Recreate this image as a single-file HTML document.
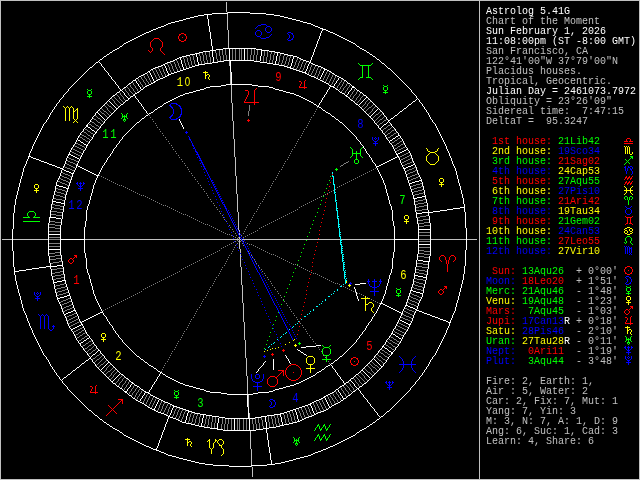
<!DOCTYPE html>
<html><head><meta charset="utf-8"><title>Astrolog 5.41G</title>
<style>
html,body{margin:0;padding:0;background:#000;width:640px;height:480px;overflow:hidden}
svg{position:absolute;left:0;top:0}
#all{position:absolute;left:0;top:0;width:640px;height:480px;will-change:transform}
.t{position:absolute;left:486px;height:10px;font:10px/10px "Liberation Mono",monospace;white-space:pre;color:#c0c0c0}
.w{color:#fff}.l{color:#c0c0c0}.r{color:#f00}.y{color:#ff0}.g{color:#0f0}.b{color:#00f}
svg text{font:13.5px "Liberation Mono",monospace;text-anchor:middle;letter-spacing:2.15px}
svg .z{font:12.5px "Liberation Sans",sans-serif}
</style></head><body>
<div id="all">
<svg width="640" height="480" viewBox="0 0 640 480" shape-rendering="crispEdges">
<path fill="#ffffff" d="M228 12h22v1h-22zM212 13h16v1h-16zM250 13h16v1h-16zM204 14h8v1h-8zM266 14h8v1h-8zM198 15h6v1h-6zM207 15h1v1h-1zM274 15h6v1h-6zM194 16h4v1h-4zM207 16h1v1h-1zM280 16h4v1h-4zM190 17h4v1h-4zM207 17h1v1h-1zM284 17h4v1h-4zM186 18h4v1h-4zM207 18h1v1h-1zM288 18h4v1h-4zM183 19h3v1h-3zM208 19h1v1h-1zM292 19h4v1h-4zM179 20h4v1h-4zM208 20h1v1h-1zM296 20h4v1h-4zM175 21h4v1h-4zM208 21h1v1h-1zM300 21h3v1h-3zM171 22h4v1h-4zM208 22h1v1h-1zM303 22h4v1h-4zM168 23h3v1h-3zM208 23h1v1h-1zM307 23h4v1h-4zM166 24h2v1h-2zM208 24h1v1h-1zM311 24h2v1h-2zM164 25h2v1h-2zM208 25h1v1h-1zM313 25h2v1h-2zM161 26h3v1h-3zM209 26h1v1h-1zM315 26h3v1h-3zM158 27h3v1h-3zM209 27h1v1h-1zM318 27h2v1h-2zM156 28h2v1h-2zM209 28h1v1h-1zM320 28h3v1h-3zM153 29h3v1h-3zM209 29h1v1h-1zM322 29h4v1h-4zM151 30h2v1h-2zM209 30h1v1h-1zM322 30h1v1h-1zM326 30h2v1h-2zM149 31h2v1h-2zM209 31h1v1h-1zM321 31h1v1h-1zM328 31h2v1h-2zM146 32h3v1h-3zM210 32h1v1h-1zM321 32h1v1h-1zM330 32h3v1h-3zM144 33h2v1h-2zM210 33h1v1h-1zM320 33h1v1h-1zM333 33h2v1h-2zM142 34h2v1h-2zM210 34h1v1h-1zM320 34h1v1h-1zM335 34h2v1h-2zM140 35h2v1h-2zM210 35h1v1h-1zM320 35h1v1h-1zM337 35h2v1h-2zM138 36h2v1h-2zM210 36h1v1h-1zM319 36h1v1h-1zM339 36h2v1h-2zM136 37h2v1h-2zM210 37h1v1h-1zM319 37h1v1h-1zM341 37h2v1h-2zM134 38h2v1h-2zM210 38h1v1h-1zM319 38h1v1h-1zM343 38h2v1h-2zM132 39h2v1h-2zM211 39h1v1h-1zM318 39h1v1h-1zM345 39h2v1h-2zM130 40h2v1h-2zM211 40h1v1h-1zM318 40h1v1h-1zM347 40h2v1h-2zM128 41h2v1h-2zM211 41h1v1h-1zM317 41h1v1h-1zM349 41h2v1h-2zM126 42h2v1h-2zM211 42h1v1h-1zM317 42h1v1h-1zM351 42h2v1h-2zM124 43h2v1h-2zM211 43h1v1h-1zM317 43h1v1h-1zM353 43h2v1h-2zM123 44h1v1h-1zM211 44h1v1h-1zM316 44h1v1h-1zM355 44h1v1h-1zM122 45h1v1h-1zM211 45h1v1h-1zM316 45h1v1h-1zM356 45h1v1h-1zM120 46h2v1h-2zM212 46h1v1h-1zM316 46h1v1h-1zM357 46h2v1h-2zM119 47h1v1h-1zM212 47h1v1h-1zM315 47h1v1h-1zM359 47h1v1h-1zM117 48h2v1h-2zM212 48h1v1h-1zM223 48h33v1h-33zM315 48h1v1h-1zM360 48h2v1h-2zM115 49h2v1h-2zM212 49h1v1h-1zM216 49h7v1h-7zM229 49h1v1h-1zM244 49h1v1h-1zM256 49h6v1h-6zM314 49h1v1h-1zM362 49h2v1h-2zM113 50h2v1h-2zM210 50h6v1h-6zM229 50h1v1h-1zM244 50h1v1h-1zM261 50h8v1h-8zM314 50h1v1h-1zM364 50h2v1h-2zM112 51h1v1h-1zM203 51h7v1h-7zM212 51h1v1h-1zM229 51h1v1h-1zM244 51h1v1h-1zM261 51h1v1h-1zM269 51h6v1h-6zM314 51h1v1h-1zM366 51h1v1h-1zM110 52h2v1h-2zM199 52h4v1h-4zM212 52h1v1h-1zM229 52h1v1h-1zM244 52h1v1h-1zM261 52h1v1h-1zM275 52h5v1h-5zM313 52h1v1h-1zM367 52h2v1h-2zM109 53h1v1h-1zM195 53h4v1h-4zM212 53h1v1h-1zM229 53h1v1h-1zM244 53h1v1h-1zM261 53h1v1h-1zM277 53h1v1h-1zM280 53h4v1h-4zM313 53h1v1h-1zM369 53h1v1h-1zM107 54h2v1h-2zM190 54h5v1h-5zM196 54h1v1h-1zM212 54h1v1h-1zM229 54h1v1h-1zM244 54h1v1h-1zM261 54h1v1h-1zM277 54h1v1h-1zM284 54h4v1h-4zM313 54h1v1h-1zM370 54h2v1h-2zM106 55h1v1h-1zM186 55h4v1h-4zM196 55h1v1h-1zM212 55h1v1h-1zM229 55h1v1h-1zM244 55h1v1h-1zM261 55h1v1h-1zM277 55h1v1h-1zM288 55h5v1h-5zM312 55h1v1h-1zM372 55h1v1h-1zM104 56h2v1h-2zM182 56h4v1h-4zM196 56h1v1h-1zM212 56h1v1h-1zM229 56h1v1h-1zM244 56h1v1h-1zM260 56h1v1h-1zM276 56h1v1h-1zM293 56h4v1h-4zM312 56h1v1h-1zM373 56h2v1h-2zM103 57h1v1h-1zM179 57h3v1h-3zM197 57h1v1h-1zM213 57h1v1h-1zM229 57h1v1h-1zM244 57h1v1h-1zM260 57h1v1h-1zM276 57h1v1h-1zM293 57h1v1h-1zM297 57h2v1h-2zM311 57h1v1h-1zM375 57h1v1h-1zM102 58h1v1h-1zM177 58h2v1h-2zM180 58h1v1h-1zM197 58h1v1h-1zM213 58h1v1h-1zM229 58h1v1h-1zM244 58h1v1h-1zM260 58h1v1h-1zM276 58h1v1h-1zM293 58h1v1h-1zM299 58h2v1h-2zM311 58h1v1h-1zM376 58h1v1h-1zM100 59h2v1h-2zM175 59h2v1h-2zM180 59h1v1h-1zM197 59h1v1h-1zM213 59h1v1h-1zM229 59h1v1h-1zM244 59h1v1h-1zM260 59h1v1h-1zM276 59h1v1h-1zM292 59h1v1h-1zM301 59h2v1h-2zM311 59h1v1h-1zM377 59h2v1h-2zM99 60h1v1h-1zM173 60h2v1h-2zM181 60h1v1h-1zM197 60h1v1h-1zM213 60h1v1h-1zM224 60h30v1h-30zM260 60h1v1h-1zM276 60h1v1h-1zM292 60h1v1h-1zM303 60h3v1h-3zM310 60h1v1h-1zM379 60h1v1h-1zM98 61h1v1h-1zM170 61h3v1h-3zM181 61h1v1h-1zM197 61h1v1h-1zM213 61h1v1h-1zM218 61h6v1h-6zM230 61h1v1h-1zM254 61h6v1h-6zM275 61h1v1h-1zM292 61h1v1h-1zM306 61h3v1h-3zM310 61h1v1h-1zM380 61h1v1h-1zM96 62h2v1h-2zM99 62h1v1h-1zM167 62h3v1h-3zM181 62h1v1h-1zM198 62h1v1h-1zM212 62h6v1h-6zM230 62h1v1h-1zM260 62h7v1h-7zM275 62h1v1h-1zM292 62h1v1h-1zM309 62h2v1h-2zM381 62h1v1h-1zM95 63h1v1h-1zM100 63h1v1h-1zM165 63h2v1h-2zM181 63h1v1h-1zM198 63h1v1h-1zM205 63h7v1h-7zM230 63h1v1h-1zM267 63h6v1h-6zM275 63h1v1h-1zM291 63h1v1h-1zM309 63h1v1h-1zM311 63h2v1h-2zM382 63h2v1h-2zM94 64h1v1h-1zM101 64h1v1h-1zM163 64h2v1h-2zM182 64h1v1h-1zM198 64h7v1h-7zM230 64h1v1h-1zM273 64h6v1h-6zM291 64h1v1h-1zM308 64h1v1h-1zM313 64h2v1h-2zM384 64h1v1h-1zM93 65h1v1h-1zM101 65h1v1h-1zM161 65h2v1h-2zM164 65h1v1h-1zM182 65h1v1h-1zM195 65h4v1h-4zM230 65h1v1h-1zM279 65h5v1h-5zM291 65h1v1h-1zM308 65h1v1h-1zM315 65h3v1h-3zM385 65h1v1h-1zM92 66h1v1h-1zM102 66h1v1h-1zM158 66h3v1h-3zM165 66h1v1h-1zM182 66h1v1h-1zM192 66h3v1h-3zM230 66h1v1h-1zM284 66h3v1h-3zM290 66h1v1h-1zM307 66h1v1h-1zM318 66h3v1h-3zM386 66h1v1h-1zM90 67h2v1h-2zM103 67h1v1h-1zM155 67h3v1h-3zM165 67h1v1h-1zM183 67h1v1h-1zM189 67h3v1h-3zM230 67h1v1h-1zM287 67h4v1h-4zM307 67h1v1h-1zM321 67h2v1h-2zM387 67h1v1h-1zM89 68h1v1h-1zM104 68h1v1h-1zM153 68h2v1h-2zM166 68h1v1h-1zM183 68h1v1h-1zM186 68h3v1h-3zM230 68h1v1h-1zM290 68h3v1h-3zM307 68h1v1h-1zM323 68h2v1h-2zM388 68h2v1h-2zM88 69h1v1h-1zM104 69h1v1h-1zM151 69h2v1h-2zM166 69h1v1h-1zM183 69h3v1h-3zM230 69h1v1h-1zM293 69h3v1h-3zM306 69h1v1h-1zM324 69h3v1h-3zM390 69h1v1h-1zM87 70h1v1h-1zM105 70h1v1h-1zM150 70h1v1h-1zM166 70h1v1h-1zM180 70h3v1h-3zM230 70h1v1h-1zM296 70h3v1h-3zM306 70h1v1h-1zM324 70h1v1h-1zM327 70h2v1h-2zM391 70h1v1h-1zM86 71h1v1h-1zM106 71h1v1h-1zM148 71h2v1h-2zM167 71h1v1h-1zM177 71h3v1h-3zM230 71h1v1h-1zM299 71h3v1h-3zM305 71h1v1h-1zM323 71h1v1h-1zM329 71h2v1h-2zM392 71h1v1h-1zM85 72h1v1h-1zM107 72h1v1h-1zM147 72h1v1h-1zM149 72h1v1h-1zM167 72h1v1h-1zM174 72h3v1h-3zM231 72h1v1h-1zM302 72h4v1h-4zM323 72h1v1h-1zM331 72h1v1h-1zM393 72h1v1h-1zM84 73h1v1h-1zM108 73h1v1h-1zM145 73h2v1h-2zM150 73h1v1h-1zM168 73h1v1h-1zM171 73h3v1h-3zM231 73h1v1h-1zM305 73h2v1h-2zM322 73h1v1h-1zM332 73h2v1h-2zM394 73h1v1h-1zM83 74h1v1h-1zM108 74h1v1h-1zM143 74h2v1h-2zM150 74h1v1h-1zM168 74h3v1h-3zM231 74h1v1h-1zM307 74h2v1h-2zM322 74h1v1h-1zM334 74h1v1h-1zM395 74h1v1h-1zM82 75h1v1h-1zM109 75h1v1h-1zM141 75h2v1h-2zM151 75h1v1h-1zM167 75h2v1h-2zM231 75h1v1h-1zM309 75h2v1h-2zM321 75h1v1h-1zM335 75h2v1h-2zM396 75h1v1h-1zM81 76h1v1h-1zM110 76h1v1h-1zM139 76h2v1h-2zM151 76h1v1h-1zM165 76h2v1h-2zM231 76h1v1h-1zM311 76h3v1h-3zM321 76h1v1h-1zM337 76h2v1h-2zM397 76h1v1h-1zM80 77h1v1h-1zM111 77h1v1h-1zM138 77h1v1h-1zM152 77h1v1h-1zM163 77h2v1h-2zM231 77h1v1h-1zM314 77h2v1h-2zM320 77h1v1h-1zM339 77h2v1h-2zM398 77h1v1h-1zM79 78h1v1h-1zM111 78h1v1h-1zM136 78h2v1h-2zM152 78h1v1h-1zM160 78h3v1h-3zM231 78h1v1h-1zM316 78h2v1h-2zM320 78h1v1h-1zM338 78h1v1h-1zM341 78h2v1h-2zM399 78h1v1h-1zM78 79h1v1h-1zM112 79h1v1h-1zM135 79h1v1h-1zM153 79h1v1h-1zM158 79h2v1h-2zM231 79h1v1h-1zM318 79h2v1h-2zM338 79h1v1h-1zM343 79h1v1h-1zM400 79h1v1h-1zM77 80h1v1h-1zM113 80h1v1h-1zM133 80h3v1h-3zM153 80h1v1h-1zM156 80h2v1h-2zM231 80h1v1h-1zM320 80h2v1h-2zM337 80h1v1h-1zM344 80h2v1h-2zM401 80h1v1h-1zM76 81h1v1h-1zM114 81h1v1h-1zM132 81h1v1h-1zM136 81h1v1h-1zM154 81h2v1h-2zM231 81h1v1h-1zM322 81h2v1h-2zM336 81h1v1h-1zM346 81h1v1h-1zM402 81h1v1h-1zM75 82h1v1h-1zM115 82h1v1h-1zM131 82h1v1h-1zM136 82h1v1h-1zM153 82h2v1h-2zM231 82h1v1h-1zM324 82h2v1h-2zM336 82h1v1h-1zM347 82h1v1h-1zM403 82h1v1h-1zM74 83h1v1h-1zM115 83h1v1h-1zM129 83h2v1h-2zM137 83h1v1h-1zM151 83h2v1h-2zM231 83h1v1h-1zM326 83h2v1h-2zM335 83h1v1h-1zM348 83h2v1h-2zM404 83h1v1h-1zM73 84h1v1h-1zM116 84h1v1h-1zM128 84h1v1h-1zM138 84h1v1h-1zM149 84h2v1h-2zM226 84h26v1h-26zM328 84h1v1h-1zM334 84h1v1h-1zM350 84h1v1h-1zM405 84h1v1h-1zM72 85h1v1h-1zM117 85h1v1h-1zM127 85h1v1h-1zM138 85h1v1h-1zM147 85h2v1h-2zM221 85h5v1h-5zM252 85h6v1h-6zM329 85h2v1h-2zM334 85h1v1h-1zM351 85h1v1h-1zM406 85h1v1h-1zM71 86h1v1h-1zM118 86h1v1h-1zM126 86h1v1h-1zM139 86h1v1h-1zM145 86h2v1h-2zM210 86h11v1h-11zM258 86h11v1h-11zM330 86h4v1h-4zM352 86h2v1h-2zM407 86h1v1h-1zM70 87h1v1h-1zM118 87h1v1h-1zM124 87h2v1h-2zM140 87h1v1h-1zM144 87h1v1h-1zM206 87h4v1h-4zM269 87h4v1h-4zM329 87h1v1h-1zM333 87h2v1h-2zM352 87h3v1h-3zM408 87h1v1h-1zM69 88h1v1h-1zM119 88h1v1h-1zM123 88h1v1h-1zM140 88h1v1h-1zM143 88h1v1h-1zM204 88h2v1h-2zM273 88h2v1h-2zM329 88h1v1h-1zM335 88h1v1h-1zM351 88h1v1h-1zM355 88h1v1h-1zM409 88h1v1h-1zM68 89h1v1h-1zM120 89h1v1h-1zM122 89h1v1h-1zM141 89h2v1h-2zM200 89h4v1h-4zM275 89h4v1h-4zM328 89h1v1h-1zM336 89h2v1h-2zM351 89h1v1h-1zM356 89h1v1h-1zM410 89h1v1h-1zM68 90h1v1h-1zM120 90h2v1h-2zM140 90h1v1h-1zM196 90h4v1h-4zM279 90h4v1h-4zM327 90h1v1h-1zM338 90h1v1h-1zM350 90h1v1h-1zM357 90h2v1h-2zM411 90h1v1h-1zM67 91h1v1h-1zM119 91h1v1h-1zM122 91h1v1h-1zM139 91h1v1h-1zM193 91h3v1h-3zM283 91h3v1h-3zM327 91h1v1h-1zM339 91h1v1h-1zM349 91h1v1h-1zM359 91h1v1h-1zM411 91h1v1h-1zM66 92h1v1h-1zM117 92h2v1h-2zM123 92h1v1h-1zM137 92h2v1h-2zM189 92h4v1h-4zM286 92h4v1h-4zM326 92h1v1h-1zM340 92h2v1h-2zM348 92h1v1h-1zM360 92h2v1h-2zM412 92h1v1h-1zM65 93h1v1h-1zM116 93h1v1h-1zM124 93h1v1h-1zM135 93h2v1h-2zM185 93h4v1h-4zM290 93h4v1h-4zM326 93h1v1h-1zM342 93h2v1h-2zM348 93h1v1h-1zM362 93h1v1h-1zM413 93h1v1h-1zM64 94h1v1h-1zM115 94h1v1h-1zM124 94h1v1h-1zM134 94h1v1h-1zM183 94h2v1h-2zM294 94h2v1h-2zM325 94h1v1h-1zM344 94h1v1h-1zM347 94h1v1h-1zM363 94h1v1h-1zM414 94h1v1h-1zM63 95h1v1h-1zM113 95h2v1h-2zM125 95h1v1h-1zM133 95h2v1h-2zM180 95h3v1h-3zM296 95h3v1h-3zM324 95h1v1h-1zM345 95h2v1h-2zM364 95h2v1h-2zM415 95h1v1h-1zM63 96h1v1h-1zM112 96h1v1h-1zM126 96h1v1h-1zM131 96h2v1h-2zM135 96h1v1h-1zM178 96h2v1h-2zM299 96h2v1h-2zM324 96h1v1h-1zM346 96h2v1h-2zM366 96h1v1h-1zM416 96h1v1h-1zM62 97h1v1h-1zM111 97h1v1h-1zM127 97h1v1h-1zM130 97h1v1h-1zM135 97h1v1h-1zM176 97h2v1h-2zM301 97h2v1h-2zM323 97h1v1h-1zM348 97h1v1h-1zM366 97h2v1h-2zM416 97h1v1h-1zM61 98h1v1h-1zM110 98h1v1h-1zM128 98h2v1h-2zM136 98h1v1h-1zM174 98h2v1h-2zM303 98h2v1h-2zM322 98h1v1h-1zM349 98h1v1h-1zM365 98h1v1h-1zM368 98h1v1h-1zM417 98h1v1h-1zM60 99h1v1h-1zM109 99h1v1h-1zM128 99h1v1h-1zM137 99h1v1h-1zM172 99h2v1h-2zM305 99h2v1h-2zM322 99h1v1h-1zM350 99h1v1h-1zM364 99h1v1h-1zM369 99h1v1h-1zM416 99h1v1h-1zM418 99h1v1h-1zM59 100h1v1h-1zM108 100h1v1h-1zM126 100h2v1h-2zM138 100h1v1h-1zM170 100h2v1h-2zM307 100h2v1h-2zM321 100h1v1h-1zM351 100h2v1h-2zM363 100h1v1h-1zM370 100h1v1h-1zM415 100h1v1h-1zM419 100h1v1h-1zM59 101h1v1h-1zM107 101h1v1h-1zM109 101h1v1h-1zM125 101h1v1h-1zM138 101h1v1h-1zM168 101h2v1h-2zM309 101h2v1h-2zM321 101h1v1h-1zM353 101h1v1h-1zM362 101h1v1h-1zM371 101h1v1h-1zM413 101h2v1h-2zM419 101h1v1h-1zM58 102h1v1h-1zM106 102h1v1h-1zM110 102h1v1h-1zM124 102h1v1h-1zM139 102h1v1h-1zM166 102h2v1h-2zM311 102h2v1h-2zM320 102h1v1h-1zM354 102h1v1h-1zM361 102h1v1h-1zM372 102h1v1h-1zM412 102h1v1h-1zM420 102h1v1h-1zM57 103h1v1h-1zM105 103h1v1h-1zM111 103h1v1h-1zM123 103h1v1h-1zM140 103h1v1h-1zM164 103h2v1h-2zM313 103h1v1h-1zM319 103h1v1h-1zM355 103h1v1h-1zM360 103h1v1h-1zM373 103h1v1h-1zM411 103h1v1h-1zM421 103h1v1h-1zM56 104h1v1h-1zM104 104h1v1h-1zM112 104h1v1h-1zM121 104h2v1h-2zM141 104h1v1h-1zM163 104h1v1h-1zM314 104h2v1h-2zM319 104h1v1h-1zM356 104h2v1h-2zM359 104h1v1h-1zM374 104h1v1h-1zM409 104h2v1h-2zM422 104h1v1h-1zM56 105h1v1h-1zM103 105h1v1h-1zM113 105h1v1h-1zM120 105h1v1h-1zM141 105h1v1h-1zM162 105h1v1h-1zM316 105h1v1h-1zM318 105h1v1h-1zM358 105h1v1h-1zM375 105h1v1h-1zM408 105h1v1h-1zM422 105h1v1h-1zM55 106h1v1h-1zM102 106h1v1h-1zM114 106h1v1h-1zM119 106h1v1h-1zM142 106h1v1h-1zM160 106h2v1h-2zM317 106h2v1h-2zM359 106h1v1h-1zM376 106h1v1h-1zM407 106h1v1h-1zM423 106h1v1h-1zM54 107h1v1h-1zM101 107h1v1h-1zM115 107h1v1h-1zM118 107h1v1h-1zM143 107h1v1h-1zM158 107h2v1h-2zM319 107h2v1h-2zM360 107h1v1h-1zM377 107h1v1h-1zM406 107h1v1h-1zM424 107h1v1h-1zM54 108h1v1h-1zM100 108h1v1h-1zM116 108h2v1h-2zM143 108h1v1h-1zM157 108h1v1h-1zM321 108h1v1h-1zM361 108h1v1h-1zM378 108h1v1h-1zM404 108h2v1h-2zM424 108h1v1h-1zM53 109h1v1h-1zM99 109h1v1h-1zM116 109h1v1h-1zM144 109h1v1h-1zM155 109h2v1h-2zM322 109h1v1h-1zM362 109h1v1h-1zM377 109h1v1h-1zM379 109h1v1h-1zM403 109h1v1h-1zM425 109h1v1h-1zM52 110h1v1h-1zM98 110h1v1h-1zM115 110h1v1h-1zM145 110h1v1h-1zM154 110h1v1h-1zM323 110h2v1h-2zM363 110h1v1h-1zM376 110h1v1h-1zM380 110h1v1h-1zM402 110h1v1h-1zM426 110h1v1h-1zM52 111h1v1h-1zM97 111h1v1h-1zM114 111h1v1h-1zM146 111h1v1h-1zM153 111h1v1h-1zM325 111h1v1h-1zM364 111h1v1h-1zM375 111h1v1h-1zM381 111h1v1h-1zM400 111h2v1h-2zM426 111h1v1h-1zM51 112h1v1h-1zM96 112h2v1h-2zM113 112h1v1h-1zM146 112h1v1h-1zM151 112h2v1h-2zM326 112h2v1h-2zM365 112h1v1h-1zM374 112h1v1h-1zM382 112h1v1h-1zM399 112h1v1h-1zM427 112h1v1h-1zM50 113h1v1h-1zM95 113h1v1h-1zM98 113h1v1h-1zM112 113h1v1h-1zM147 113h1v1h-1zM149 113h2v1h-2zM328 113h2v1h-2zM366 113h1v1h-1zM373 113h1v1h-1zM383 113h1v1h-1zM398 113h1v1h-1zM428 113h1v1h-1zM50 114h1v1h-1zM95 114h1v1h-1zM99 114h1v1h-1zM111 114h1v1h-1zM148 114h1v1h-1zM330 114h1v1h-1zM367 114h1v1h-1zM372 114h1v1h-1zM383 114h1v1h-1zM397 114h1v1h-1zM428 114h1v1h-1zM49 115h1v1h-1zM94 115h1v1h-1zM100 115h1v1h-1zM110 115h1v1h-1zM146 115h2v1h-2zM331 115h1v1h-1zM368 115h1v1h-1zM371 115h1v1h-1zM384 115h1v1h-1zM395 115h2v1h-2zM429 115h1v1h-1zM49 116h1v1h-1zM93 116h1v1h-1zM101 116h1v1h-1zM109 116h1v1h-1zM145 116h1v1h-1zM332 116h2v1h-2zM369 116h2v1h-2zM385 116h1v1h-1zM394 116h1v1h-1zM429 116h1v1h-1zM48 117h1v1h-1zM92 117h1v1h-1zM102 117h1v1h-1zM108 117h1v1h-1zM144 117h1v1h-1zM334 117h1v1h-1zM370 117h1v1h-1zM386 117h1v1h-1zM393 117h1v1h-1zM430 117h1v1h-1zM48 118h1v1h-1zM92 118h1v1h-1zM103 118h1v1h-1zM107 118h1v1h-1zM142 118h2v1h-2zM335 118h1v1h-1zM371 118h1v1h-1zM386 118h1v1h-1zM391 118h2v1h-2zM430 118h1v1h-1zM47 119h1v1h-1zM91 119h1v1h-1zM104 119h1v1h-1zM106 119h1v1h-1zM141 119h1v1h-1zM179 119h1v1h-1zM336 119h2v1h-2zM372 119h1v1h-1zM387 119h1v1h-1zM390 119h1v1h-1zM431 119h1v1h-1zM46 120h1v1h-1zM90 120h1v1h-1zM105 120h1v1h-1zM140 120h1v1h-1zM179 120h1v1h-1zM338 120h1v1h-1zM373 120h1v1h-1zM388 120h2v1h-2zM432 120h1v1h-1zM46 121h1v1h-1zM90 121h1v1h-1zM104 121h1v1h-1zM139 121h1v1h-1zM180 121h1v1h-1zM339 121h1v1h-1zM374 121h1v1h-1zM388 121h1v1h-1zM432 121h1v1h-1zM45 122h1v1h-1zM89 122h1v1h-1zM104 122h1v1h-1zM137 122h2v1h-2zM180 122h1v1h-1zM340 122h2v1h-2zM374 122h1v1h-1zM387 122h1v1h-1zM389 122h1v1h-1zM433 122h1v1h-1zM44 123h1v1h-1zM88 123h1v1h-1zM103 123h1v1h-1zM136 123h1v1h-1zM181 123h1v1h-1zM342 123h1v1h-1zM375 123h1v1h-1zM386 123h1v1h-1zM390 123h1v1h-1zM434 123h1v1h-1zM43 124h1v1h-1zM87 124h1v1h-1zM102 124h1v1h-1zM135 124h1v1h-1zM181 124h1v1h-1zM343 124h1v1h-1zM376 124h1v1h-1zM384 124h2v1h-2zM391 124h1v1h-1zM435 124h1v1h-1zM43 125h1v1h-1zM86 125h2v1h-2zM101 125h1v1h-1zM134 125h1v1h-1zM182 125h1v1h-1zM344 125h1v1h-1zM377 125h1v1h-1zM383 125h1v1h-1zM391 125h1v1h-1zM435 125h1v1h-1zM42 126h1v1h-1zM86 126h2v1h-2zM100 126h1v1h-1zM133 126h1v1h-1zM182 126h1v1h-1zM345 126h1v1h-1zM378 126h1v1h-1zM382 126h1v1h-1zM392 126h1v1h-1zM436 126h1v1h-1zM42 127h1v1h-1zM85 127h1v1h-1zM88 127h2v1h-2zM100 127h1v1h-1zM132 127h1v1h-1zM183 127h1v1h-1zM346 127h1v1h-1zM378 127h1v1h-1zM381 127h1v1h-1zM393 127h1v1h-1zM436 127h1v1h-1zM41 128h1v1h-1zM84 128h1v1h-1zM90 128h1v1h-1zM99 128h1v1h-1zM131 128h1v1h-1zM183 128h1v1h-1zM347 128h1v1h-1zM379 128h2v1h-2zM394 128h1v1h-1zM437 128h1v1h-1zM41 129h1v1h-1zM83 129h1v1h-1zM91 129h1v1h-1zM98 129h1v1h-1zM130 129h1v1h-1zM348 129h1v1h-1zM380 129h1v1h-1zM395 129h1v1h-1zM437 129h1v1h-1zM40 130h1v1h-1zM83 130h1v1h-1zM92 130h2v1h-2zM97 130h1v1h-1zM129 130h1v1h-1zM349 130h1v1h-1zM381 130h1v1h-1zM395 130h1v1h-1zM438 130h1v1h-1zM40 131h1v1h-1zM82 131h1v1h-1zM94 131h1v1h-1zM96 131h1v1h-1zM128 131h1v1h-1zM350 131h1v1h-1zM382 131h1v1h-1zM396 131h1v1h-1zM438 131h1v1h-1zM39 132h1v1h-1zM81 132h1v1h-1zM95 132h2v1h-2zM127 132h1v1h-1zM351 132h1v1h-1zM382 132h1v1h-1zM397 132h1v1h-1zM439 132h1v1h-1zM39 133h1v1h-1zM80 133h1v1h-1zM95 133h1v1h-1zM126 133h1v1h-1zM352 133h1v1h-1zM383 133h1v1h-1zM398 133h1v1h-1zM439 133h1v1h-1zM38 134h1v1h-1zM80 134h1v1h-1zM94 134h1v1h-1zM125 134h1v1h-1zM353 134h1v1h-1zM384 134h1v1h-1zM398 134h1v1h-1zM440 134h1v1h-1zM38 135h1v1h-1zM79 135h1v1h-1zM93 135h1v1h-1zM124 135h1v1h-1zM354 135h1v1h-1zM385 135h1v1h-1zM398 135h2v1h-2zM440 135h1v1h-1zM37 136h1v1h-1zM78 136h1v1h-1zM93 136h1v1h-1zM123 136h1v1h-1zM355 136h1v1h-1zM385 136h1v1h-1zM396 136h2v1h-2zM400 136h1v1h-1zM441 136h1v1h-1zM37 137h1v1h-1zM78 137h1v1h-1zM92 137h1v1h-1zM122 137h1v1h-1zM356 137h1v1h-1zM386 137h1v1h-1zM395 137h1v1h-1zM400 137h1v1h-1zM441 137h1v1h-1zM36 138h1v1h-1zM77 138h1v1h-1zM92 138h1v1h-1zM122 138h1v1h-1zM356 138h1v1h-1zM386 138h1v1h-1zM393 138h2v1h-2zM401 138h1v1h-1zM442 138h1v1h-1zM36 139h1v1h-1zM77 139h1v1h-1zM91 139h1v1h-1zM121 139h1v1h-1zM357 139h1v1h-1zM387 139h1v1h-1zM392 139h1v1h-1zM402 139h1v1h-1zM442 139h1v1h-1zM35 140h1v1h-1zM76 140h1v1h-1zM78 140h2v1h-2zM90 140h1v1h-1zM120 140h1v1h-1zM358 140h1v1h-1zM388 140h1v1h-1zM390 140h2v1h-2zM402 140h1v1h-1zM443 140h1v1h-1zM35 141h1v1h-1zM76 141h1v1h-1zM80 141h1v1h-1zM89 141h1v1h-1zM119 141h1v1h-1zM359 141h1v1h-1zM389 141h1v1h-1zM403 141h1v1h-1zM443 141h1v1h-1zM34 142h1v1h-1zM75 142h1v1h-1zM81 142h2v1h-2zM89 142h1v1h-1zM119 142h1v1h-1zM360 142h1v1h-1zM389 142h1v1h-1zM403 142h1v1h-1zM444 142h1v1h-1zM34 143h1v1h-1zM75 143h1v1h-1zM83 143h1v1h-1zM88 143h1v1h-1zM118 143h1v1h-1zM360 143h1v1h-1zM390 143h1v1h-1zM404 143h1v1h-1zM444 143h1v1h-1zM33 144h1v1h-1zM74 144h1v1h-1zM84 144h2v1h-2zM87 144h1v1h-1zM117 144h1v1h-1zM361 144h1v1h-1zM391 144h1v1h-1zM404 144h1v1h-1zM445 144h1v1h-1zM33 145h1v1h-1zM73 145h1v1h-1zM86 145h2v1h-2zM116 145h1v1h-1zM362 145h1v1h-1zM392 145h1v1h-1zM405 145h1v1h-1zM445 145h1v1h-1zM32 146h1v1h-1zM73 146h1v1h-1zM86 146h1v1h-1zM116 146h1v1h-1zM363 146h1v1h-1zM392 146h1v1h-1zM405 146h1v1h-1zM446 146h1v1h-1zM32 147h1v1h-1zM72 147h1v1h-1zM86 147h1v1h-1zM115 147h1v1h-1zM363 147h1v1h-1zM393 147h1v1h-1zM406 147h1v1h-1zM446 147h1v1h-1zM32 148h1v1h-1zM71 148h1v1h-1zM85 148h1v1h-1zM114 148h1v1h-1zM364 148h1v1h-1zM393 148h1v1h-1zM407 148h1v1h-1zM446 148h1v1h-1zM31 149h1v1h-1zM71 149h1v1h-1zM85 149h1v1h-1zM113 149h1v1h-1zM365 149h1v1h-1zM394 149h1v1h-1zM406 149h2v1h-2zM447 149h1v1h-1zM31 150h1v1h-1zM70 150h1v1h-1zM84 150h1v1h-1zM113 150h1v1h-1zM365 150h1v1h-1zM394 150h1v1h-1zM404 150h2v1h-2zM408 150h1v1h-1zM447 150h1v1h-1zM30 151h1v1h-1zM70 151h1v1h-1zM83 151h1v1h-1zM112 151h1v1h-1zM366 151h1v1h-1zM395 151h1v1h-1zM402 151h2v1h-2zM409 151h1v1h-1zM448 151h1v1h-1zM30 152h1v1h-1zM69 152h1v1h-1zM83 152h1v1h-1zM112 152h1v1h-1zM366 152h1v1h-1zM395 152h1v1h-1zM400 152h2v1h-2zM409 152h1v1h-1zM448 152h1v1h-1zM29 153h1v1h-1zM69 153h1v1h-1zM82 153h1v1h-1zM111 153h1v1h-1zM367 153h1v1h-1zM396 153h1v1h-1zM398 153h2v1h-2zM410 153h1v1h-1zM449 153h1v1h-1zM29 154h1v1h-1zM68 154h3v1h-3zM82 154h1v1h-1zM110 154h1v1h-1zM368 154h1v1h-1zM396 154h2v1h-2zM410 154h1v1h-1zM449 154h1v1h-1zM29 155h1v1h-1zM68 155h1v1h-1zM71 155h2v1h-2zM81 155h1v1h-1zM110 155h1v1h-1zM369 155h1v1h-1zM397 155h1v1h-1zM411 155h1v1h-1zM449 155h1v1h-1zM28 156h3v1h-3zM67 156h1v1h-1zM73 156h2v1h-2zM81 156h1v1h-1zM109 156h1v1h-1zM369 156h1v1h-1zM397 156h2v1h-2zM411 156h1v1h-1zM450 156h1v1h-1zM28 157h1v1h-1zM31 157h2v1h-2zM67 157h1v1h-1zM75 157h2v1h-2zM80 157h1v1h-1zM108 157h1v1h-1zM370 157h1v1h-1zM395 157h2v1h-2zM398 157h1v1h-1zM411 157h1v1h-1zM450 157h1v1h-1zM28 158h1v1h-1zM33 158h3v1h-3zM66 158h1v1h-1zM77 158h2v1h-2zM80 158h1v1h-1zM107 158h1v1h-1zM371 158h1v1h-1zM393 158h2v1h-2zM399 158h1v1h-1zM412 158h1v1h-1zM451 158h1v1h-1zM27 159h1v1h-1zM36 159h3v1h-3zM66 159h1v1h-1zM79 159h1v1h-1zM107 159h1v1h-1zM371 159h1v1h-1zM391 159h2v1h-2zM399 159h1v1h-1zM412 159h1v1h-1zM451 159h1v1h-1zM27 160h1v1h-1zM39 160h2v1h-2zM66 160h1v1h-1zM79 160h1v1h-1zM106 160h1v1h-1zM372 160h1v1h-1zM389 160h2v1h-2zM400 160h1v1h-1zM412 160h1v1h-1zM451 160h1v1h-1zM26 161h1v1h-1zM41 161h3v1h-3zM65 161h1v1h-1zM78 161h1v1h-1zM106 161h1v1h-1zM372 161h1v1h-1zM387 161h2v1h-2zM400 161h1v1h-1zM413 161h1v1h-1zM452 161h1v1h-1zM26 162h1v1h-1zM44 162h3v1h-3zM65 162h1v1h-1zM78 162h1v1h-1zM105 162h1v1h-1zM373 162h1v1h-1zM385 162h2v1h-2zM400 162h1v1h-1zM413 162h1v1h-1zM452 162h1v1h-1zM26 163h1v1h-1zM47 163h2v1h-2zM65 163h1v1h-1zM77 163h1v1h-1zM104 163h1v1h-1zM374 163h1v1h-1zM383 163h2v1h-2zM401 163h1v1h-1zM414 163h1v1h-1zM452 163h1v1h-1zM25 164h1v1h-1zM49 164h3v1h-3zM64 164h1v1h-1zM77 164h1v1h-1zM104 164h1v1h-1zM375 164h1v1h-1zM381 164h2v1h-2zM401 164h1v1h-1zM413 164h2v1h-2zM453 164h1v1h-1zM25 165h1v1h-1zM52 165h3v1h-3zM64 165h1v1h-1zM76 165h2v1h-2zM103 165h1v1h-1zM375 165h1v1h-1zM379 165h2v1h-2zM402 165h1v1h-1zM411 165h2v1h-2zM415 165h1v1h-1zM453 165h1v1h-1zM24 166h1v1h-1zM55 166h2v1h-2zM63 166h1v1h-1zM76 166h1v1h-1zM78 166h2v1h-2zM102 166h1v1h-1zM376 166h3v1h-3zM402 166h1v1h-1zM408 166h3v1h-3zM415 166h1v1h-1zM454 166h1v1h-1zM24 167h1v1h-1zM57 167h3v1h-3zM63 167h1v1h-1zM76 167h1v1h-1zM80 167h2v1h-2zM102 167h1v1h-1zM376 167h1v1h-1zM403 167h1v1h-1zM406 167h2v1h-2zM416 167h1v1h-1zM454 167h1v1h-1zM23 168h1v1h-1zM60 168h3v1h-3zM75 168h1v1h-1zM82 168h2v1h-2zM101 168h1v1h-1zM377 168h1v1h-1zM403 168h3v1h-3zM416 168h1v1h-1zM455 168h1v1h-1zM23 169h1v1h-1zM62 169h2v1h-2zM75 169h1v1h-1zM84 169h2v1h-2zM101 169h1v1h-1zM377 169h1v1h-1zM404 169h1v1h-1zM416 169h1v1h-1zM455 169h1v1h-1zM23 170h1v1h-1zM61 170h1v1h-1zM64 170h2v1h-2zM74 170h1v1h-1zM86 170h2v1h-2zM100 170h1v1h-1zM378 170h1v1h-1zM404 170h1v1h-1zM417 170h1v1h-1zM455 170h1v1h-1zM23 171h1v1h-1zM61 171h1v1h-1zM66 171h3v1h-3zM74 171h1v1h-1zM88 171h2v1h-2zM100 171h1v1h-1zM378 171h1v1h-1zM405 171h1v1h-1zM417 171h1v1h-1zM456 171h1v1h-1zM22 172h1v1h-1zM61 172h1v1h-1zM69 172h2v1h-2zM73 172h1v1h-1zM90 172h2v1h-2zM99 172h1v1h-1zM379 172h1v1h-1zM405 172h1v1h-1zM417 172h1v1h-1zM456 172h1v1h-1zM22 173h1v1h-1zM60 173h1v1h-1zM71 173h3v1h-3zM92 173h2v1h-2zM99 173h1v1h-1zM379 173h1v1h-1zM405 173h1v1h-1zM418 173h1v1h-1zM456 173h1v1h-1zM22 174h1v1h-1zM60 174h1v1h-1zM72 174h1v1h-1zM94 174h2v1h-2zM98 174h1v1h-1zM380 174h1v1h-1zM406 174h1v1h-1zM418 174h1v1h-1zM456 174h1v1h-1zM22 175h1v1h-1zM60 175h1v1h-1zM72 175h1v1h-1zM96 175h3v1h-3zM380 175h1v1h-1zM406 175h1v1h-1zM419 175h1v1h-1zM457 175h1v1h-1zM21 176h1v1h-1zM59 176h1v1h-1zM72 176h1v1h-1zM97 176h1v1h-1zM381 176h1v1h-1zM406 176h1v1h-1zM419 176h1v1h-1zM457 176h1v1h-1zM21 177h1v1h-1zM59 177h1v1h-1zM71 177h1v1h-1zM97 177h1v1h-1zM381 177h1v1h-1zM407 177h1v1h-1zM420 177h1v1h-1zM457 177h1v1h-1zM21 178h1v1h-1zM58 178h1v1h-1zM71 178h1v1h-1zM96 178h1v1h-1zM382 178h1v1h-1zM407 178h1v1h-1zM420 178h1v1h-1zM457 178h1v1h-1zM20 179h1v1h-1zM58 179h1v1h-1zM71 179h1v1h-1zM96 179h1v1h-1zM382 179h1v1h-1zM407 179h1v1h-1zM421 179h1v1h-1zM458 179h1v1h-1zM20 180h1v1h-1zM57 180h1v1h-1zM70 180h1v1h-1zM95 180h1v1h-1zM383 180h1v1h-1zM408 180h1v1h-1zM419 180h3v1h-3zM458 180h1v1h-1zM20 181h1v1h-1zM57 181h1v1h-1zM70 181h1v1h-1zM95 181h1v1h-1zM383 181h1v1h-1zM408 181h1v1h-1zM415 181h4v1h-4zM421 181h1v1h-1zM458 181h1v1h-1zM20 182h1v1h-1zM56 182h1v1h-1zM70 182h1v1h-1zM95 182h1v1h-1zM383 182h1v1h-1zM408 182h1v1h-1zM412 182h3v1h-3zM422 182h1v1h-1zM458 182h1v1h-1zM19 183h1v1h-1zM56 183h1v1h-1zM69 183h1v1h-1zM94 183h1v1h-1zM384 183h1v1h-1zM409 183h3v1h-3zM422 183h1v1h-1zM459 183h1v1h-1zM19 184h1v1h-1zM56 184h1v1h-1zM69 184h1v1h-1zM94 184h1v1h-1zM384 184h1v1h-1zM409 184h1v1h-1zM422 184h1v1h-1zM459 184h1v1h-1zM19 185h1v1h-1zM56 185h3v1h-3zM69 185h1v1h-1zM93 185h1v1h-1zM385 185h1v1h-1zM409 185h1v1h-1zM422 185h1v1h-1zM459 185h1v1h-1zM19 186h1v1h-1zM55 186h1v1h-1zM59 186h4v1h-4zM68 186h1v1h-1zM93 186h1v1h-1zM385 186h1v1h-1zM410 186h1v1h-1zM423 186h1v1h-1zM460 186h1v1h-1zM18 187h1v1h-1zM55 187h1v1h-1zM63 187h3v1h-3zM68 187h1v1h-1zM93 187h1v1h-1zM385 187h1v1h-1zM410 187h1v1h-1zM423 187h1v1h-1zM460 187h1v1h-1zM18 188h1v1h-1zM55 188h1v1h-1zM66 188h3v1h-3zM93 188h1v1h-1zM385 188h1v1h-1zM410 188h1v1h-1zM423 188h1v1h-1zM460 188h1v1h-1zM18 189h1v1h-1zM55 189h1v1h-1zM67 189h1v1h-1zM92 189h1v1h-1zM386 189h1v1h-1zM411 189h1v1h-1zM423 189h1v1h-1zM460 189h1v1h-1zM18 190h1v1h-1zM55 190h1v1h-1zM67 190h1v1h-1zM92 190h1v1h-1zM386 190h1v1h-1zM411 190h1v1h-1zM424 190h1v1h-1zM461 190h1v1h-1zM17 191h1v1h-1zM54 191h1v1h-1zM67 191h1v1h-1zM92 191h1v1h-1zM386 191h1v1h-1zM411 191h1v1h-1zM424 191h1v1h-1zM461 191h1v1h-1zM17 192h1v1h-1zM54 192h1v1h-1zM66 192h1v1h-1zM92 192h1v1h-1zM386 192h1v1h-1zM412 192h1v1h-1zM424 192h1v1h-1zM461 192h1v1h-1zM17 193h1v1h-1zM54 193h1v1h-1zM66 193h1v1h-1zM91 193h1v1h-1zM387 193h1v1h-1zM412 193h1v1h-1zM424 193h1v1h-1zM461 193h1v1h-1zM17 194h1v1h-1zM54 194h1v1h-1zM66 194h1v1h-1zM91 194h1v1h-1zM387 194h1v1h-1zM412 194h1v1h-1zM424 194h1v1h-1zM462 194h1v1h-1zM16 195h1v1h-1zM53 195h1v1h-1zM65 195h1v1h-1zM91 195h1v1h-1zM387 195h1v1h-1zM413 195h1v1h-1zM425 195h1v1h-1zM462 195h1v1h-1zM16 196h1v1h-1zM53 196h1v1h-1zM65 196h1v1h-1zM90 196h1v1h-1zM388 196h1v1h-1zM413 196h1v1h-1zM422 196h4v1h-4zM462 196h1v1h-1zM16 197h1v1h-1zM53 197h1v1h-1zM65 197h1v1h-1zM90 197h1v1h-1zM388 197h1v1h-1zM413 197h1v1h-1zM417 197h5v1h-5zM425 197h1v1h-1zM462 197h1v1h-1zM16 198h1v1h-1zM53 198h1v1h-1zM65 198h1v1h-1zM90 198h1v1h-1zM388 198h1v1h-1zM413 198h4v1h-4zM425 198h1v1h-1zM463 198h1v1h-1zM15 199h1v1h-1zM52 199h1v1h-1zM65 199h1v1h-1zM90 199h1v1h-1zM388 199h1v1h-1zM414 199h1v1h-1zM426 199h1v1h-1zM463 199h1v1h-1zM15 200h1v1h-1zM52 200h1v1h-1zM64 200h1v1h-1zM89 200h1v1h-1zM389 200h1v1h-1zM414 200h1v1h-1zM426 200h1v1h-1zM463 200h1v1h-1zM15 201h1v1h-1zM52 201h4v1h-4zM64 201h1v1h-1zM89 201h1v1h-1zM389 201h1v1h-1zM414 201h1v1h-1zM426 201h1v1h-1zM463 201h1v1h-1zM15 202h1v1h-1zM52 202h1v1h-1zM56 202h5v1h-5zM64 202h1v1h-1zM89 202h1v1h-1zM389 202h1v1h-1zM414 202h1v1h-1zM426 202h1v1h-1zM463 202h1v1h-1zM15 203h1v1h-1zM52 203h1v1h-1zM61 203h4v1h-4zM89 203h1v1h-1zM389 203h1v1h-1zM414 203h1v1h-1zM427 203h1v1h-1zM463 203h1v1h-1zM15 204h1v1h-1zM51 204h1v1h-1zM64 204h1v1h-1zM88 204h1v1h-1zM390 204h1v1h-1zM414 204h1v1h-1zM427 204h1v1h-1zM464 204h1v1h-1zM14 205h1v1h-1zM51 205h1v1h-1zM64 205h1v1h-1zM88 205h1v1h-1zM390 205h1v1h-1zM415 205h1v1h-1zM427 205h1v1h-1zM464 205h1v1h-1zM14 206h1v1h-1zM51 206h1v1h-1zM63 206h1v1h-1zM87 206h1v1h-1zM391 206h1v1h-1zM415 206h1v1h-1zM427 206h1v1h-1zM464 206h1v1h-1zM14 207h1v1h-1zM51 207h1v1h-1zM63 207h1v1h-1zM87 207h1v1h-1zM391 207h1v1h-1zM415 207h1v1h-1zM427 207h1v1h-1zM460 207h5v1h-5zM14 208h1v1h-1zM51 208h1v1h-1zM63 208h1v1h-1zM87 208h1v1h-1zM391 208h1v1h-1zM415 208h1v1h-1zM427 208h1v1h-1zM453 208h7v1h-7zM464 208h1v1h-1zM14 209h1v1h-1zM51 209h1v1h-1zM63 209h1v1h-1zM87 209h1v1h-1zM391 209h1v1h-1zM415 209h1v1h-1zM427 209h1v1h-1zM447 209h6v1h-6zM464 209h1v1h-1zM14 210h1v1h-1zM50 210h1v1h-1zM63 210h1v1h-1zM86 210h1v1h-1zM392 210h1v1h-1zM415 210h1v1h-1zM428 210h1v1h-1zM440 210h7v1h-7zM464 210h1v1h-1zM14 211h1v1h-1zM50 211h1v1h-1zM63 211h1v1h-1zM86 211h1v1h-1zM392 211h1v1h-1zM415 211h1v1h-1zM428 211h1v1h-1zM433 211h7v1h-7zM464 211h1v1h-1zM14 212h1v1h-1zM50 212h1v1h-1zM62 212h1v1h-1zM86 212h1v1h-1zM392 212h1v1h-1zM416 212h1v1h-1zM422 212h11v1h-11zM465 212h1v1h-1zM13 213h1v1h-1zM50 213h1v1h-1zM62 213h1v1h-1zM86 213h1v1h-1zM392 213h1v1h-1zM416 213h6v1h-6zM428 213h1v1h-1zM465 213h1v1h-1zM13 214h1v1h-1zM50 214h1v1h-1zM62 214h1v1h-1zM86 214h1v1h-1zM392 214h1v1h-1zM416 214h1v1h-1zM428 214h1v1h-1zM465 214h1v1h-1zM13 215h1v1h-1zM50 215h1v1h-1zM62 215h1v1h-1zM86 215h1v1h-1zM392 215h1v1h-1zM416 215h1v1h-1zM428 215h1v1h-1zM465 215h1v1h-1zM13 216h1v1h-1zM50 216h1v1h-1zM62 216h1v1h-1zM86 216h1v1h-1zM392 216h1v1h-1zM416 216h1v1h-1zM429 216h1v1h-1zM465 216h1v1h-1zM13 217h1v1h-1zM49 217h7v1h-7zM62 217h1v1h-1zM86 217h1v1h-1zM392 217h1v1h-1zM416 217h1v1h-1zM429 217h1v1h-1zM465 217h1v1h-1zM13 218h1v1h-1zM49 218h1v1h-1zM56 218h5v1h-5zM62 218h1v1h-1zM86 218h1v1h-1zM392 218h1v1h-1zM417 218h1v1h-1zM429 218h1v1h-1zM465 218h1v1h-1zM13 219h1v1h-1zM49 219h1v1h-1zM61 219h1v1h-1zM86 219h1v1h-1zM392 219h1v1h-1zM417 219h1v1h-1zM429 219h1v1h-1zM465 219h1v1h-1zM13 220h1v1h-1zM49 220h1v1h-1zM61 220h1v1h-1zM86 220h1v1h-1zM392 220h1v1h-1zM417 220h1v1h-1zM429 220h1v1h-1zM465 220h1v1h-1zM13 221h1v1h-1zM49 221h1v1h-1zM61 221h1v1h-1zM85 221h1v1h-1zM393 221h1v1h-1zM417 221h1v1h-1zM429 221h1v1h-1zM465 221h1v1h-1zM13 222h1v1h-1zM49 222h1v1h-1zM61 222h1v1h-1zM85 222h1v1h-1zM393 222h1v1h-1zM417 222h1v1h-1zM429 222h1v1h-1zM465 222h1v1h-1zM13 223h1v1h-1zM48 223h1v1h-1zM61 223h1v1h-1zM85 223h1v1h-1zM393 223h1v1h-1zM417 223h1v1h-1zM430 223h1v1h-1zM465 223h1v1h-1zM13 224h1v1h-1zM48 224h1v1h-1zM61 224h1v1h-1zM85 224h1v1h-1zM393 224h1v1h-1zM418 224h1v1h-1zM430 224h1v1h-1zM465 224h1v1h-1zM13 225h1v1h-1zM48 225h1v1h-1zM60 225h1v1h-1zM85 225h1v1h-1zM393 225h1v1h-1zM418 225h1v1h-1zM430 225h1v1h-1zM465 225h1v1h-1zM13 226h1v1h-1zM48 226h1v1h-1zM60 226h1v1h-1zM85 226h1v1h-1zM394 226h1v1h-1zM418 226h1v1h-1zM430 226h1v1h-1zM465 226h1v1h-1zM13 227h1v1h-1zM48 227h1v1h-1zM60 227h1v1h-1zM84 227h1v1h-1zM394 227h1v1h-1zM418 227h1v1h-1zM430 227h1v1h-1zM465 227h1v1h-1zM13 228h1v1h-1zM48 228h1v1h-1zM60 228h1v1h-1zM84 228h1v1h-1zM394 228h1v1h-1zM418 228h1v1h-1zM430 228h1v1h-1zM466 228h1v1h-1zM12 229h1v1h-1zM48 229h1v1h-1zM60 229h1v1h-1zM84 229h1v1h-1zM394 229h1v1h-1zM418 229h13v1h-13zM466 229h1v1h-1zM12 230h1v1h-1zM48 230h1v1h-1zM60 230h1v1h-1zM84 230h1v1h-1zM394 230h1v1h-1zM418 230h1v1h-1zM430 230h1v1h-1zM466 230h1v1h-1zM12 231h1v1h-1zM48 231h1v1h-1zM60 231h1v1h-1zM84 231h1v1h-1zM394 231h1v1h-1zM418 231h1v1h-1zM430 231h1v1h-1zM466 231h1v1h-1zM12 232h1v1h-1zM48 232h1v1h-1zM60 232h1v1h-1zM84 232h1v1h-1zM394 232h1v1h-1zM418 232h1v1h-1zM430 232h1v1h-1zM466 232h1v1h-1zM12 233h1v1h-1zM48 233h1v1h-1zM60 233h1v1h-1zM84 233h1v1h-1zM394 233h1v1h-1zM418 233h1v1h-1zM430 233h1v1h-1zM466 233h1v1h-1zM12 234h1v1h-1zM48 234h13v1h-13zM84 234h1v1h-1zM394 234h1v1h-1zM418 234h1v1h-1zM430 234h1v1h-1zM466 234h1v1h-1zM12 235h1v1h-1zM48 235h1v1h-1zM60 235h1v1h-1zM84 235h1v1h-1zM394 235h1v1h-1zM418 235h1v1h-1zM430 235h1v1h-1zM466 235h1v1h-1zM12 236h1v1h-1zM48 236h1v1h-1zM60 236h1v1h-1zM84 236h1v1h-1zM394 236h1v1h-1zM418 236h1v1h-1zM430 236h1v1h-1zM466 236h1v1h-1zM12 237h1v1h-1zM48 237h1v1h-1zM60 237h1v1h-1zM84 237h1v1h-1zM394 237h1v1h-1zM418 237h1v1h-1zM430 237h1v1h-1zM466 237h1v1h-1zM12 238h1v1h-1zM48 238h1v1h-1zM60 238h1v1h-1zM84 238h1v1h-1zM394 238h1v1h-1zM418 238h1v1h-1zM430 238h1v1h-1zM466 238h1v1h-1zM12 239h1v1h-1zM48 239h1v1h-1zM60 239h25v1h-25zM394 239h25v1h-25zM430 239h1v1h-1zM466 239h1v1h-1zM12 240h1v1h-1zM48 240h1v1h-1zM60 240h1v1h-1zM84 240h1v1h-1zM394 240h1v1h-1zM418 240h1v1h-1zM430 240h1v1h-1zM466 240h1v1h-1zM12 241h1v1h-1zM48 241h1v1h-1zM60 241h1v1h-1zM84 241h1v1h-1zM394 241h1v1h-1zM418 241h1v1h-1zM430 241h1v1h-1zM466 241h1v1h-1zM12 242h1v1h-1zM48 242h1v1h-1zM60 242h1v1h-1zM84 242h1v1h-1zM394 242h1v1h-1zM418 242h1v1h-1zM430 242h1v1h-1zM466 242h1v1h-1zM12 243h1v1h-1zM48 243h1v1h-1zM60 243h1v1h-1zM84 243h1v1h-1zM394 243h1v1h-1zM418 243h1v1h-1zM430 243h1v1h-1zM466 243h1v1h-1zM12 244h1v1h-1zM48 244h1v1h-1zM60 244h1v1h-1zM84 244h1v1h-1zM394 244h1v1h-1zM418 244h13v1h-13zM466 244h1v1h-1zM12 245h1v1h-1zM48 245h1v1h-1zM60 245h1v1h-1zM84 245h1v1h-1zM394 245h1v1h-1zM418 245h1v1h-1zM430 245h1v1h-1zM466 245h1v1h-1zM12 246h1v1h-1zM48 246h1v1h-1zM60 246h1v1h-1zM84 246h1v1h-1zM394 246h1v1h-1zM418 246h1v1h-1zM430 246h1v1h-1zM466 246h1v1h-1zM12 247h1v1h-1zM48 247h1v1h-1zM60 247h1v1h-1zM84 247h1v1h-1zM394 247h1v1h-1zM418 247h1v1h-1zM430 247h1v1h-1zM466 247h1v1h-1zM12 248h1v1h-1zM48 248h1v1h-1zM60 248h1v1h-1zM84 248h1v1h-1zM394 248h1v1h-1zM418 248h1v1h-1zM430 248h1v1h-1zM466 248h1v1h-1zM12 249h1v1h-1zM48 249h13v1h-13zM84 249h1v1h-1zM394 249h1v1h-1zM418 249h1v1h-1zM430 249h1v1h-1zM466 249h1v1h-1zM12 250h1v1h-1zM48 250h1v1h-1zM60 250h1v1h-1zM84 250h1v1h-1zM394 250h1v1h-1zM418 250h1v1h-1zM430 250h1v1h-1zM465 250h1v1h-1zM13 251h1v1h-1zM48 251h1v1h-1zM60 251h1v1h-1zM84 251h1v1h-1zM394 251h1v1h-1zM418 251h1v1h-1zM430 251h1v1h-1zM465 251h1v1h-1zM13 252h1v1h-1zM48 252h1v1h-1zM60 252h1v1h-1zM84 252h1v1h-1zM393 252h1v1h-1zM418 252h1v1h-1zM430 252h1v1h-1zM465 252h1v1h-1zM13 253h1v1h-1zM48 253h1v1h-1zM60 253h1v1h-1zM85 253h1v1h-1zM393 253h1v1h-1zM418 253h1v1h-1zM430 253h1v1h-1zM465 253h1v1h-1zM13 254h1v1h-1zM48 254h1v1h-1zM60 254h1v1h-1zM85 254h1v1h-1zM393 254h1v1h-1zM417 254h1v1h-1zM430 254h1v1h-1zM465 254h1v1h-1zM13 255h1v1h-1zM48 255h1v1h-1zM61 255h1v1h-1zM85 255h1v1h-1zM393 255h1v1h-1zM417 255h1v1h-1zM430 255h1v1h-1zM465 255h1v1h-1zM13 256h1v1h-1zM49 256h1v1h-1zM61 256h1v1h-1zM85 256h1v1h-1zM393 256h1v1h-1zM417 256h1v1h-1zM429 256h1v1h-1zM465 256h1v1h-1zM13 257h1v1h-1zM49 257h1v1h-1zM61 257h1v1h-1zM85 257h1v1h-1zM393 257h1v1h-1zM417 257h1v1h-1zM429 257h1v1h-1zM465 257h1v1h-1zM13 258h1v1h-1zM49 258h1v1h-1zM61 258h1v1h-1zM86 258h1v1h-1zM392 258h1v1h-1zM417 258h1v1h-1zM429 258h1v1h-1zM465 258h1v1h-1zM13 259h1v1h-1zM49 259h1v1h-1zM61 259h1v1h-1zM86 259h1v1h-1zM392 259h1v1h-1zM417 259h1v1h-1zM429 259h1v1h-1zM465 259h1v1h-1zM13 260h1v1h-1zM49 260h1v1h-1zM61 260h1v1h-1zM86 260h1v1h-1zM392 260h1v1h-1zM416 260h1v1h-1zM418 260h5v1h-5zM429 260h1v1h-1zM465 260h1v1h-1zM13 261h1v1h-1zM49 261h1v1h-1zM62 261h1v1h-1zM86 261h1v1h-1zM392 261h1v1h-1zM416 261h1v1h-1zM423 261h7v1h-7zM465 261h1v1h-1zM13 262h1v1h-1zM49 262h1v1h-1zM62 262h1v1h-1zM86 262h1v1h-1zM392 262h1v1h-1zM416 262h1v1h-1zM428 262h1v1h-1zM465 262h1v1h-1zM13 263h1v1h-1zM50 263h1v1h-1zM62 263h1v1h-1zM86 263h1v1h-1zM392 263h1v1h-1zM416 263h1v1h-1zM428 263h1v1h-1zM465 263h1v1h-1zM13 264h1v1h-1zM50 264h1v1h-1zM62 264h1v1h-1zM86 264h1v1h-1zM392 264h1v1h-1zM416 264h1v1h-1zM428 264h1v1h-1zM465 264h1v1h-1zM13 265h1v1h-1zM50 265h1v1h-1zM57 265h6v1h-6zM86 265h1v1h-1zM392 265h1v1h-1zM416 265h1v1h-1zM428 265h1v1h-1zM465 265h1v1h-1zM13 266h1v1h-1zM46 266h11v1h-11zM62 266h1v1h-1zM86 266h1v1h-1zM392 266h1v1h-1zM416 266h1v1h-1zM428 266h1v1h-1zM464 266h1v1h-1zM14 267h1v1h-1zM39 267h7v1h-7zM50 267h1v1h-1zM63 267h1v1h-1zM86 267h1v1h-1zM392 267h1v1h-1zM415 267h1v1h-1zM428 267h1v1h-1zM464 267h1v1h-1zM14 268h1v1h-1zM32 268h7v1h-7zM50 268h1v1h-1zM63 268h1v1h-1zM86 268h1v1h-1zM392 268h1v1h-1zM415 268h1v1h-1zM428 268h1v1h-1zM464 268h1v1h-1zM14 269h1v1h-1zM26 269h6v1h-6zM51 269h1v1h-1zM63 269h1v1h-1zM87 269h1v1h-1zM391 269h1v1h-1zM415 269h1v1h-1zM427 269h1v1h-1zM464 269h1v1h-1zM14 270h1v1h-1zM19 270h7v1h-7zM51 270h1v1h-1zM63 270h1v1h-1zM87 270h1v1h-1zM391 270h1v1h-1zM415 270h1v1h-1zM427 270h1v1h-1zM464 270h1v1h-1zM14 271h5v1h-5zM51 271h1v1h-1zM63 271h1v1h-1zM87 271h1v1h-1zM391 271h1v1h-1zM415 271h1v1h-1zM427 271h1v1h-1zM464 271h1v1h-1zM14 272h1v1h-1zM51 272h1v1h-1zM63 272h1v1h-1zM87 272h1v1h-1zM391 272h1v1h-1zM415 272h1v1h-1zM427 272h1v1h-1zM464 272h1v1h-1zM14 273h1v1h-1zM51 273h1v1h-1zM63 273h1v1h-1zM88 273h1v1h-1zM390 273h1v1h-1zM414 273h1v1h-1zM427 273h1v1h-1zM464 273h1v1h-1zM14 274h1v1h-1zM51 274h1v1h-1zM64 274h1v1h-1zM88 274h1v1h-1zM390 274h1v1h-1zM414 274h1v1h-1zM427 274h1v1h-1zM463 274h1v1h-1zM15 275h1v1h-1zM51 275h1v1h-1zM64 275h1v1h-1zM89 275h1v1h-1zM389 275h1v1h-1zM414 275h4v1h-4zM426 275h1v1h-1zM463 275h1v1h-1zM15 276h1v1h-1zM52 276h1v1h-1zM64 276h1v1h-1zM89 276h1v1h-1zM389 276h1v1h-1zM414 276h1v1h-1zM418 276h5v1h-5zM426 276h1v1h-1zM463 276h1v1h-1zM15 277h1v1h-1zM52 277h1v1h-1zM64 277h1v1h-1zM89 277h1v1h-1zM389 277h1v1h-1zM414 277h1v1h-1zM423 277h4v1h-4zM463 277h1v1h-1zM15 278h1v1h-1zM52 278h1v1h-1zM64 278h1v1h-1zM89 278h1v1h-1zM389 278h1v1h-1zM414 278h1v1h-1zM426 278h1v1h-1zM463 278h1v1h-1zM15 279h1v1h-1zM52 279h1v1h-1zM64 279h1v1h-1zM90 279h1v1h-1zM388 279h1v1h-1zM413 279h1v1h-1zM426 279h1v1h-1zM463 279h1v1h-1zM15 280h1v1h-1zM53 280h1v1h-1zM62 280h4v1h-4zM90 280h1v1h-1zM388 280h1v1h-1zM413 280h1v1h-1zM425 280h1v1h-1zM462 280h1v1h-1zM16 281h1v1h-1zM53 281h1v1h-1zM57 281h5v1h-5zM65 281h1v1h-1zM90 281h1v1h-1zM388 281h1v1h-1zM413 281h1v1h-1zM425 281h1v1h-1zM462 281h1v1h-1zM16 282h1v1h-1zM53 282h4v1h-4zM65 282h1v1h-1zM90 282h1v1h-1zM388 282h1v1h-1zM413 282h1v1h-1zM425 282h1v1h-1zM462 282h1v1h-1zM16 283h1v1h-1zM53 283h1v1h-1zM65 283h1v1h-1zM91 283h1v1h-1zM360 283h6v1h-6zM387 283h1v1h-1zM413 283h1v1h-1zM425 283h1v1h-1zM462 283h1v1h-1zM16 284h1v1h-1zM54 284h1v1h-1zM66 284h1v1h-1zM91 284h1v1h-1zM355 284h5v1h-5zM387 284h1v1h-1zM412 284h1v1h-1zM424 284h1v1h-1zM461 284h1v1h-1zM17 285h1v1h-1zM54 285h1v1h-1zM66 285h1v1h-1zM91 285h1v1h-1zM387 285h1v1h-1zM412 285h1v1h-1zM424 285h1v1h-1zM461 285h1v1h-1zM17 286h1v1h-1zM54 286h1v1h-1zM66 286h1v1h-1zM92 286h1v1h-1zM386 286h1v1h-1zM412 286h1v1h-1zM424 286h1v1h-1zM461 286h1v1h-1zM17 287h1v1h-1zM54 287h1v1h-1zM67 287h1v1h-1zM92 287h1v1h-1zM354 287h1v1h-1zM386 287h1v1h-1zM411 287h1v1h-1zM424 287h1v1h-1zM461 287h1v1h-1zM17 288h1v1h-1zM54 288h1v1h-1zM67 288h1v1h-1zM92 288h1v1h-1zM354 288h1v1h-1zM386 288h1v1h-1zM411 288h1v1h-1zM423 288h1v1h-1zM460 288h1v1h-1zM18 289h1v1h-1zM55 289h1v1h-1zM67 289h1v1h-1zM92 289h1v1h-1zM355 289h1v1h-1zM386 289h1v1h-1zM411 289h1v1h-1zM423 289h1v1h-1zM460 289h1v1h-1zM18 290h1v1h-1zM55 290h1v1h-1zM68 290h1v1h-1zM93 290h1v1h-1zM355 290h1v1h-1zM385 290h1v1h-1zM410 290h3v1h-3zM423 290h1v1h-1zM460 290h1v1h-1zM18 291h1v1h-1zM55 291h1v1h-1zM68 291h1v1h-1zM93 291h1v1h-1zM355 291h1v1h-1zM385 291h1v1h-1zM410 291h1v1h-1zM413 291h3v1h-3zM423 291h1v1h-1zM460 291h1v1h-1zM18 292h1v1h-1zM55 292h1v1h-1zM68 292h1v1h-1zM93 292h1v1h-1zM356 292h1v1h-1zM385 292h1v1h-1zM410 292h1v1h-1zM416 292h4v1h-4zM423 292h1v1h-1zM459 292h1v1h-1zM19 293h1v1h-1zM56 293h1v1h-1zM69 293h1v1h-1zM93 293h1v1h-1zM356 293h1v1h-1zM385 293h1v1h-1zM409 293h1v1h-1zM420 293h3v1h-3zM459 293h1v1h-1zM19 294h1v1h-1zM56 294h1v1h-1zM69 294h1v1h-1zM94 294h1v1h-1zM356 294h1v1h-1zM384 294h1v1h-1zM409 294h1v1h-1zM422 294h1v1h-1zM459 294h1v1h-1zM19 295h1v1h-1zM56 295h1v1h-1zM67 295h3v1h-3zM94 295h1v1h-1zM356 295h1v1h-1zM384 295h1v1h-1zM409 295h1v1h-1zM422 295h1v1h-1zM459 295h1v1h-1zM20 296h1v1h-1zM56 296h1v1h-1zM64 296h3v1h-3zM70 296h1v1h-1zM95 296h1v1h-1zM357 296h1v1h-1zM383 296h1v1h-1zM408 296h1v1h-1zM422 296h1v1h-1zM458 296h1v1h-1zM20 297h1v1h-1zM57 297h1v1h-1zM60 297h4v1h-4zM70 297h1v1h-1zM95 297h1v1h-1zM357 297h1v1h-1zM383 297h1v1h-1zM408 297h1v1h-1zM421 297h1v1h-1zM458 297h1v1h-1zM20 298h1v1h-1zM57 298h3v1h-3zM70 298h1v1h-1zM95 298h1v1h-1zM357 298h1v1h-1zM383 298h1v1h-1zM408 298h1v1h-1zM421 298h1v1h-1zM458 298h1v1h-1zM20 299h1v1h-1zM57 299h1v1h-1zM71 299h1v1h-1zM96 299h1v1h-1zM358 299h1v1h-1zM382 299h1v1h-1zM407 299h1v1h-1zM420 299h1v1h-1zM458 299h1v1h-1zM21 300h1v1h-1zM58 300h1v1h-1zM71 300h1v1h-1zM96 300h1v1h-1zM358 300h1v1h-1zM382 300h1v1h-1zM407 300h1v1h-1zM420 300h1v1h-1zM457 300h1v1h-1zM21 301h1v1h-1zM58 301h1v1h-1zM71 301h1v1h-1zM97 301h1v1h-1zM381 301h1v1h-1zM407 301h1v1h-1zM419 301h1v1h-1zM457 301h1v1h-1zM21 302h1v1h-1zM59 302h1v1h-1zM72 302h1v1h-1zM97 302h1v1h-1zM381 302h1v1h-1zM406 302h1v1h-1zM419 302h1v1h-1zM457 302h1v1h-1zM21 303h1v1h-1zM59 303h1v1h-1zM72 303h1v1h-1zM98 303h1v1h-1zM380 303h3v1h-3zM406 303h1v1h-1zM418 303h1v1h-1zM456 303h1v1h-1zM22 304h1v1h-1zM60 304h1v1h-1zM72 304h1v1h-1zM98 304h1v1h-1zM380 304h1v1h-1zM383 304h2v1h-2zM406 304h1v1h-1zM418 304h1v1h-1zM456 304h1v1h-1zM22 305h1v1h-1zM60 305h1v1h-1zM73 305h1v1h-1zM99 305h1v1h-1zM379 305h1v1h-1zM385 305h2v1h-2zM405 305h3v1h-3zM418 305h1v1h-1zM456 305h1v1h-1zM22 306h1v1h-1zM61 306h1v1h-1zM73 306h1v1h-1zM99 306h1v1h-1zM379 306h1v1h-1zM387 306h2v1h-2zM405 306h1v1h-1zM408 306h2v1h-2zM417 306h1v1h-1zM456 306h1v1h-1zM22 307h1v1h-1zM61 307h1v1h-1zM73 307h1v1h-1zM100 307h1v1h-1zM378 307h1v1h-1zM389 307h2v1h-2zM404 307h1v1h-1zM410 307h3v1h-3zM417 307h1v1h-1zM455 307h1v1h-1zM23 308h1v1h-1zM61 308h1v1h-1zM74 308h1v1h-1zM100 308h1v1h-1zM378 308h1v1h-1zM391 308h2v1h-2zM404 308h1v1h-1zM413 308h2v1h-2zM417 308h1v1h-1zM455 308h1v1h-1zM23 309h1v1h-1zM62 309h1v1h-1zM74 309h1v1h-1zM101 309h1v1h-1zM377 309h1v1h-1zM393 309h2v1h-2zM403 309h1v1h-1zM415 309h2v1h-2zM455 309h1v1h-1zM23 310h1v1h-1zM62 310h1v1h-1zM73 310h3v1h-3zM101 310h1v1h-1zM377 310h1v1h-1zM395 310h2v1h-2zM403 310h1v1h-1zM416 310h3v1h-3zM455 310h1v1h-1zM24 311h1v1h-1zM62 311h1v1h-1zM71 311h2v1h-2zM75 311h1v1h-1zM102 311h1v1h-1zM376 311h1v1h-1zM397 311h2v1h-2zM402 311h1v1h-1zM415 311h1v1h-1zM419 311h3v1h-3zM454 311h1v1h-1zM24 312h1v1h-1zM63 312h1v1h-1zM68 312h3v1h-3zM76 312h1v1h-1zM100 312h3v1h-3zM376 312h1v1h-1zM399 312h2v1h-2zM402 312h1v1h-1zM415 312h1v1h-1zM422 312h2v1h-2zM454 312h1v1h-1zM25 313h1v1h-1zM63 313h1v1h-1zM66 313h2v1h-2zM76 313h1v1h-1zM98 313h2v1h-2zM103 313h1v1h-1zM375 313h1v1h-1zM401 313h2v1h-2zM414 313h1v1h-1zM424 313h3v1h-3zM453 313h1v1h-1zM25 314h1v1h-1zM64 314h2v1h-2zM77 314h1v1h-1zM96 314h2v1h-2zM103 314h1v1h-1zM374 314h1v1h-1zM401 314h1v1h-1zM414 314h1v1h-1zM427 314h3v1h-3zM453 314h1v1h-1zM26 315h1v1h-1zM64 315h1v1h-1zM77 315h1v1h-1zM94 315h2v1h-2zM104 315h1v1h-1zM374 315h1v1h-1zM401 315h1v1h-1zM413 315h1v1h-1zM430 315h2v1h-2zM452 315h1v1h-1zM26 316h1v1h-1zM65 316h1v1h-1zM78 316h1v1h-1zM92 316h2v1h-2zM105 316h1v1h-1zM373 316h1v1h-1zM400 316h1v1h-1zM413 316h1v1h-1zM432 316h3v1h-3zM452 316h1v1h-1zM26 317h1v1h-1zM65 317h1v1h-1zM78 317h1v1h-1zM90 317h2v1h-2zM106 317h1v1h-1zM372 317h1v1h-1zM400 317h1v1h-1zM413 317h1v1h-1zM435 317h3v1h-3zM452 317h1v1h-1zM27 318h1v1h-1zM66 318h1v1h-1zM78 318h1v1h-1zM88 318h2v1h-2zM106 318h1v1h-1zM372 318h1v1h-1zM399 318h1v1h-1zM412 318h1v1h-1zM438 318h2v1h-2zM451 318h1v1h-1zM27 319h1v1h-1zM66 319h1v1h-1zM79 319h1v1h-1zM86 319h2v1h-2zM107 319h1v1h-1zM371 319h1v1h-1zM399 319h1v1h-1zM412 319h1v1h-1zM440 319h3v1h-3zM451 319h1v1h-1zM27 320h1v1h-1zM66 320h1v1h-1zM79 320h1v1h-1zM84 320h2v1h-2zM107 320h1v1h-1zM371 320h1v1h-1zM398 320h1v1h-1zM400 320h2v1h-2zM412 320h1v1h-1zM443 320h3v1h-3zM450 320h1v1h-1zM28 321h1v1h-1zM67 321h1v1h-1zM80 321h1v1h-1zM82 321h2v1h-2zM108 321h1v1h-1zM370 321h1v1h-1zM398 321h1v1h-1zM402 321h2v1h-2zM411 321h1v1h-1zM446 321h2v1h-2zM450 321h1v1h-1zM28 322h1v1h-1zM67 322h1v1h-1zM80 322h2v1h-2zM109 322h1v1h-1zM369 322h1v1h-1zM397 322h1v1h-1zM404 322h2v1h-2zM411 322h1v1h-1zM448 322h3v1h-3zM29 323h1v1h-1zM67 323h1v1h-1zM81 323h1v1h-1zM109 323h1v1h-1zM368 323h1v1h-1zM397 323h1v1h-1zM406 323h2v1h-2zM410 323h1v1h-1zM449 323h1v1h-1zM29 324h1v1h-1zM68 324h1v1h-1zM81 324h2v1h-2zM110 324h1v1h-1zM368 324h1v1h-1zM396 324h1v1h-1zM408 324h3v1h-3zM449 324h1v1h-1zM29 325h1v1h-1zM68 325h1v1h-1zM79 325h2v1h-2zM82 325h1v1h-1zM111 325h1v1h-1zM367 325h1v1h-1zM396 325h1v1h-1zM409 325h1v1h-1zM449 325h1v1h-1zM30 326h1v1h-1zM69 326h1v1h-1zM77 326h2v1h-2zM83 326h1v1h-1zM112 326h1v1h-1zM366 326h1v1h-1zM395 326h1v1h-1zM409 326h1v1h-1zM448 326h1v1h-1zM30 327h1v1h-1zM69 327h1v1h-1zM75 327h2v1h-2zM83 327h1v1h-1zM112 327h1v1h-1zM366 327h1v1h-1zM395 327h1v1h-1zM408 327h1v1h-1zM448 327h1v1h-1zM31 328h1v1h-1zM70 328h1v1h-1zM73 328h2v1h-2zM84 328h1v1h-1zM113 328h1v1h-1zM365 328h1v1h-1zM394 328h1v1h-1zM408 328h1v1h-1zM447 328h1v1h-1zM31 329h1v1h-1zM71 329h2v1h-2zM84 329h1v1h-1zM113 329h1v1h-1zM365 329h1v1h-1zM393 329h1v1h-1zM407 329h1v1h-1zM447 329h1v1h-1zM32 330h1v1h-1zM71 330h1v1h-1zM85 330h1v1h-1zM114 330h1v1h-1zM364 330h1v1h-1zM393 330h1v1h-1zM407 330h1v1h-1zM446 330h1v1h-1zM32 331h1v1h-1zM72 331h1v1h-1zM85 331h1v1h-1zM115 331h1v1h-1zM363 331h1v1h-1zM392 331h1v1h-1zM406 331h1v1h-1zM446 331h1v1h-1zM32 332h1v1h-1zM73 332h1v1h-1zM86 332h1v1h-1zM115 332h1v1h-1zM362 332h1v1h-1zM392 332h1v1h-1zM405 332h1v1h-1zM446 332h1v1h-1zM33 333h1v1h-1zM73 333h1v1h-1zM86 333h1v1h-1zM116 333h1v1h-1zM362 333h1v1h-1zM391 333h2v1h-2zM405 333h1v1h-1zM445 333h1v1h-1zM33 334h1v1h-1zM74 334h1v1h-1zM87 334h1v1h-1zM117 334h1v1h-1zM361 334h1v1h-1zM391 334h1v1h-1zM393 334h2v1h-2zM404 334h1v1h-1zM445 334h1v1h-1zM34 335h1v1h-1zM74 335h1v1h-1zM88 335h1v1h-1zM118 335h1v1h-1zM360 335h1v1h-1zM390 335h1v1h-1zM395 335h1v1h-1zM403 335h1v1h-1zM444 335h1v1h-1zM34 336h1v1h-1zM75 336h1v1h-1zM89 336h1v1h-1zM118 336h1v1h-1zM359 336h1v1h-1zM389 336h1v1h-1zM396 336h2v1h-2zM403 336h1v1h-1zM444 336h1v1h-1zM35 337h1v1h-1zM75 337h1v1h-1zM89 337h1v1h-1zM119 337h1v1h-1zM359 337h1v1h-1zM389 337h1v1h-1zM398 337h1v1h-1zM402 337h1v1h-1zM443 337h1v1h-1zM35 338h1v1h-1zM76 338h1v1h-1zM87 338h2v1h-2zM90 338h1v1h-1zM120 338h1v1h-1zM358 338h1v1h-1zM388 338h1v1h-1zM399 338h2v1h-2zM402 338h1v1h-1zM443 338h1v1h-1zM36 339h1v1h-1zM76 339h1v1h-1zM86 339h1v1h-1zM91 339h1v1h-1zM121 339h1v1h-1zM357 339h1v1h-1zM387 339h1v1h-1zM401 339h1v1h-1zM442 339h1v1h-1zM36 340h1v1h-1zM77 340h1v1h-1zM84 340h2v1h-2zM92 340h1v1h-1zM122 340h1v1h-1zM356 340h1v1h-1zM386 340h1v1h-1zM401 340h1v1h-1zM442 340h1v1h-1zM37 341h1v1h-1zM78 341h1v1h-1zM83 341h1v1h-1zM92 341h1v1h-1zM122 341h1v1h-1zM356 341h1v1h-1zM386 341h1v1h-1zM400 341h1v1h-1zM441 341h1v1h-1zM37 342h1v1h-1zM78 342h1v1h-1zM81 342h2v1h-2zM93 342h1v1h-1zM123 342h1v1h-1zM355 342h1v1h-1zM385 342h1v1h-1zM400 342h1v1h-1zM441 342h1v1h-1zM38 343h1v1h-1zM79 343h2v1h-2zM93 343h1v1h-1zM124 343h1v1h-1zM354 343h1v1h-1zM385 343h1v1h-1zM399 343h1v1h-1zM440 343h1v1h-1zM38 344h1v1h-1zM80 344h1v1h-1zM94 344h1v1h-1zM125 344h1v1h-1zM353 344h1v1h-1zM384 344h1v1h-1zM398 344h1v1h-1zM440 344h1v1h-1zM39 345h1v1h-1zM80 345h1v1h-1zM95 345h1v1h-1zM126 345h1v1h-1zM316 345h5v1h-5zM352 345h1v1h-1zM383 345h1v1h-1zM398 345h1v1h-1zM439 345h1v1h-1zM39 346h1v1h-1zM81 346h1v1h-1zM96 346h1v1h-1zM127 346h1v1h-1zM306 346h10v1h-10zM351 346h1v1h-1zM382 346h2v1h-2zM397 346h1v1h-1zM439 346h1v1h-1zM40 347h1v1h-1zM82 347h1v1h-1zM96 347h1v1h-1zM128 347h1v1h-1zM301 347h5v1h-5zM350 347h1v1h-1zM382 347h1v1h-1zM384 347h1v1h-1zM396 347h1v1h-1zM438 347h1v1h-1zM40 348h1v1h-1zM83 348h1v1h-1zM97 348h1v1h-1zM129 348h1v1h-1zM349 348h1v1h-1zM381 348h1v1h-1zM385 348h2v1h-2zM395 348h1v1h-1zM438 348h1v1h-1zM41 349h1v1h-1zM83 349h1v1h-1zM98 349h1v1h-1zM130 349h1v1h-1zM297 349h1v1h-1zM348 349h1v1h-1zM380 349h1v1h-1zM387 349h1v1h-1zM395 349h1v1h-1zM437 349h1v1h-1zM41 350h1v1h-1zM84 350h1v1h-1zM98 350h2v1h-2zM131 350h1v1h-1zM298 350h2v1h-2zM347 350h1v1h-1zM379 350h1v1h-1zM388 350h1v1h-1zM394 350h1v1h-1zM437 350h1v1h-1zM42 351h1v1h-1zM85 351h1v1h-1zM97 351h1v1h-1zM100 351h1v1h-1zM132 351h1v1h-1zM300 351h1v1h-1zM346 351h1v1h-1zM378 351h1v1h-1zM389 351h2v1h-2zM393 351h1v1h-1zM436 351h1v1h-1zM42 352h1v1h-1zM86 352h1v1h-1zM96 352h1v1h-1zM100 352h1v1h-1zM133 352h1v1h-1zM301 352h2v1h-2zM345 352h1v1h-1zM378 352h1v1h-1zM391 352h2v1h-2zM436 352h1v1h-1zM43 353h1v1h-1zM87 353h1v1h-1zM95 353h1v1h-1zM101 353h1v1h-1zM134 353h1v1h-1zM303 353h1v1h-1zM344 353h1v1h-1zM377 353h1v1h-1zM391 353h2v1h-2zM435 353h1v1h-1zM43 354h1v1h-1zM87 354h1v1h-1zM93 354h2v1h-2zM102 354h1v1h-1zM135 354h1v1h-1zM304 354h2v1h-2zM343 354h1v1h-1zM376 354h1v1h-1zM391 354h1v1h-1zM435 354h1v1h-1zM44 355h1v1h-1zM88 355h1v1h-1zM92 355h1v1h-1zM103 355h1v1h-1zM136 355h1v1h-1zM285 355h1v1h-1zM306 355h1v1h-1zM342 355h1v1h-1zM375 355h1v1h-1zM390 355h1v1h-1zM434 355h1v1h-1zM45 356h1v1h-1zM89 356h1v1h-1zM91 356h1v1h-1zM104 356h1v1h-1zM137 356h2v1h-2zM286 356h1v1h-1zM340 356h2v1h-2zM374 356h1v1h-1zM389 356h1v1h-1zM433 356h1v1h-1zM46 357h1v1h-1zM90 357h1v1h-1zM104 357h1v1h-1zM139 357h1v1h-1zM286 357h1v1h-1zM339 357h1v1h-1zM374 357h1v1h-1zM388 357h1v1h-1zM432 357h1v1h-1zM46 358h1v1h-1zM89 358h2v1h-2zM105 358h1v1h-1zM140 358h1v1h-1zM287 358h1v1h-1zM338 358h1v1h-1zM373 358h1v1h-1zM388 358h1v1h-1zM432 358h1v1h-1zM47 359h1v1h-1zM88 359h1v1h-1zM91 359h1v1h-1zM106 359h1v1h-1zM141 359h2v1h-2zM273 359h1v1h-1zM288 359h1v1h-1zM337 359h1v1h-1zM372 359h1v1h-1zM374 359h1v1h-1zM387 359h1v1h-1zM431 359h1v1h-1zM48 360h1v1h-1zM86 360h2v1h-2zM92 360h1v1h-1zM107 360h1v1h-1zM143 360h1v1h-1zM273 360h1v1h-1zM288 360h1v1h-1zM335 360h2v1h-2zM371 360h1v1h-1zM375 360h1v1h-1zM386 360h1v1h-1zM430 360h1v1h-1zM48 361h1v1h-1zM85 361h1v1h-1zM92 361h1v1h-1zM108 361h1v1h-1zM144 361h1v1h-1zM265 361h1v1h-1zM273 361h1v1h-1zM289 361h1v1h-1zM334 361h1v1h-1zM370 361h1v1h-1zM376 361h1v1h-1zM386 361h1v1h-1zM430 361h1v1h-1zM49 362h1v1h-1zM84 362h1v1h-1zM93 362h1v1h-1zM108 362h2v1h-2zM145 362h2v1h-2zM264 362h1v1h-1zM273 362h1v1h-1zM289 362h1v1h-1zM333 362h1v1h-1zM369 362h1v1h-1zM377 362h1v1h-1zM385 362h1v1h-1zM429 362h1v1h-1zM49 363h1v1h-1zM82 363h2v1h-2zM94 363h1v1h-1zM107 363h1v1h-1zM110 363h1v1h-1zM147 363h1v1h-1zM263 363h1v1h-1zM273 363h1v1h-1zM290 363h1v1h-1zM331 363h2v1h-2zM368 363h1v1h-1zM378 363h1v1h-1zM384 363h1v1h-1zM429 363h1v1h-1zM50 364h1v1h-1zM81 364h1v1h-1zM95 364h1v1h-1zM106 364h1v1h-1zM111 364h1v1h-1zM148 364h1v1h-1zM263 364h1v1h-1zM273 364h1v1h-1zM330 364h1v1h-1zM367 364h1v1h-1zM379 364h1v1h-1zM383 364h1v1h-1zM428 364h1v1h-1zM50 365h1v1h-1zM80 365h1v1h-1zM95 365h1v1h-1zM105 365h1v1h-1zM112 365h1v1h-1zM149 365h2v1h-2zM262 365h1v1h-1zM273 365h1v1h-1zM328 365h2v1h-2zM331 365h1v1h-1zM366 365h1v1h-1zM380 365h1v1h-1zM383 365h1v1h-1zM428 365h1v1h-1zM51 366h1v1h-1zM79 366h1v1h-1zM96 366h1v1h-1zM104 366h1v1h-1zM113 366h1v1h-1zM151 366h2v1h-2zM261 366h1v1h-1zM273 366h1v1h-1zM326 366h2v1h-2zM332 366h1v1h-1zM365 366h1v1h-1zM381 366h2v1h-2zM427 366h1v1h-1zM52 367h1v1h-1zM77 367h2v1h-2zM97 367h1v1h-1zM103 367h1v1h-1zM114 367h1v1h-1zM153 367h1v1h-1zM260 367h1v1h-1zM273 367h1v1h-1zM325 367h1v1h-1zM332 367h1v1h-1zM364 367h1v1h-1zM381 367h1v1h-1zM426 367h1v1h-1zM52 368h1v1h-1zM76 368h1v1h-1zM98 368h1v1h-1zM102 368h1v1h-1zM115 368h1v1h-1zM154 368h2v1h-2zM259 368h1v1h-1zM273 368h1v1h-1zM324 368h1v1h-1zM333 368h1v1h-1zM363 368h1v1h-1zM380 368h1v1h-1zM426 368h1v1h-1zM53 369h1v1h-1zM75 369h1v1h-1zM99 369h1v1h-1zM101 369h1v1h-1zM116 369h1v1h-1zM156 369h1v1h-1zM258 369h1v1h-1zM273 369h1v1h-1zM322 369h2v1h-2zM334 369h1v1h-1zM362 369h1v1h-1zM379 369h1v1h-1zM425 369h1v1h-1zM54 370h1v1h-1zM73 370h2v1h-2zM100 370h1v1h-1zM117 370h1v1h-1zM157 370h1v1h-1zM258 370h1v1h-1zM321 370h1v1h-1zM335 370h1v1h-1zM361 370h2v1h-2zM378 370h1v1h-1zM424 370h1v1h-1zM54 371h1v1h-1zM72 371h1v1h-1zM101 371h1v1h-1zM118 371h1v1h-1zM158 371h2v1h-2zM257 371h1v1h-1zM319 371h2v1h-2zM335 371h1v1h-1zM360 371h1v1h-1zM363 371h1v1h-1zM377 371h1v1h-1zM424 371h1v1h-1zM55 372h1v1h-1zM71 372h1v1h-1zM102 372h1v1h-1zM119 372h1v1h-1zM160 372h2v1h-2zM256 372h1v1h-1zM317 372h2v1h-2zM336 372h1v1h-1zM359 372h1v1h-1zM364 372h1v1h-1zM376 372h1v1h-1zM423 372h1v1h-1zM56 373h1v1h-1zM70 373h1v1h-1zM103 373h1v1h-1zM120 373h1v1h-1zM160 373h1v1h-1zM162 373h1v1h-1zM316 373h1v1h-1zM337 373h1v1h-1zM358 373h1v1h-1zM365 373h1v1h-1zM375 373h1v1h-1zM422 373h1v1h-1zM56 374h1v1h-1zM68 374h2v1h-2zM104 374h1v1h-1zM119 374h1v1h-1zM121 374h2v1h-2zM159 374h1v1h-1zM163 374h2v1h-2zM315 374h1v1h-1zM337 374h1v1h-1zM356 374h2v1h-2zM366 374h1v1h-1zM374 374h1v1h-1zM422 374h1v1h-1zM57 375h1v1h-1zM67 375h1v1h-1zM105 375h1v1h-1zM118 375h1v1h-1zM123 375h1v1h-1zM159 375h1v1h-1zM165 375h1v1h-1zM313 375h2v1h-2zM338 375h1v1h-1zM355 375h1v1h-1zM367 375h1v1h-1zM373 375h1v1h-1zM421 375h1v1h-1zM58 376h1v1h-1zM66 376h1v1h-1zM106 376h1v1h-1zM117 376h1v1h-1zM124 376h1v1h-1zM158 376h1v1h-1zM166 376h2v1h-2zM311 376h2v1h-2zM339 376h1v1h-1zM354 376h1v1h-1zM368 376h1v1h-1zM372 376h1v1h-1zM420 376h1v1h-1zM59 377h1v1h-1zM64 377h2v1h-2zM107 377h1v1h-1zM116 377h1v1h-1zM125 377h1v1h-1zM157 377h1v1h-1zM168 377h2v1h-2zM309 377h2v1h-2zM340 377h1v1h-1zM353 377h1v1h-1zM369 377h1v1h-1zM371 377h1v1h-1zM419 377h1v1h-1zM59 378h1v1h-1zM63 378h1v1h-1zM108 378h1v1h-1zM115 378h1v1h-1zM126 378h2v1h-2zM157 378h1v1h-1zM170 378h2v1h-2zM307 378h2v1h-2zM340 378h1v1h-1zM351 378h2v1h-2zM370 378h1v1h-1zM419 378h1v1h-1zM60 379h1v1h-1zM62 379h1v1h-1zM109 379h1v1h-1zM114 379h1v1h-1zM128 379h1v1h-1zM156 379h1v1h-1zM172 379h2v1h-2zM305 379h2v1h-2zM341 379h1v1h-1zM350 379h1v1h-1zM369 379h1v1h-1zM418 379h1v1h-1zM61 380h1v1h-1zM110 380h1v1h-1zM113 380h1v1h-1zM129 380h1v1h-1zM156 380h1v1h-1zM174 380h2v1h-2zM303 380h2v1h-2zM342 380h1v1h-1zM349 380h2v1h-2zM368 380h1v1h-1zM417 380h1v1h-1zM62 381h1v1h-1zM111 381h2v1h-2zM130 381h1v1h-1zM155 381h1v1h-1zM176 381h2v1h-2zM301 381h2v1h-2zM343 381h1v1h-1zM348 381h1v1h-1zM351 381h1v1h-1zM367 381h1v1h-1zM416 381h1v1h-1zM62 382h1v1h-1zM112 382h1v1h-1zM131 382h2v1h-2zM154 382h1v1h-1zM178 382h2v1h-2zM299 382h2v1h-2zM343 382h1v1h-1zM346 382h2v1h-2zM352 382h1v1h-1zM366 382h1v1h-1zM415 382h1v1h-1zM63 383h1v1h-1zM113 383h2v1h-2zM132 383h2v1h-2zM154 383h1v1h-1zM180 383h3v1h-3zM296 383h3v1h-3zM344 383h2v1h-2zM353 383h1v1h-1zM364 383h2v1h-2zM415 383h1v1h-1zM64 384h1v1h-1zM115 384h1v1h-1zM131 384h1v1h-1zM134 384h1v1h-1zM153 384h1v1h-1zM183 384h2v1h-2zM294 384h2v1h-2zM344 384h1v1h-1zM354 384h1v1h-1zM363 384h1v1h-1zM414 384h1v1h-1zM65 385h1v1h-1zM116 385h1v1h-1zM130 385h1v1h-1zM135 385h2v1h-2zM152 385h1v1h-1zM185 385h4v1h-4zM290 385h4v1h-4zM342 385h2v1h-2zM354 385h1v1h-1zM362 385h1v1h-1zM413 385h1v1h-1zM66 386h1v1h-1zM117 386h2v1h-2zM130 386h1v1h-1zM137 386h2v1h-2zM152 386h1v1h-1zM189 386h4v1h-4zM286 386h4v1h-4zM340 386h2v1h-2zM355 386h1v1h-1zM360 386h2v1h-2zM412 386h1v1h-1zM67 387h1v1h-1zM119 387h1v1h-1zM129 387h1v1h-1zM139 387h1v1h-1zM151 387h1v1h-1zM193 387h3v1h-3zM283 387h3v1h-3zM339 387h1v1h-1zM356 387h1v1h-1zM359 387h1v1h-1zM411 387h1v1h-1zM67 388h1v1h-1zM120 388h2v1h-2zM128 388h1v1h-1zM140 388h1v1h-1zM151 388h1v1h-1zM196 388h4v1h-4zM279 388h4v1h-4zM338 388h1v1h-1zM357 388h2v1h-2zM410 388h1v1h-1zM68 389h1v1h-1zM122 389h1v1h-1zM127 389h1v1h-1zM141 389h2v1h-2zM150 389h1v1h-1zM200 389h4v1h-4zM275 389h4v1h-4zM336 389h2v1h-2zM356 389h1v1h-1zM358 389h1v1h-1zM410 389h1v1h-1zM69 390h1v1h-1zM123 390h1v1h-1zM127 390h1v1h-1zM143 390h1v1h-1zM149 390h1v1h-1zM204 390h2v1h-2zM273 390h2v1h-2zM335 390h1v1h-1zM338 390h1v1h-1zM355 390h1v1h-1zM359 390h1v1h-1zM409 390h1v1h-1zM70 391h1v1h-1zM124 391h3v1h-3zM144 391h2v1h-2zM149 391h1v1h-1zM206 391h4v1h-4zM269 391h4v1h-4zM334 391h1v1h-1zM338 391h1v1h-1zM353 391h2v1h-2zM360 391h1v1h-1zM408 391h1v1h-1zM71 392h1v1h-1zM125 392h2v1h-2zM145 392h4v1h-4zM210 392h11v1h-11zM258 392h11v1h-11zM332 392h2v1h-2zM339 392h1v1h-1zM352 392h1v1h-1zM360 392h1v1h-1zM407 392h1v1h-1zM72 393h1v1h-1zM127 393h1v1h-1zM144 393h1v1h-1zM148 393h2v1h-2zM221 393h6v1h-6zM253 393h5v1h-5zM330 393h2v1h-2zM340 393h1v1h-1zM351 393h1v1h-1zM361 393h1v1h-1zM406 393h1v1h-1zM73 394h1v1h-1zM128 394h1v1h-1zM144 394h1v1h-1zM150 394h1v1h-1zM227 394h26v1h-26zM328 394h2v1h-2zM340 394h1v1h-1zM350 394h1v1h-1zM362 394h1v1h-1zM405 394h1v1h-1zM74 395h1v1h-1zM129 395h2v1h-2zM143 395h1v1h-1zM151 395h2v1h-2zM247 395h1v1h-1zM326 395h2v1h-2zM341 395h1v1h-1zM348 395h2v1h-2zM363 395h1v1h-1zM404 395h1v1h-1zM75 396h1v1h-1zM131 396h1v1h-1zM142 396h1v1h-1zM153 396h2v1h-2zM247 396h1v1h-1zM324 396h2v1h-2zM342 396h1v1h-1zM347 396h1v1h-1zM363 396h1v1h-1zM403 396h1v1h-1zM76 397h1v1h-1zM132 397h1v1h-1zM142 397h1v1h-1zM155 397h2v1h-2zM247 397h1v1h-1zM323 397h2v1h-2zM342 397h1v1h-1zM346 397h1v1h-1zM364 397h1v1h-1zM402 397h1v1h-1zM77 398h1v1h-1zM133 398h2v1h-2zM141 398h1v1h-1zM157 398h2v1h-2zM247 398h1v1h-1zM321 398h2v1h-2zM325 398h1v1h-1zM343 398h3v1h-3zM365 398h1v1h-1zM401 398h1v1h-1zM78 399h1v1h-1zM135 399h1v1h-1zM140 399h1v1h-1zM159 399h2v1h-2zM247 399h1v1h-1zM319 399h2v1h-2zM325 399h1v1h-1zM343 399h1v1h-1zM366 399h1v1h-1zM400 399h1v1h-1zM79 400h1v1h-1zM136 400h2v1h-2zM140 400h1v1h-1zM158 400h1v1h-1zM161 400h2v1h-2zM247 400h1v1h-1zM316 400h3v1h-3zM326 400h1v1h-1zM341 400h2v1h-2zM367 400h1v1h-1zM399 400h1v1h-1zM80 401h1v1h-1zM138 401h2v1h-2zM158 401h1v1h-1zM163 401h2v1h-2zM247 401h1v1h-1zM314 401h2v1h-2zM326 401h1v1h-1zM340 401h1v1h-1zM367 401h1v1h-1zM398 401h1v1h-1zM81 402h1v1h-1zM140 402h2v1h-2zM157 402h1v1h-1zM165 402h3v1h-3zM247 402h1v1h-1zM312 402h2v1h-2zM327 402h1v1h-1zM338 402h2v1h-2zM368 402h1v1h-1zM397 402h1v1h-1zM82 403h1v1h-1zM142 403h2v1h-2zM157 403h1v1h-1zM168 403h2v1h-2zM247 403h1v1h-1zM310 403h2v1h-2zM327 403h1v1h-1zM336 403h2v1h-2zM369 403h1v1h-1zM396 403h1v1h-1zM83 404h1v1h-1zM144 404h1v1h-1zM156 404h1v1h-1zM170 404h2v1h-2zM247 404h1v1h-1zM308 404h3v1h-3zM328 404h1v1h-1zM334 404h2v1h-2zM370 404h1v1h-1zM395 404h1v1h-1zM84 405h1v1h-1zM145 405h2v1h-2zM156 405h1v1h-1zM172 405h2v1h-2zM247 405h1v1h-1zM305 405h3v1h-3zM310 405h1v1h-1zM328 405h1v1h-1zM332 405h2v1h-2zM370 405h1v1h-1zM394 405h1v1h-1zM85 406h1v1h-1zM147 406h1v1h-1zM155 406h1v1h-1zM173 406h4v1h-4zM247 406h1v1h-1zM302 406h3v1h-3zM311 406h1v1h-1zM329 406h1v1h-1zM331 406h1v1h-1zM371 406h1v1h-1zM393 406h1v1h-1zM86 407h1v1h-1zM148 407h2v1h-2zM155 407h1v1h-1zM173 407h1v1h-1zM177 407h3v1h-3zM248 407h1v1h-1zM299 407h3v1h-3zM311 407h1v1h-1zM329 407h2v1h-2zM372 407h1v1h-1zM392 407h1v1h-1zM87 408h1v1h-1zM150 408h2v1h-2zM154 408h1v1h-1zM172 408h1v1h-1zM180 408h3v1h-3zM248 408h1v1h-1zM296 408h3v1h-3zM312 408h1v1h-1zM328 408h1v1h-1zM373 408h1v1h-1zM391 408h1v1h-1zM88 409h1v1h-1zM152 409h3v1h-3zM172 409h1v1h-1zM183 409h3v1h-3zM248 409h1v1h-1zM293 409h3v1h-3zM312 409h1v1h-1zM326 409h2v1h-2zM374 409h1v1h-1zM390 409h1v1h-1zM89 410h2v1h-2zM154 410h2v1h-2zM171 410h1v1h-1zM186 410h3v1h-3zM248 410h1v1h-1zM290 410h3v1h-3zM295 410h1v1h-1zM312 410h1v1h-1zM324 410h2v1h-2zM374 410h1v1h-1zM389 410h1v1h-1zM91 411h1v1h-1zM156 411h2v1h-2zM171 411h1v1h-1zM188 411h4v1h-4zM248 411h1v1h-1zM287 411h3v1h-3zM295 411h1v1h-1zM313 411h1v1h-1zM321 411h3v1h-3zM375 411h1v1h-1zM387 411h2v1h-2zM92 412h1v1h-1zM158 412h3v1h-3zM171 412h1v1h-1zM188 412h1v1h-1zM192 412h3v1h-3zM248 412h1v1h-1zM284 412h3v1h-3zM296 412h1v1h-1zM313 412h1v1h-1zM318 412h3v1h-3zM376 412h1v1h-1zM386 412h1v1h-1zM93 413h1v1h-1zM161 413h3v1h-3zM170 413h1v1h-1zM187 413h1v1h-1zM195 413h5v1h-5zM248 413h1v1h-1zM280 413h4v1h-4zM296 413h1v1h-1zM314 413h1v1h-1zM316 413h2v1h-2zM377 413h1v1h-1zM385 413h1v1h-1zM94 414h1v1h-1zM164 414h2v1h-2zM170 414h1v1h-1zM187 414h1v1h-1zM200 414h6v1h-6zM248 414h1v1h-1zM274 414h7v1h-7zM296 414h1v1h-1zM314 414h2v1h-2zM377 414h1v1h-1zM384 414h1v1h-1zM95 415h2v1h-2zM166 415h2v1h-2zM169 415h1v1h-1zM187 415h1v1h-1zM203 415h1v1h-1zM206 415h6v1h-6zM248 415h1v1h-1zM267 415h7v1h-7zM280 415h1v1h-1zM297 415h1v1h-1zM312 415h2v1h-2zM378 415h1v1h-1zM383 415h1v1h-1zM97 416h1v1h-1zM168 416h2v1h-2zM186 416h1v1h-1zM203 416h1v1h-1zM212 416h7v1h-7zM248 416h1v1h-1zM261 416h6v1h-6zM280 416h1v1h-1zM297 416h1v1h-1zM309 416h3v1h-3zM379 416h1v1h-1zM381 416h2v1h-2zM98 417h1v1h-1zM168 417h1v1h-1zM170 417h3v1h-3zM186 417h1v1h-1zM203 417h1v1h-1zM219 417h6v1h-6zM248 417h1v1h-1zM255 417h6v1h-6zM265 417h1v1h-1zM281 417h1v1h-1zM297 417h1v1h-1zM306 417h3v1h-3zM380 417h1v1h-1zM99 418h1v1h-1zM168 418h1v1h-1zM173 418h3v1h-3zM186 418h1v1h-1zM202 418h1v1h-1zM218 418h1v1h-1zM225 418h30v1h-30zM265 418h1v1h-1zM281 418h1v1h-1zM297 418h1v1h-1zM304 418h2v1h-2zM379 418h1v1h-1zM100 419h2v1h-2zM167 419h1v1h-1zM176 419h2v1h-2zM186 419h1v1h-1zM202 419h1v1h-1zM218 419h1v1h-1zM234 419h1v1h-1zM249 419h1v1h-1zM265 419h1v1h-1zM281 419h1v1h-1zM298 419h1v1h-1zM302 419h2v1h-2zM377 419h2v1h-2zM102 420h1v1h-1zM167 420h1v1h-1zM178 420h2v1h-2zM185 420h1v1h-1zM202 420h1v1h-1zM218 420h1v1h-1zM234 420h1v1h-1zM249 420h1v1h-1zM265 420h1v1h-1zM281 420h1v1h-1zM298 420h1v1h-1zM300 420h2v1h-2zM376 420h1v1h-1zM103 421h1v1h-1zM167 421h1v1h-1zM180 421h2v1h-2zM185 421h1v1h-1zM202 421h1v1h-1zM218 421h1v1h-1zM234 421h1v1h-1zM249 421h1v1h-1zM265 421h1v1h-1zM281 421h1v1h-1zM297 421h3v1h-3zM375 421h1v1h-1zM104 422h2v1h-2zM166 422h1v1h-1zM182 422h4v1h-4zM202 422h1v1h-1zM218 422h1v1h-1zM234 422h1v1h-1zM249 422h1v1h-1zM266 422h1v1h-1zM282 422h1v1h-1zM293 422h4v1h-4zM373 422h2v1h-2zM106 423h1v1h-1zM166 423h1v1h-1zM186 423h5v1h-5zM201 423h1v1h-1zM217 423h1v1h-1zM234 423h1v1h-1zM249 423h1v1h-1zM266 423h1v1h-1zM282 423h1v1h-1zM289 423h4v1h-4zM372 423h1v1h-1zM107 424h2v1h-2zM165 424h1v1h-1zM191 424h4v1h-4zM201 424h1v1h-1zM217 424h1v1h-1zM234 424h1v1h-1zM249 424h1v1h-1zM266 424h1v1h-1zM282 424h1v1h-1zM284 424h5v1h-5zM370 424h2v1h-2zM109 425h1v1h-1zM165 425h1v1h-1zM195 425h4v1h-4zM201 425h1v1h-1zM217 425h1v1h-1zM234 425h1v1h-1zM249 425h1v1h-1zM266 425h1v1h-1zM280 425h4v1h-4zM369 425h1v1h-1zM110 426h2v1h-2zM165 426h1v1h-1zM199 426h5v1h-5zM217 426h1v1h-1zM234 426h1v1h-1zM249 426h1v1h-1zM266 426h1v1h-1zM276 426h4v1h-4zM367 426h2v1h-2zM112 427h1v1h-1zM164 427h1v1h-1zM204 427h6v1h-6zM217 427h1v1h-1zM234 427h1v1h-1zM249 427h1v1h-1zM266 427h1v1h-1zM269 427h7v1h-7zM366 427h1v1h-1zM113 428h2v1h-2zM164 428h1v1h-1zM210 428h8v1h-8zM234 428h1v1h-1zM249 428h1v1h-1zM263 428h6v1h-6zM364 428h2v1h-2zM115 429h2v1h-2zM164 429h1v1h-1zM217 429h6v1h-6zM234 429h1v1h-1zM249 429h1v1h-1zM256 429h7v1h-7zM266 429h1v1h-1zM362 429h2v1h-2zM117 430h2v1h-2zM163 430h1v1h-1zM223 430h33v1h-33zM266 430h1v1h-1zM360 430h2v1h-2zM119 431h1v1h-1zM163 431h1v1h-1zM266 431h1v1h-1zM359 431h1v1h-1zM120 432h2v1h-2zM162 432h1v1h-1zM266 432h1v1h-1zM357 432h2v1h-2zM122 433h1v1h-1zM162 433h1v1h-1zM267 433h1v1h-1zM356 433h1v1h-1zM123 434h1v1h-1zM162 434h1v1h-1zM267 434h1v1h-1zM355 434h1v1h-1zM124 435h2v1h-2zM161 435h1v1h-1zM267 435h1v1h-1zM353 435h2v1h-2zM126 436h2v1h-2zM161 436h1v1h-1zM267 436h1v1h-1zM351 436h2v1h-2zM128 437h2v1h-2zM161 437h1v1h-1zM267 437h1v1h-1zM349 437h2v1h-2zM130 438h2v1h-2zM160 438h1v1h-1zM267 438h1v1h-1zM347 438h2v1h-2zM132 439h2v1h-2zM160 439h1v1h-1zM267 439h1v1h-1zM345 439h2v1h-2zM134 440h2v1h-2zM159 440h1v1h-1zM268 440h1v1h-1zM343 440h2v1h-2zM136 441h2v1h-2zM159 441h1v1h-1zM268 441h1v1h-1zM341 441h2v1h-2zM138 442h2v1h-2zM159 442h1v1h-1zM268 442h1v1h-1zM339 442h2v1h-2zM140 443h2v1h-2zM158 443h1v1h-1zM268 443h1v1h-1zM337 443h2v1h-2zM142 444h2v1h-2zM158 444h1v1h-1zM268 444h1v1h-1zM335 444h2v1h-2zM144 445h2v1h-2zM158 445h1v1h-1zM268 445h1v1h-1zM333 445h2v1h-2zM146 446h3v1h-3zM157 446h1v1h-1zM268 446h1v1h-1zM330 446h3v1h-3zM149 447h2v1h-2zM157 447h1v1h-1zM269 447h1v1h-1zM328 447h2v1h-2zM151 448h2v1h-2zM156 448h1v1h-1zM269 448h1v1h-1zM326 448h2v1h-2zM153 449h4v1h-4zM269 449h1v1h-1zM323 449h3v1h-3zM156 450h3v1h-3zM269 450h1v1h-1zM321 450h2v1h-2zM159 451h2v1h-2zM269 451h1v1h-1zM318 451h3v1h-3zM161 452h3v1h-3zM269 452h1v1h-1zM315 452h3v1h-3zM164 453h2v1h-2zM270 453h1v1h-1zM313 453h2v1h-2zM166 454h2v1h-2zM270 454h1v1h-1zM311 454h2v1h-2zM168 455h4v1h-4zM270 455h1v1h-1zM308 455h3v1h-3zM172 456h4v1h-4zM270 456h1v1h-1zM304 456h4v1h-4zM176 457h3v1h-3zM270 457h1v1h-1zM300 457h4v1h-4zM179 458h4v1h-4zM270 458h1v1h-1zM296 458h4v1h-4zM183 459h4v1h-4zM270 459h1v1h-1zM293 459h3v1h-3zM187 460h4v1h-4zM271 460h1v1h-1zM289 460h4v1h-4zM191 461h4v1h-4zM271 461h1v1h-1zM285 461h4v1h-4zM195 462h4v1h-4zM271 462h1v1h-1zM281 462h4v1h-4zM199 463h6v1h-6zM271 463h1v1h-1zM275 463h6v1h-6zM205 464h8v1h-8zM267 464h8v1h-8zM213 465h16v1h-16zM251 465h16v1h-16zM229 466h22v1h-22z"/>
<path fill="#c0c0c0" d="M0 0h640v1h-640zM0 1h1v1h-1zM479 1h1v1h-1zM639 1h1v1h-1zM0 2h1v1h-1zM226 2h1v1h-1zM479 2h1v1h-1zM639 2h1v1h-1zM0 3h1v1h-1zM226 3h1v1h-1zM479 3h1v1h-1zM639 3h1v1h-1zM0 4h1v1h-1zM226 4h1v1h-1zM479 4h1v1h-1zM639 4h1v1h-1zM0 5h1v1h-1zM226 5h1v1h-1zM479 5h1v1h-1zM639 5h1v1h-1zM0 6h1v1h-1zM226 6h1v1h-1zM479 6h1v1h-1zM639 6h1v1h-1zM0 7h1v1h-1zM226 7h1v1h-1zM479 7h1v1h-1zM639 7h1v1h-1zM0 8h1v1h-1zM226 8h1v1h-1zM479 8h1v1h-1zM639 8h1v1h-1zM0 9h1v1h-1zM226 9h1v1h-1zM479 9h1v1h-1zM639 9h1v1h-1zM0 10h1v1h-1zM226 10h1v1h-1zM479 10h1v1h-1zM639 10h1v1h-1zM0 11h1v1h-1zM226 11h1v1h-1zM479 11h1v1h-1zM639 11h1v1h-1zM0 12h1v1h-1zM227 12h1v1h-1zM479 12h1v1h-1zM639 12h1v1h-1zM0 13h1v1h-1zM479 13h1v1h-1zM639 13h1v1h-1zM0 14h1v1h-1zM227 14h1v1h-1zM479 14h1v1h-1zM639 14h1v1h-1zM0 15h1v1h-1zM227 15h1v1h-1zM479 15h1v1h-1zM639 15h1v1h-1zM0 16h1v1h-1zM227 16h1v1h-1zM479 16h1v1h-1zM639 16h1v1h-1zM0 17h1v1h-1zM227 17h1v1h-1zM479 17h1v1h-1zM639 17h1v1h-1zM0 18h1v1h-1zM227 18h1v1h-1zM479 18h1v1h-1zM639 18h1v1h-1zM0 19h1v1h-1zM227 19h1v1h-1zM479 19h1v1h-1zM639 19h1v1h-1zM0 20h1v1h-1zM227 20h1v1h-1zM479 20h1v1h-1zM639 20h1v1h-1zM0 21h1v1h-1zM227 21h1v1h-1zM479 21h1v1h-1zM639 21h1v1h-1zM0 22h1v1h-1zM227 22h1v1h-1zM479 22h1v1h-1zM639 22h1v1h-1zM0 23h1v1h-1zM227 23h1v1h-1zM479 23h1v1h-1zM639 23h1v1h-1zM0 24h1v1h-1zM227 24h1v1h-1zM479 24h1v1h-1zM639 24h1v1h-1zM0 25h1v1h-1zM227 25h1v1h-1zM479 25h1v1h-1zM639 25h1v1h-1zM0 26h1v1h-1zM227 26h1v1h-1zM479 26h1v1h-1zM639 26h1v1h-1zM0 27h1v1h-1zM227 27h1v1h-1zM479 27h1v1h-1zM639 27h1v1h-1zM0 28h1v1h-1zM227 28h1v1h-1zM479 28h1v1h-1zM639 28h1v1h-1zM0 29h1v1h-1zM227 29h1v1h-1zM479 29h1v1h-1zM639 29h1v1h-1zM0 30h1v1h-1zM228 30h1v1h-1zM479 30h1v1h-1zM639 30h1v1h-1zM0 31h1v1h-1zM228 31h1v1h-1zM479 31h1v1h-1zM639 31h1v1h-1zM0 32h1v1h-1zM228 32h1v1h-1zM479 32h1v1h-1zM639 32h1v1h-1zM0 33h1v1h-1zM228 33h1v1h-1zM479 33h1v1h-1zM639 33h1v1h-1zM0 34h1v1h-1zM228 34h1v1h-1zM479 34h1v1h-1zM639 34h1v1h-1zM0 35h1v1h-1zM228 35h1v1h-1zM479 35h1v1h-1zM639 35h1v1h-1zM0 36h1v1h-1zM228 36h1v1h-1zM479 36h1v1h-1zM639 36h1v1h-1zM0 37h1v1h-1zM228 37h1v1h-1zM479 37h1v1h-1zM639 37h1v1h-1zM0 38h1v1h-1zM228 38h1v1h-1zM479 38h1v1h-1zM639 38h1v1h-1zM0 39h1v1h-1zM228 39h1v1h-1zM479 39h1v1h-1zM639 39h1v1h-1zM0 40h1v1h-1zM228 40h1v1h-1zM479 40h1v1h-1zM639 40h1v1h-1zM0 41h1v1h-1zM228 41h1v1h-1zM479 41h1v1h-1zM639 41h1v1h-1zM0 42h1v1h-1zM228 42h1v1h-1zM479 42h1v1h-1zM639 42h1v1h-1zM0 43h1v1h-1zM228 43h1v1h-1zM479 43h1v1h-1zM639 43h1v1h-1zM0 44h1v1h-1zM228 44h1v1h-1zM479 44h1v1h-1zM639 44h1v1h-1zM0 45h1v1h-1zM228 45h1v1h-1zM479 45h1v1h-1zM639 45h1v1h-1zM0 46h1v1h-1zM228 46h1v1h-1zM479 46h1v1h-1zM639 46h1v1h-1zM0 47h1v1h-1zM228 47h1v1h-1zM479 47h1v1h-1zM639 47h1v1h-1zM0 48h1v1h-1zM479 48h1v1h-1zM639 48h1v1h-1zM0 49h1v1h-1zM479 49h1v1h-1zM639 49h1v1h-1zM0 50h1v1h-1zM479 50h1v1h-1zM639 50h1v1h-1zM0 51h1v1h-1zM479 51h1v1h-1zM639 51h1v1h-1zM0 52h1v1h-1zM479 52h1v1h-1zM639 52h1v1h-1zM0 53h1v1h-1zM479 53h1v1h-1zM639 53h1v1h-1zM0 54h1v1h-1zM479 54h1v1h-1zM639 54h1v1h-1zM0 55h1v1h-1zM479 55h1v1h-1zM639 55h1v1h-1zM0 56h1v1h-1zM479 56h1v1h-1zM639 56h1v1h-1zM0 57h1v1h-1zM479 57h1v1h-1zM639 57h1v1h-1zM0 58h1v1h-1zM479 58h1v1h-1zM639 58h1v1h-1zM0 59h1v1h-1zM479 59h1v1h-1zM639 59h1v1h-1zM0 60h1v1h-1zM479 60h1v1h-1zM639 60h1v1h-1zM0 61h1v1h-1zM229 61h1v1h-1zM479 61h1v1h-1zM639 61h1v1h-1zM0 62h1v1h-1zM229 62h1v1h-1zM479 62h1v1h-1zM639 62h1v1h-1zM0 63h1v1h-1zM229 63h1v1h-1zM479 63h1v1h-1zM639 63h1v1h-1zM0 64h1v1h-1zM229 64h1v1h-1zM479 64h1v1h-1zM639 64h1v1h-1zM0 65h1v1h-1zM229 65h1v1h-1zM479 65h1v1h-1zM639 65h1v1h-1zM0 66h1v1h-1zM479 66h1v1h-1zM639 66h1v1h-1zM0 67h1v1h-1zM479 67h1v1h-1zM639 67h1v1h-1zM0 68h1v1h-1zM479 68h1v1h-1zM639 68h1v1h-1zM0 69h1v1h-1zM479 69h1v1h-1zM639 69h1v1h-1zM0 70h1v1h-1zM479 70h1v1h-1zM639 70h1v1h-1zM0 71h1v1h-1zM479 71h1v1h-1zM639 71h1v1h-1zM0 72h1v1h-1zM230 72h1v1h-1zM479 72h1v1h-1zM639 72h1v1h-1zM0 73h1v1h-1zM230 73h1v1h-1zM479 73h1v1h-1zM639 73h1v1h-1zM0 74h1v1h-1zM230 74h1v1h-1zM479 74h1v1h-1zM639 74h1v1h-1zM0 75h1v1h-1zM230 75h1v1h-1zM479 75h1v1h-1zM639 75h1v1h-1zM0 76h1v1h-1zM230 76h1v1h-1zM479 76h1v1h-1zM639 76h1v1h-1zM0 77h1v1h-1zM230 77h1v1h-1zM479 77h1v1h-1zM639 77h1v1h-1zM0 78h1v1h-1zM230 78h1v1h-1zM479 78h1v1h-1zM639 78h1v1h-1zM0 79h1v1h-1zM230 79h1v1h-1zM479 79h1v1h-1zM639 79h1v1h-1zM0 80h1v1h-1zM230 80h1v1h-1zM479 80h1v1h-1zM639 80h1v1h-1zM0 81h1v1h-1zM230 81h1v1h-1zM479 81h1v1h-1zM639 81h1v1h-1zM0 82h1v1h-1zM230 82h1v1h-1zM479 82h1v1h-1zM639 82h1v1h-1zM0 83h1v1h-1zM230 83h1v1h-1zM479 83h1v1h-1zM639 83h1v1h-1zM0 84h1v1h-1zM479 84h1v1h-1zM639 84h1v1h-1zM0 85h1v1h-1zM231 85h1v1h-1zM479 85h1v1h-1zM639 85h1v1h-1zM0 86h1v1h-1zM231 86h1v1h-1zM479 86h1v1h-1zM639 86h1v1h-1zM0 87h1v1h-1zM231 87h1v1h-1zM479 87h1v1h-1zM639 87h1v1h-1zM0 88h1v1h-1zM231 88h1v1h-1zM479 88h1v1h-1zM639 88h1v1h-1zM0 89h1v1h-1zM231 89h1v1h-1zM479 89h1v1h-1zM639 89h1v1h-1zM0 90h1v1h-1zM231 90h1v1h-1zM479 90h1v1h-1zM639 90h1v1h-1zM0 91h1v1h-1zM231 91h1v1h-1zM479 91h1v1h-1zM639 91h1v1h-1zM0 92h1v1h-1zM231 92h1v1h-1zM479 92h1v1h-1zM639 92h1v1h-1zM0 93h1v1h-1zM231 93h1v1h-1zM479 93h1v1h-1zM639 93h1v1h-1zM0 94h1v1h-1zM231 94h1v1h-1zM479 94h1v1h-1zM639 94h1v1h-1zM0 95h1v1h-1zM231 95h1v1h-1zM479 95h1v1h-1zM639 95h1v1h-1zM0 96h1v1h-1zM231 96h1v1h-1zM479 96h1v1h-1zM639 96h1v1h-1zM0 97h1v1h-1zM231 97h1v1h-1zM479 97h1v1h-1zM639 97h1v1h-1zM0 98h1v1h-1zM231 98h1v1h-1zM479 98h1v1h-1zM639 98h1v1h-1zM0 99h1v1h-1zM231 99h1v1h-1zM479 99h1v1h-1zM639 99h1v1h-1zM0 100h1v1h-1zM231 100h1v1h-1zM479 100h1v1h-1zM639 100h1v1h-1zM0 101h1v1h-1zM231 101h1v1h-1zM479 101h1v1h-1zM639 101h1v1h-1zM0 102h1v1h-1zM231 102h1v1h-1zM479 102h1v1h-1zM639 102h1v1h-1zM0 103h1v1h-1zM232 103h1v1h-1zM479 103h1v1h-1zM639 103h1v1h-1zM0 104h1v1h-1zM232 104h1v1h-1zM479 104h1v1h-1zM639 104h1v1h-1zM0 105h1v1h-1zM232 105h1v1h-1zM479 105h1v1h-1zM639 105h1v1h-1zM0 106h1v1h-1zM232 106h1v1h-1zM479 106h1v1h-1zM639 106h1v1h-1zM0 107h1v1h-1zM232 107h1v1h-1zM479 107h1v1h-1zM639 107h1v1h-1zM0 108h1v1h-1zM232 108h1v1h-1zM479 108h1v1h-1zM639 108h1v1h-1zM0 109h1v1h-1zM232 109h1v1h-1zM479 109h1v1h-1zM639 109h1v1h-1zM0 110h1v1h-1zM232 110h1v1h-1zM479 110h1v1h-1zM639 110h1v1h-1zM0 111h1v1h-1zM232 111h1v1h-1zM479 111h1v1h-1zM639 111h1v1h-1zM0 112h1v1h-1zM232 112h1v1h-1zM479 112h1v1h-1zM639 112h1v1h-1zM0 113h1v1h-1zM232 113h1v1h-1zM479 113h1v1h-1zM639 113h1v1h-1zM0 114h1v1h-1zM232 114h1v1h-1zM479 114h1v1h-1zM639 114h1v1h-1zM0 115h1v1h-1zM232 115h1v1h-1zM479 115h1v1h-1zM639 115h1v1h-1zM0 116h1v1h-1zM232 116h1v1h-1zM479 116h1v1h-1zM639 116h1v1h-1zM0 117h1v1h-1zM232 117h1v1h-1zM479 117h1v1h-1zM639 117h1v1h-1zM0 118h1v1h-1zM232 118h1v1h-1zM479 118h1v1h-1zM639 118h1v1h-1zM0 119h1v1h-1zM232 119h1v1h-1zM479 119h1v1h-1zM639 119h1v1h-1zM0 120h1v1h-1zM232 120h1v1h-1zM479 120h1v1h-1zM639 120h1v1h-1zM0 121h1v1h-1zM233 121h1v1h-1zM479 121h1v1h-1zM639 121h1v1h-1zM0 122h1v1h-1zM233 122h1v1h-1zM479 122h1v1h-1zM639 122h1v1h-1zM0 123h1v1h-1zM233 123h1v1h-1zM479 123h1v1h-1zM639 123h1v1h-1zM0 124h1v1h-1zM233 124h1v1h-1zM479 124h1v1h-1zM639 124h1v1h-1zM0 125h1v1h-1zM233 125h1v1h-1zM479 125h1v1h-1zM639 125h1v1h-1zM0 126h1v1h-1zM233 126h1v1h-1zM479 126h1v1h-1zM639 126h1v1h-1zM0 127h1v1h-1zM233 127h1v1h-1zM479 127h1v1h-1zM639 127h1v1h-1zM0 128h1v1h-1zM233 128h1v1h-1zM479 128h1v1h-1zM639 128h1v1h-1zM0 129h1v1h-1zM233 129h1v1h-1zM479 129h1v1h-1zM639 129h1v1h-1zM0 130h1v1h-1zM233 130h1v1h-1zM479 130h1v1h-1zM639 130h1v1h-1zM0 131h1v1h-1zM233 131h1v1h-1zM479 131h1v1h-1zM639 131h1v1h-1zM0 132h1v1h-1zM233 132h1v1h-1zM479 132h1v1h-1zM639 132h1v1h-1zM0 133h1v1h-1zM233 133h1v1h-1zM479 133h1v1h-1zM639 133h1v1h-1zM0 134h1v1h-1zM233 134h1v1h-1zM479 134h1v1h-1zM639 134h1v1h-1zM0 135h1v1h-1zM233 135h1v1h-1zM479 135h1v1h-1zM639 135h1v1h-1zM0 136h1v1h-1zM233 136h1v1h-1zM479 136h1v1h-1zM639 136h1v1h-1zM0 137h1v1h-1zM233 137h1v1h-1zM479 137h1v1h-1zM639 137h1v1h-1zM0 138h1v1h-1zM233 138h1v1h-1zM479 138h1v1h-1zM639 138h1v1h-1zM0 139h1v1h-1zM234 139h1v1h-1zM479 139h1v1h-1zM639 139h1v1h-1zM0 140h1v1h-1zM234 140h1v1h-1zM479 140h1v1h-1zM639 140h1v1h-1zM0 141h1v1h-1zM234 141h1v1h-1zM479 141h1v1h-1zM639 141h1v1h-1zM0 142h1v1h-1zM234 142h1v1h-1zM479 142h1v1h-1zM639 142h1v1h-1zM0 143h1v1h-1zM234 143h1v1h-1zM479 143h1v1h-1zM639 143h1v1h-1zM0 144h1v1h-1zM234 144h1v1h-1zM479 144h1v1h-1zM639 144h1v1h-1zM0 145h1v1h-1zM234 145h1v1h-1zM479 145h1v1h-1zM639 145h1v1h-1zM0 146h1v1h-1zM234 146h1v1h-1zM479 146h1v1h-1zM639 146h1v1h-1zM0 147h1v1h-1zM234 147h1v1h-1zM479 147h1v1h-1zM639 147h1v1h-1zM0 148h1v1h-1zM234 148h1v1h-1zM479 148h1v1h-1zM639 148h1v1h-1zM0 149h1v1h-1zM234 149h1v1h-1zM479 149h1v1h-1zM639 149h1v1h-1zM0 150h1v1h-1zM234 150h1v1h-1zM479 150h1v1h-1zM639 150h1v1h-1zM0 151h1v1h-1zM234 151h1v1h-1zM479 151h1v1h-1zM639 151h1v1h-1zM0 152h1v1h-1zM234 152h1v1h-1zM479 152h1v1h-1zM639 152h1v1h-1zM0 153h1v1h-1zM234 153h1v1h-1zM479 153h1v1h-1zM639 153h1v1h-1zM0 154h1v1h-1zM234 154h1v1h-1zM479 154h1v1h-1zM639 154h1v1h-1zM0 155h1v1h-1zM234 155h1v1h-1zM479 155h1v1h-1zM639 155h1v1h-1zM0 156h1v1h-1zM234 156h1v1h-1zM479 156h1v1h-1zM639 156h1v1h-1zM0 157h1v1h-1zM235 157h1v1h-1zM479 157h1v1h-1zM639 157h1v1h-1zM0 158h1v1h-1zM235 158h1v1h-1zM479 158h1v1h-1zM639 158h1v1h-1zM0 159h1v1h-1zM235 159h1v1h-1zM479 159h1v1h-1zM639 159h1v1h-1zM0 160h1v1h-1zM235 160h1v1h-1zM479 160h1v1h-1zM639 160h1v1h-1zM0 161h1v1h-1zM235 161h1v1h-1zM479 161h1v1h-1zM639 161h1v1h-1zM0 162h1v1h-1zM235 162h1v1h-1zM479 162h1v1h-1zM639 162h1v1h-1zM0 163h1v1h-1zM235 163h1v1h-1zM479 163h1v1h-1zM639 163h1v1h-1zM0 164h1v1h-1zM235 164h1v1h-1zM479 164h1v1h-1zM639 164h1v1h-1zM0 165h1v1h-1zM235 165h1v1h-1zM479 165h1v1h-1zM639 165h1v1h-1zM0 166h1v1h-1zM235 166h1v1h-1zM479 166h1v1h-1zM639 166h1v1h-1zM0 167h1v1h-1zM235 167h1v1h-1zM479 167h1v1h-1zM639 167h1v1h-1zM0 168h1v1h-1zM235 168h1v1h-1zM479 168h1v1h-1zM639 168h1v1h-1zM0 169h1v1h-1zM235 169h1v1h-1zM479 169h1v1h-1zM639 169h1v1h-1zM0 170h1v1h-1zM235 170h1v1h-1zM479 170h1v1h-1zM639 170h1v1h-1zM0 171h1v1h-1zM235 171h1v1h-1zM479 171h1v1h-1zM639 171h1v1h-1zM0 172h1v1h-1zM235 172h1v1h-1zM479 172h1v1h-1zM639 172h1v1h-1zM0 173h1v1h-1zM235 173h1v1h-1zM479 173h1v1h-1zM639 173h1v1h-1zM0 174h1v1h-1zM235 174h1v1h-1zM479 174h1v1h-1zM639 174h1v1h-1zM0 175h1v1h-1zM235 175h1v1h-1zM479 175h1v1h-1zM639 175h1v1h-1zM0 176h1v1h-1zM236 176h1v1h-1zM479 176h1v1h-1zM639 176h1v1h-1zM0 177h1v1h-1zM236 177h1v1h-1zM479 177h1v1h-1zM639 177h1v1h-1zM0 178h1v1h-1zM236 178h1v1h-1zM479 178h1v1h-1zM639 178h1v1h-1zM0 179h1v1h-1zM236 179h1v1h-1zM479 179h1v1h-1zM639 179h1v1h-1zM0 180h1v1h-1zM236 180h1v1h-1zM479 180h1v1h-1zM639 180h1v1h-1zM0 181h1v1h-1zM236 181h1v1h-1zM479 181h1v1h-1zM639 181h1v1h-1zM0 182h1v1h-1zM236 182h1v1h-1zM479 182h1v1h-1zM639 182h1v1h-1zM0 183h1v1h-1zM236 183h1v1h-1zM479 183h1v1h-1zM639 183h1v1h-1zM0 184h1v1h-1zM236 184h1v1h-1zM479 184h1v1h-1zM639 184h1v1h-1zM0 185h1v1h-1zM236 185h1v1h-1zM479 185h1v1h-1zM639 185h1v1h-1zM0 186h1v1h-1zM236 186h1v1h-1zM479 186h1v1h-1zM639 186h1v1h-1zM0 187h1v1h-1zM236 187h1v1h-1zM479 187h1v1h-1zM639 187h1v1h-1zM0 188h1v1h-1zM236 188h1v1h-1zM479 188h1v1h-1zM639 188h1v1h-1zM0 189h1v1h-1zM236 189h1v1h-1zM479 189h1v1h-1zM639 189h1v1h-1zM0 190h1v1h-1zM236 190h1v1h-1zM479 190h1v1h-1zM639 190h1v1h-1zM0 191h1v1h-1zM236 191h1v1h-1zM479 191h1v1h-1zM639 191h1v1h-1zM0 192h1v1h-1zM236 192h1v1h-1zM479 192h1v1h-1zM639 192h1v1h-1zM0 193h1v1h-1zM236 193h1v1h-1zM479 193h1v1h-1zM639 193h1v1h-1zM0 194h1v1h-1zM237 194h1v1h-1zM479 194h1v1h-1zM639 194h1v1h-1zM0 195h1v1h-1zM237 195h1v1h-1zM479 195h1v1h-1zM639 195h1v1h-1zM0 196h1v1h-1zM237 196h1v1h-1zM479 196h1v1h-1zM639 196h1v1h-1zM0 197h1v1h-1zM237 197h1v1h-1zM479 197h1v1h-1zM639 197h1v1h-1zM0 198h1v1h-1zM237 198h1v1h-1zM479 198h1v1h-1zM639 198h1v1h-1zM0 199h1v1h-1zM237 199h1v1h-1zM479 199h1v1h-1zM639 199h1v1h-1zM0 200h1v1h-1zM237 200h1v1h-1zM479 200h1v1h-1zM639 200h1v1h-1zM0 201h1v1h-1zM237 201h1v1h-1zM479 201h1v1h-1zM639 201h1v1h-1zM0 202h1v1h-1zM237 202h1v1h-1zM479 202h1v1h-1zM639 202h1v1h-1zM0 203h1v1h-1zM237 203h1v1h-1zM479 203h1v1h-1zM639 203h1v1h-1zM0 204h1v1h-1zM237 204h1v1h-1zM479 204h1v1h-1zM639 204h1v1h-1zM0 205h1v1h-1zM237 205h1v1h-1zM479 205h1v1h-1zM639 205h1v1h-1zM0 206h1v1h-1zM237 206h1v1h-1zM479 206h1v1h-1zM639 206h1v1h-1zM0 207h1v1h-1zM237 207h1v1h-1zM479 207h1v1h-1zM639 207h1v1h-1zM0 208h1v1h-1zM237 208h1v1h-1zM479 208h1v1h-1zM639 208h1v1h-1zM0 209h1v1h-1zM237 209h1v1h-1zM479 209h1v1h-1zM639 209h1v1h-1zM0 210h1v1h-1zM237 210h1v1h-1zM479 210h1v1h-1zM639 210h1v1h-1zM0 211h1v1h-1zM237 211h1v1h-1zM479 211h1v1h-1zM639 211h1v1h-1zM0 212h1v1h-1zM238 212h1v1h-1zM479 212h1v1h-1zM639 212h1v1h-1zM0 213h1v1h-1zM238 213h1v1h-1zM479 213h1v1h-1zM639 213h1v1h-1zM0 214h1v1h-1zM238 214h1v1h-1zM479 214h1v1h-1zM639 214h1v1h-1zM0 215h1v1h-1zM238 215h1v1h-1zM479 215h1v1h-1zM639 215h1v1h-1zM0 216h1v1h-1zM238 216h1v1h-1zM479 216h1v1h-1zM639 216h1v1h-1zM0 217h1v1h-1zM238 217h1v1h-1zM479 217h1v1h-1zM639 217h1v1h-1zM0 218h1v1h-1zM238 218h1v1h-1zM479 218h1v1h-1zM639 218h1v1h-1zM0 219h1v1h-1zM238 219h1v1h-1zM479 219h1v1h-1zM639 219h1v1h-1zM0 220h1v1h-1zM238 220h1v1h-1zM479 220h1v1h-1zM639 220h1v1h-1zM0 221h1v1h-1zM238 221h1v1h-1zM479 221h1v1h-1zM639 221h1v1h-1zM0 222h1v1h-1zM238 222h1v1h-1zM479 222h1v1h-1zM639 222h1v1h-1zM0 223h1v1h-1zM238 223h1v1h-1zM479 223h1v1h-1zM639 223h1v1h-1zM0 224h1v1h-1zM238 224h1v1h-1zM479 224h1v1h-1zM639 224h1v1h-1zM0 225h1v1h-1zM238 225h1v1h-1zM479 225h1v1h-1zM639 225h1v1h-1zM0 226h1v1h-1zM238 226h1v1h-1zM479 226h1v1h-1zM639 226h1v1h-1zM0 227h1v1h-1zM238 227h1v1h-1zM479 227h1v1h-1zM639 227h1v1h-1zM0 228h1v1h-1zM238 228h1v1h-1zM479 228h1v1h-1zM639 228h1v1h-1zM0 229h1v1h-1zM238 229h1v1h-1zM479 229h1v1h-1zM639 229h1v1h-1zM0 230h1v1h-1zM239 230h1v1h-1zM479 230h1v1h-1zM639 230h1v1h-1zM0 231h1v1h-1zM239 231h1v1h-1zM479 231h1v1h-1zM639 231h1v1h-1zM0 232h1v1h-1zM479 232h1v1h-1zM639 232h1v1h-1zM0 233h1v1h-1zM239 233h1v1h-1zM479 233h1v1h-1zM639 233h1v1h-1zM0 234h1v1h-1zM239 234h1v1h-1zM479 234h1v1h-1zM639 234h1v1h-1zM0 235h1v1h-1zM479 235h1v1h-1zM639 235h1v1h-1zM0 236h1v1h-1zM479 236h1v1h-1zM639 236h1v1h-1zM0 237h1v1h-1zM239 237h1v1h-1zM479 237h1v1h-1zM639 237h1v1h-1zM0 238h1v1h-1zM239 238h1v1h-1zM479 238h1v1h-1zM639 238h1v1h-1zM0 239h1v1h-1zM2 239h10v1h-10zM13 239h35v1h-35zM85 239h154v1h-154zM240 239h1v1h-1zM242 239h98v1h-98zM341 239h53v1h-53zM431 239h35v1h-35zM467 239h10v1h-10zM479 239h1v1h-1zM639 239h1v1h-1zM0 240h1v1h-1zM239 240h1v1h-1zM479 240h1v1h-1zM639 240h1v1h-1zM0 241h1v1h-1zM239 241h1v1h-1zM479 241h1v1h-1zM639 241h1v1h-1zM0 242h1v1h-1zM239 242h1v1h-1zM479 242h1v1h-1zM639 242h1v1h-1zM0 243h1v1h-1zM239 243h1v1h-1zM479 243h1v1h-1zM639 243h1v1h-1zM0 244h1v1h-1zM239 244h1v1h-1zM479 244h1v1h-1zM639 244h1v1h-1zM0 245h1v1h-1zM239 245h1v1h-1zM479 245h1v1h-1zM639 245h1v1h-1zM0 246h1v1h-1zM239 246h1v1h-1zM479 246h1v1h-1zM639 246h1v1h-1zM0 247h1v1h-1zM239 247h1v1h-1zM479 247h1v1h-1zM639 247h1v1h-1zM0 248h1v1h-1zM239 248h1v1h-1zM479 248h1v1h-1zM639 248h1v1h-1zM0 249h1v1h-1zM240 249h1v1h-1zM479 249h1v1h-1zM639 249h1v1h-1zM0 250h1v1h-1zM240 250h1v1h-1zM479 250h1v1h-1zM639 250h1v1h-1zM0 251h1v1h-1zM240 251h1v1h-1zM479 251h1v1h-1zM639 251h1v1h-1zM0 252h1v1h-1zM240 252h1v1h-1zM479 252h1v1h-1zM639 252h1v1h-1zM0 253h1v1h-1zM479 253h1v1h-1zM639 253h1v1h-1zM0 254h1v1h-1zM240 254h1v1h-1zM479 254h1v1h-1zM639 254h1v1h-1zM0 255h1v1h-1zM240 255h1v1h-1zM479 255h1v1h-1zM639 255h1v1h-1zM0 256h1v1h-1zM240 256h1v1h-1zM479 256h1v1h-1zM639 256h1v1h-1zM0 257h1v1h-1zM240 257h1v1h-1zM479 257h1v1h-1zM639 257h1v1h-1zM0 258h1v1h-1zM240 258h1v1h-1zM479 258h1v1h-1zM639 258h1v1h-1zM0 259h1v1h-1zM240 259h1v1h-1zM479 259h1v1h-1zM639 259h1v1h-1zM0 260h1v1h-1zM240 260h1v1h-1zM479 260h1v1h-1zM639 260h1v1h-1zM0 261h1v1h-1zM240 261h1v1h-1zM479 261h1v1h-1zM639 261h1v1h-1zM0 262h1v1h-1zM240 262h1v1h-1zM479 262h1v1h-1zM639 262h1v1h-1zM0 263h1v1h-1zM240 263h1v1h-1zM479 263h1v1h-1zM639 263h1v1h-1zM0 264h1v1h-1zM240 264h1v1h-1zM479 264h1v1h-1zM639 264h1v1h-1zM0 265h1v1h-1zM240 265h1v1h-1zM479 265h1v1h-1zM639 265h1v1h-1zM0 266h1v1h-1zM240 266h1v1h-1zM479 266h1v1h-1zM639 266h1v1h-1zM0 267h1v1h-1zM241 267h1v1h-1zM479 267h1v1h-1zM639 267h1v1h-1zM0 268h1v1h-1zM241 268h1v1h-1zM479 268h1v1h-1zM639 268h1v1h-1zM0 269h1v1h-1zM241 269h1v1h-1zM479 269h1v1h-1zM639 269h1v1h-1zM0 270h1v1h-1zM241 270h1v1h-1zM479 270h1v1h-1zM639 270h1v1h-1zM0 271h1v1h-1zM241 271h1v1h-1zM479 271h1v1h-1zM639 271h1v1h-1zM0 272h1v1h-1zM241 272h1v1h-1zM479 272h1v1h-1zM639 272h1v1h-1zM0 273h1v1h-1zM241 273h1v1h-1zM479 273h1v1h-1zM639 273h1v1h-1zM0 274h1v1h-1zM241 274h1v1h-1zM479 274h1v1h-1zM639 274h1v1h-1zM0 275h1v1h-1zM241 275h1v1h-1zM479 275h1v1h-1zM639 275h1v1h-1zM0 276h1v1h-1zM241 276h1v1h-1zM479 276h1v1h-1zM639 276h1v1h-1zM0 277h1v1h-1zM241 277h1v1h-1zM479 277h1v1h-1zM639 277h1v1h-1zM0 278h1v1h-1zM241 278h1v1h-1zM479 278h1v1h-1zM639 278h1v1h-1zM0 279h1v1h-1zM241 279h1v1h-1zM479 279h1v1h-1zM639 279h1v1h-1zM0 280h1v1h-1zM241 280h1v1h-1zM479 280h1v1h-1zM639 280h1v1h-1zM0 281h1v1h-1zM241 281h1v1h-1zM479 281h1v1h-1zM639 281h1v1h-1zM0 282h1v1h-1zM241 282h1v1h-1zM479 282h1v1h-1zM639 282h1v1h-1zM0 283h1v1h-1zM241 283h1v1h-1zM479 283h1v1h-1zM639 283h1v1h-1zM0 284h1v1h-1zM241 284h1v1h-1zM479 284h1v1h-1zM639 284h1v1h-1zM0 285h1v1h-1zM242 285h1v1h-1zM479 285h1v1h-1zM639 285h1v1h-1zM0 286h1v1h-1zM242 286h1v1h-1zM479 286h1v1h-1zM639 286h1v1h-1zM0 287h1v1h-1zM242 287h1v1h-1zM479 287h1v1h-1zM639 287h1v1h-1zM0 288h1v1h-1zM242 288h1v1h-1zM479 288h1v1h-1zM639 288h1v1h-1zM0 289h1v1h-1zM242 289h1v1h-1zM479 289h1v1h-1zM639 289h1v1h-1zM0 290h1v1h-1zM242 290h1v1h-1zM479 290h1v1h-1zM639 290h1v1h-1zM0 291h1v1h-1zM242 291h1v1h-1zM479 291h1v1h-1zM639 291h1v1h-1zM0 292h1v1h-1zM242 292h1v1h-1zM479 292h1v1h-1zM639 292h1v1h-1zM0 293h1v1h-1zM242 293h1v1h-1zM479 293h1v1h-1zM639 293h1v1h-1zM0 294h1v1h-1zM242 294h1v1h-1zM479 294h1v1h-1zM639 294h1v1h-1zM0 295h1v1h-1zM242 295h1v1h-1zM479 295h1v1h-1zM639 295h1v1h-1zM0 296h1v1h-1zM242 296h1v1h-1zM479 296h1v1h-1zM639 296h1v1h-1zM0 297h1v1h-1zM242 297h1v1h-1zM479 297h1v1h-1zM639 297h1v1h-1zM0 298h1v1h-1zM242 298h1v1h-1zM479 298h1v1h-1zM639 298h1v1h-1zM0 299h1v1h-1zM242 299h1v1h-1zM479 299h1v1h-1zM639 299h1v1h-1zM0 300h1v1h-1zM242 300h1v1h-1zM479 300h1v1h-1zM639 300h1v1h-1zM0 301h1v1h-1zM242 301h1v1h-1zM479 301h1v1h-1zM639 301h1v1h-1zM0 302h1v1h-1zM242 302h1v1h-1zM479 302h1v1h-1zM639 302h1v1h-1zM0 303h1v1h-1zM243 303h1v1h-1zM479 303h1v1h-1zM639 303h1v1h-1zM0 304h1v1h-1zM243 304h1v1h-1zM479 304h1v1h-1zM639 304h1v1h-1zM0 305h1v1h-1zM243 305h1v1h-1zM479 305h1v1h-1zM639 305h1v1h-1zM0 306h1v1h-1zM243 306h1v1h-1zM479 306h1v1h-1zM639 306h1v1h-1zM0 307h1v1h-1zM243 307h1v1h-1zM479 307h1v1h-1zM639 307h1v1h-1zM0 308h1v1h-1zM243 308h1v1h-1zM479 308h1v1h-1zM639 308h1v1h-1zM0 309h1v1h-1zM243 309h1v1h-1zM479 309h1v1h-1zM639 309h1v1h-1zM0 310h1v1h-1zM243 310h1v1h-1zM479 310h1v1h-1zM639 310h1v1h-1zM0 311h1v1h-1zM243 311h1v1h-1zM479 311h1v1h-1zM639 311h1v1h-1zM0 312h1v1h-1zM243 312h1v1h-1zM479 312h1v1h-1zM639 312h1v1h-1zM0 313h1v1h-1zM243 313h1v1h-1zM479 313h1v1h-1zM639 313h1v1h-1zM0 314h1v1h-1zM243 314h1v1h-1zM479 314h1v1h-1zM639 314h1v1h-1zM0 315h1v1h-1zM243 315h1v1h-1zM479 315h1v1h-1zM639 315h1v1h-1zM0 316h1v1h-1zM243 316h1v1h-1zM479 316h1v1h-1zM639 316h1v1h-1zM0 317h1v1h-1zM243 317h1v1h-1zM479 317h1v1h-1zM639 317h1v1h-1zM0 318h1v1h-1zM243 318h1v1h-1zM479 318h1v1h-1zM639 318h1v1h-1zM0 319h1v1h-1zM243 319h1v1h-1zM479 319h1v1h-1zM639 319h1v1h-1zM0 320h1v1h-1zM243 320h1v1h-1zM479 320h1v1h-1zM639 320h1v1h-1zM0 321h1v1h-1zM243 321h1v1h-1zM479 321h1v1h-1zM639 321h1v1h-1zM0 322h1v1h-1zM244 322h1v1h-1zM479 322h1v1h-1zM639 322h1v1h-1zM0 323h1v1h-1zM244 323h1v1h-1zM479 323h1v1h-1zM639 323h1v1h-1zM0 324h1v1h-1zM244 324h1v1h-1zM479 324h1v1h-1zM639 324h1v1h-1zM0 325h1v1h-1zM244 325h1v1h-1zM479 325h1v1h-1zM639 325h1v1h-1zM0 326h1v1h-1zM244 326h1v1h-1zM479 326h1v1h-1zM639 326h1v1h-1zM0 327h1v1h-1zM244 327h1v1h-1zM479 327h1v1h-1zM639 327h1v1h-1zM0 328h1v1h-1zM244 328h1v1h-1zM479 328h1v1h-1zM639 328h1v1h-1zM0 329h1v1h-1zM244 329h1v1h-1zM479 329h1v1h-1zM639 329h1v1h-1zM0 330h1v1h-1zM244 330h1v1h-1zM479 330h1v1h-1zM639 330h1v1h-1zM0 331h1v1h-1zM244 331h1v1h-1zM479 331h1v1h-1zM639 331h1v1h-1zM0 332h1v1h-1zM244 332h1v1h-1zM479 332h1v1h-1zM639 332h1v1h-1zM0 333h1v1h-1zM244 333h1v1h-1zM479 333h1v1h-1zM639 333h1v1h-1zM0 334h1v1h-1zM244 334h1v1h-1zM479 334h1v1h-1zM639 334h1v1h-1zM0 335h1v1h-1zM244 335h1v1h-1zM479 335h1v1h-1zM639 335h1v1h-1zM0 336h1v1h-1zM244 336h1v1h-1zM479 336h1v1h-1zM639 336h1v1h-1zM0 337h1v1h-1zM244 337h1v1h-1zM479 337h1v1h-1zM639 337h1v1h-1zM0 338h1v1h-1zM244 338h1v1h-1zM479 338h1v1h-1zM639 338h1v1h-1zM0 339h1v1h-1zM244 339h1v1h-1zM479 339h1v1h-1zM639 339h1v1h-1zM0 340h1v1h-1zM245 340h1v1h-1zM479 340h1v1h-1zM639 340h1v1h-1zM0 341h1v1h-1zM245 341h1v1h-1zM479 341h1v1h-1zM639 341h1v1h-1zM0 342h1v1h-1zM245 342h1v1h-1zM479 342h1v1h-1zM639 342h1v1h-1zM0 343h1v1h-1zM245 343h1v1h-1zM479 343h1v1h-1zM639 343h1v1h-1zM0 344h1v1h-1zM245 344h1v1h-1zM479 344h1v1h-1zM639 344h1v1h-1zM0 345h1v1h-1zM245 345h1v1h-1zM479 345h1v1h-1zM639 345h1v1h-1zM0 346h1v1h-1zM245 346h1v1h-1zM479 346h1v1h-1zM639 346h1v1h-1zM0 347h1v1h-1zM245 347h1v1h-1zM479 347h1v1h-1zM639 347h1v1h-1zM0 348h1v1h-1zM245 348h1v1h-1zM479 348h1v1h-1zM639 348h1v1h-1zM0 349h1v1h-1zM245 349h1v1h-1zM479 349h1v1h-1zM639 349h1v1h-1zM0 350h1v1h-1zM245 350h1v1h-1zM479 350h1v1h-1zM639 350h1v1h-1zM0 351h1v1h-1zM245 351h1v1h-1zM479 351h1v1h-1zM639 351h1v1h-1zM0 352h1v1h-1zM245 352h1v1h-1zM479 352h1v1h-1zM639 352h1v1h-1zM0 353h1v1h-1zM245 353h1v1h-1zM479 353h1v1h-1zM639 353h1v1h-1zM0 354h1v1h-1zM245 354h1v1h-1zM479 354h1v1h-1zM639 354h1v1h-1zM0 355h1v1h-1zM245 355h1v1h-1zM479 355h1v1h-1zM639 355h1v1h-1zM0 356h1v1h-1zM245 356h1v1h-1zM479 356h1v1h-1zM639 356h1v1h-1zM0 357h1v1h-1zM245 357h1v1h-1zM479 357h1v1h-1zM639 357h1v1h-1zM0 358h1v1h-1zM246 358h1v1h-1zM479 358h1v1h-1zM639 358h1v1h-1zM0 359h1v1h-1zM246 359h1v1h-1zM479 359h1v1h-1zM639 359h1v1h-1zM0 360h1v1h-1zM246 360h1v1h-1zM479 360h1v1h-1zM639 360h1v1h-1zM0 361h1v1h-1zM246 361h1v1h-1zM479 361h1v1h-1zM639 361h1v1h-1zM0 362h1v1h-1zM246 362h1v1h-1zM479 362h1v1h-1zM639 362h1v1h-1zM0 363h1v1h-1zM246 363h1v1h-1zM479 363h1v1h-1zM639 363h1v1h-1zM0 364h1v1h-1zM246 364h1v1h-1zM479 364h1v1h-1zM639 364h1v1h-1zM0 365h1v1h-1zM246 365h1v1h-1zM479 365h1v1h-1zM639 365h1v1h-1zM0 366h1v1h-1zM246 366h1v1h-1zM479 366h1v1h-1zM639 366h1v1h-1zM0 367h1v1h-1zM246 367h1v1h-1zM479 367h1v1h-1zM639 367h1v1h-1zM0 368h1v1h-1zM246 368h1v1h-1zM479 368h1v1h-1zM639 368h1v1h-1zM0 369h1v1h-1zM246 369h1v1h-1zM479 369h1v1h-1zM639 369h1v1h-1zM0 370h1v1h-1zM246 370h1v1h-1zM479 370h1v1h-1zM639 370h1v1h-1zM0 371h1v1h-1zM246 371h1v1h-1zM479 371h1v1h-1zM639 371h1v1h-1zM0 372h1v1h-1zM246 372h1v1h-1zM479 372h1v1h-1zM639 372h1v1h-1zM0 373h1v1h-1zM246 373h1v1h-1zM479 373h1v1h-1zM639 373h1v1h-1zM0 374h1v1h-1zM246 374h1v1h-1zM479 374h1v1h-1zM639 374h1v1h-1zM0 375h1v1h-1zM246 375h1v1h-1zM479 375h1v1h-1zM639 375h1v1h-1zM0 376h1v1h-1zM247 376h1v1h-1zM479 376h1v1h-1zM639 376h1v1h-1zM0 377h1v1h-1zM247 377h1v1h-1zM479 377h1v1h-1zM639 377h1v1h-1zM0 378h1v1h-1zM247 378h1v1h-1zM479 378h1v1h-1zM639 378h1v1h-1zM0 379h1v1h-1zM247 379h1v1h-1zM479 379h1v1h-1zM639 379h1v1h-1zM0 380h1v1h-1zM247 380h1v1h-1zM479 380h1v1h-1zM639 380h1v1h-1zM0 381h1v1h-1zM247 381h1v1h-1zM479 381h1v1h-1zM639 381h1v1h-1zM0 382h1v1h-1zM247 382h1v1h-1zM479 382h1v1h-1zM639 382h1v1h-1zM0 383h1v1h-1zM247 383h1v1h-1zM479 383h1v1h-1zM639 383h1v1h-1zM0 384h1v1h-1zM247 384h1v1h-1zM479 384h1v1h-1zM639 384h1v1h-1zM0 385h1v1h-1zM247 385h1v1h-1zM479 385h1v1h-1zM639 385h1v1h-1zM0 386h1v1h-1zM247 386h1v1h-1zM479 386h1v1h-1zM639 386h1v1h-1zM0 387h1v1h-1zM247 387h1v1h-1zM479 387h1v1h-1zM639 387h1v1h-1zM0 388h1v1h-1zM247 388h1v1h-1zM479 388h1v1h-1zM639 388h1v1h-1zM0 389h1v1h-1zM247 389h1v1h-1zM479 389h1v1h-1zM639 389h1v1h-1zM0 390h1v1h-1zM247 390h1v1h-1zM479 390h1v1h-1zM639 390h1v1h-1zM0 391h1v1h-1zM247 391h1v1h-1zM479 391h1v1h-1zM639 391h1v1h-1zM0 392h1v1h-1zM247 392h1v1h-1zM479 392h1v1h-1zM639 392h1v1h-1zM0 393h1v1h-1zM247 393h1v1h-1zM479 393h1v1h-1zM639 393h1v1h-1zM0 394h1v1h-1zM479 394h1v1h-1zM639 394h1v1h-1zM0 395h1v1h-1zM248 395h1v1h-1zM479 395h1v1h-1zM639 395h1v1h-1zM0 396h1v1h-1zM248 396h1v1h-1zM479 396h1v1h-1zM639 396h1v1h-1zM0 397h1v1h-1zM248 397h1v1h-1zM479 397h1v1h-1zM639 397h1v1h-1zM0 398h1v1h-1zM248 398h1v1h-1zM479 398h1v1h-1zM639 398h1v1h-1zM0 399h1v1h-1zM248 399h1v1h-1zM479 399h1v1h-1zM639 399h1v1h-1zM0 400h1v1h-1zM248 400h1v1h-1zM479 400h1v1h-1zM639 400h1v1h-1zM0 401h1v1h-1zM248 401h1v1h-1zM479 401h1v1h-1zM639 401h1v1h-1zM0 402h1v1h-1zM248 402h1v1h-1zM479 402h1v1h-1zM639 402h1v1h-1zM0 403h1v1h-1zM248 403h1v1h-1zM479 403h1v1h-1zM639 403h1v1h-1zM0 404h1v1h-1zM248 404h1v1h-1zM479 404h1v1h-1zM639 404h1v1h-1zM0 405h1v1h-1zM248 405h1v1h-1zM479 405h1v1h-1zM639 405h1v1h-1zM0 406h1v1h-1zM248 406h1v1h-1zM479 406h1v1h-1zM639 406h1v1h-1zM0 407h1v1h-1zM479 407h1v1h-1zM639 407h1v1h-1zM0 408h1v1h-1zM479 408h1v1h-1zM639 408h1v1h-1zM0 409h1v1h-1zM479 409h1v1h-1zM639 409h1v1h-1zM0 410h1v1h-1zM479 410h1v1h-1zM639 410h1v1h-1zM0 411h1v1h-1zM479 411h1v1h-1zM639 411h1v1h-1zM0 412h1v1h-1zM479 412h1v1h-1zM639 412h1v1h-1zM0 413h1v1h-1zM249 413h1v1h-1zM479 413h1v1h-1zM639 413h1v1h-1zM0 414h1v1h-1zM249 414h1v1h-1zM479 414h1v1h-1zM639 414h1v1h-1zM0 415h1v1h-1zM249 415h1v1h-1zM479 415h1v1h-1zM639 415h1v1h-1zM0 416h1v1h-1zM249 416h1v1h-1zM479 416h1v1h-1zM639 416h1v1h-1zM0 417h1v1h-1zM249 417h1v1h-1zM479 417h1v1h-1zM639 417h1v1h-1zM0 418h1v1h-1zM479 418h1v1h-1zM639 418h1v1h-1zM0 419h1v1h-1zM479 419h1v1h-1zM639 419h1v1h-1zM0 420h1v1h-1zM479 420h1v1h-1zM639 420h1v1h-1zM0 421h1v1h-1zM479 421h1v1h-1zM639 421h1v1h-1zM0 422h1v1h-1zM479 422h1v1h-1zM639 422h1v1h-1zM0 423h1v1h-1zM479 423h1v1h-1zM639 423h1v1h-1zM0 424h1v1h-1zM479 424h1v1h-1zM639 424h1v1h-1zM0 425h1v1h-1zM479 425h1v1h-1zM639 425h1v1h-1zM0 426h1v1h-1zM479 426h1v1h-1zM639 426h1v1h-1zM0 427h1v1h-1zM479 427h1v1h-1zM639 427h1v1h-1zM0 428h1v1h-1zM479 428h1v1h-1zM639 428h1v1h-1zM0 429h1v1h-1zM479 429h1v1h-1zM639 429h1v1h-1zM0 430h1v1h-1zM479 430h1v1h-1zM639 430h1v1h-1zM0 431h1v1h-1zM250 431h1v1h-1zM479 431h1v1h-1zM639 431h1v1h-1zM0 432h1v1h-1zM250 432h1v1h-1zM479 432h1v1h-1zM639 432h1v1h-1zM0 433h1v1h-1zM250 433h1v1h-1zM479 433h1v1h-1zM639 433h1v1h-1zM0 434h1v1h-1zM250 434h1v1h-1zM479 434h1v1h-1zM639 434h1v1h-1zM0 435h1v1h-1zM250 435h1v1h-1zM479 435h1v1h-1zM639 435h1v1h-1zM0 436h1v1h-1zM250 436h1v1h-1zM479 436h1v1h-1zM639 436h1v1h-1zM0 437h1v1h-1zM250 437h1v1h-1zM479 437h1v1h-1zM639 437h1v1h-1zM0 438h1v1h-1zM250 438h1v1h-1zM479 438h1v1h-1zM639 438h1v1h-1zM0 439h1v1h-1zM250 439h1v1h-1zM479 439h1v1h-1zM639 439h1v1h-1zM0 440h1v1h-1zM250 440h1v1h-1zM479 440h1v1h-1zM639 440h1v1h-1zM0 441h1v1h-1zM250 441h1v1h-1zM479 441h1v1h-1zM639 441h1v1h-1zM0 442h1v1h-1zM250 442h1v1h-1zM479 442h1v1h-1zM639 442h1v1h-1zM0 443h1v1h-1zM250 443h1v1h-1zM479 443h1v1h-1zM639 443h1v1h-1zM0 444h1v1h-1zM250 444h1v1h-1zM479 444h1v1h-1zM639 444h1v1h-1zM0 445h1v1h-1zM250 445h1v1h-1zM479 445h1v1h-1zM639 445h1v1h-1zM0 446h1v1h-1zM250 446h1v1h-1zM479 446h1v1h-1zM639 446h1v1h-1zM0 447h1v1h-1zM250 447h1v1h-1zM479 447h1v1h-1zM639 447h1v1h-1zM0 448h1v1h-1zM250 448h1v1h-1zM479 448h1v1h-1zM639 448h1v1h-1zM0 449h1v1h-1zM251 449h1v1h-1zM479 449h1v1h-1zM639 449h1v1h-1zM0 450h1v1h-1zM251 450h1v1h-1zM479 450h1v1h-1zM639 450h1v1h-1zM0 451h1v1h-1zM251 451h1v1h-1zM479 451h1v1h-1zM639 451h1v1h-1zM0 452h1v1h-1zM251 452h1v1h-1zM479 452h1v1h-1zM639 452h1v1h-1zM0 453h1v1h-1zM251 453h1v1h-1zM479 453h1v1h-1zM639 453h1v1h-1zM0 454h1v1h-1zM251 454h1v1h-1zM479 454h1v1h-1zM639 454h1v1h-1zM0 455h1v1h-1zM251 455h1v1h-1zM479 455h1v1h-1zM639 455h1v1h-1zM0 456h1v1h-1zM251 456h1v1h-1zM479 456h1v1h-1zM639 456h1v1h-1zM0 457h1v1h-1zM251 457h1v1h-1zM479 457h1v1h-1zM639 457h1v1h-1zM0 458h1v1h-1zM251 458h1v1h-1zM479 458h1v1h-1zM639 458h1v1h-1zM0 459h1v1h-1zM251 459h1v1h-1zM479 459h1v1h-1zM639 459h1v1h-1zM0 460h1v1h-1zM251 460h1v1h-1zM479 460h1v1h-1zM639 460h1v1h-1zM0 461h1v1h-1zM251 461h1v1h-1zM479 461h1v1h-1zM639 461h1v1h-1zM0 462h1v1h-1zM251 462h1v1h-1zM479 462h1v1h-1zM639 462h1v1h-1zM0 463h1v1h-1zM251 463h1v1h-1zM479 463h1v1h-1zM639 463h1v1h-1zM0 464h1v1h-1zM251 464h1v1h-1zM479 464h1v1h-1zM639 464h1v1h-1zM0 465h1v1h-1zM479 465h1v1h-1zM639 465h1v1h-1zM0 466h1v1h-1zM251 466h1v1h-1zM479 466h1v1h-1zM639 466h1v1h-1zM0 467h1v1h-1zM252 467h1v1h-1zM479 467h1v1h-1zM639 467h1v1h-1zM0 468h1v1h-1zM252 468h1v1h-1zM479 468h1v1h-1zM639 468h1v1h-1zM0 469h1v1h-1zM252 469h1v1h-1zM479 469h1v1h-1zM639 469h1v1h-1zM0 470h1v1h-1zM252 470h1v1h-1zM479 470h1v1h-1zM639 470h1v1h-1zM0 471h1v1h-1zM252 471h1v1h-1zM479 471h1v1h-1zM639 471h1v1h-1zM0 472h1v1h-1zM252 472h1v1h-1zM479 472h1v1h-1zM639 472h1v1h-1zM0 473h1v1h-1zM252 473h1v1h-1zM479 473h1v1h-1zM639 473h1v1h-1zM0 474h1v1h-1zM252 474h1v1h-1zM479 474h1v1h-1zM639 474h1v1h-1zM0 475h1v1h-1zM252 475h1v1h-1zM479 475h1v1h-1zM639 475h1v1h-1zM0 476h1v1h-1zM252 476h1v1h-1zM479 476h1v1h-1zM639 476h1v1h-1zM0 477h1v1h-1zM479 477h1v1h-1zM639 477h1v1h-1zM0 478h1v1h-1zM479 478h1v1h-1zM639 478h1v1h-1zM0 479h640v1h-640z"/>
<path fill="#808080" d="M225 49h1v1h-1zM232 49h1v1h-1zM235 49h1v1h-1zM239 49h1v1h-1zM241 49h1v1h-1zM247 49h1v1h-1zM251 49h1v1h-1zM254 49h1v1h-1zM219 50h1v1h-1zM222 50h1v1h-1zM225 50h1v1h-1zM232 50h1v1h-1zM235 50h1v1h-1zM239 50h1v1h-1zM241 50h1v1h-1zM247 50h1v1h-1zM251 50h1v1h-1zM254 50h1v1h-1zM257 50h1v1h-1zM215 51h1v1h-1zM219 51h1v1h-1zM222 51h1v1h-1zM225 51h1v1h-1zM232 51h1v1h-1zM235 51h1v1h-1zM239 51h1v1h-1zM241 51h1v1h-1zM247 51h1v1h-1zM251 51h1v1h-1zM254 51h1v1h-1zM257 51h1v1h-1zM264 51h1v1h-1zM267 51h1v1h-1zM205 52h1v1h-1zM209 52h1v1h-1zM215 52h1v1h-1zM219 52h1v1h-1zM222 52h1v1h-1zM225 52h1v1h-1zM232 52h1v1h-1zM235 52h1v1h-1zM239 52h1v1h-1zM241 52h1v1h-1zM247 52h1v1h-1zM251 52h1v1h-1zM254 52h1v1h-1zM257 52h1v1h-1zM264 52h1v1h-1zM267 52h1v1h-1zM271 52h1v1h-1zM274 52h1v1h-1zM199 53h1v1h-1zM202 53h1v1h-1zM205 53h1v1h-1zM209 53h1v1h-1zM216 53h1v1h-1zM219 53h1v1h-1zM222 53h1v1h-1zM225 53h1v1h-1zM232 53h1v1h-1zM235 53h1v1h-1zM239 53h1v1h-1zM241 53h1v1h-1zM247 53h1v1h-1zM251 53h1v1h-1zM254 53h1v1h-1zM257 53h1v1h-1zM264 53h1v1h-1zM267 53h1v1h-1zM271 53h1v1h-1zM274 53h1v1h-1zM199 54h1v1h-1zM202 54h1v1h-1zM205 54h1v1h-1zM209 54h1v1h-1zM216 54h1v1h-1zM219 54h1v1h-1zM222 54h1v1h-1zM225 54h1v1h-1zM232 54h1v1h-1zM235 54h1v1h-1zM239 54h1v1h-1zM241 54h1v1h-1zM247 54h1v1h-1zM251 54h1v1h-1zM254 54h1v1h-1zM257 54h1v1h-1zM264 54h1v1h-1zM267 54h1v1h-1zM270 54h1v1h-1zM274 54h1v1h-1zM280 54h1v1h-1zM192 55h1v1h-1zM199 55h1v1h-1zM203 55h1v1h-1zM206 55h1v1h-1zM209 55h1v1h-1zM216 55h1v1h-1zM219 55h1v1h-1zM223 55h1v1h-1zM226 55h1v1h-1zM232 55h1v1h-1zM235 55h1v1h-1zM239 55h1v1h-1zM241 55h1v1h-1zM247 55h1v1h-1zM250 55h1v1h-1zM253 55h1v1h-1zM256 55h1v1h-1zM264 55h1v1h-1zM267 55h1v1h-1zM270 55h1v1h-1zM273 55h1v1h-1zM280 55h1v1h-1zM284 55h1v1h-1zM287 55h1v1h-1zM186 56h1v1h-1zM189 56h1v1h-1zM193 56h1v1h-1zM200 56h1v1h-1zM203 56h1v1h-1zM206 56h1v1h-1zM209 56h1v1h-1zM216 56h1v1h-1zM220 56h1v1h-1zM223 56h1v1h-1zM226 56h1v1h-1zM232 56h1v1h-1zM235 56h1v1h-1zM239 56h1v1h-1zM241 56h1v1h-1zM247 56h1v1h-1zM250 56h1v1h-1zM253 56h1v1h-1zM256 56h1v1h-1zM263 56h1v1h-1zM267 56h1v1h-1zM270 56h1v1h-1zM273 56h1v1h-1zM279 56h1v1h-1zM283 56h1v1h-1zM287 56h1v1h-1zM290 56h1v1h-1zM183 57h1v1h-1zM186 57h1v1h-1zM190 57h1v1h-1zM193 57h1v1h-1zM200 57h1v1h-1zM203 57h1v1h-1zM206 57h1v1h-1zM210 57h1v1h-1zM216 57h1v1h-1zM220 57h1v1h-1zM223 57h1v1h-1zM226 57h1v1h-1zM232 57h1v1h-1zM235 57h1v1h-1zM239 57h1v1h-1zM241 57h1v1h-1zM247 57h1v1h-1zM250 57h1v1h-1zM253 57h1v1h-1zM256 57h1v1h-1zM263 57h1v1h-1zM266 57h1v1h-1zM270 57h1v1h-1zM273 57h1v1h-1zM279 57h1v1h-1zM283 57h1v1h-1zM286 57h1v1h-1zM290 57h1v1h-1zM183 58h1v1h-1zM187 58h1v1h-1zM190 58h1v1h-1zM193 58h1v1h-1zM200 58h1v1h-1zM203 58h1v1h-1zM206 58h1v1h-1zM210 58h1v1h-1zM216 58h1v1h-1zM220 58h1v1h-1zM223 58h1v1h-1zM226 58h1v1h-1zM232 58h1v1h-1zM235 58h1v1h-1zM239 58h1v1h-1zM241 58h1v1h-1zM247 58h1v1h-1zM250 58h1v1h-1zM253 58h1v1h-1zM256 58h1v1h-1zM263 58h1v1h-1zM266 58h1v1h-1zM270 58h1v1h-1zM273 58h1v1h-1zM279 58h1v1h-1zM283 58h1v1h-1zM286 58h1v1h-1zM289 58h1v1h-1zM297 58h1v1h-1zM184 59h1v1h-1zM187 59h1v1h-1zM190 59h1v1h-1zM193 59h1v1h-1zM200 59h1v1h-1zM203 59h1v1h-1zM206 59h1v1h-1zM210 59h1v1h-1zM217 59h1v1h-1zM220 59h1v1h-1zM223 59h1v1h-1zM226 59h1v1h-1zM232 59h1v1h-1zM235 59h1v1h-1zM239 59h1v1h-1zM241 59h1v1h-1zM247 59h1v1h-1zM250 59h1v1h-1zM253 59h1v1h-1zM256 59h1v1h-1zM263 59h1v1h-1zM266 59h1v1h-1zM270 59h1v1h-1zM273 59h1v1h-1zM279 59h1v1h-1zM283 59h1v1h-1zM286 59h1v1h-1zM289 59h1v1h-1zM297 59h1v1h-1zM300 59h1v1h-1zM176 60h1v1h-1zM184 60h1v1h-1zM187 60h1v1h-1zM190 60h1v1h-1zM194 60h1v1h-1zM200 60h1v1h-1zM203 60h1v1h-1zM207 60h1v1h-1zM210 60h1v1h-1zM217 60h1v1h-1zM220 60h1v1h-1zM223 60h1v1h-1zM256 60h1v1h-1zM263 60h1v1h-1zM266 60h1v1h-1zM269 60h1v1h-1zM272 60h1v1h-1zM279 60h1v1h-1zM282 60h1v1h-1zM286 60h1v1h-1zM289 60h1v1h-1zM296 60h1v1h-1zM300 60h1v1h-1zM173 61h1v1h-1zM177 61h1v1h-1zM184 61h1v1h-1zM187 61h1v1h-1zM191 61h1v1h-1zM194 61h1v1h-1zM201 61h1v1h-1zM204 61h1v1h-1zM207 61h1v1h-1zM210 61h1v1h-1zM217 61h1v1h-1zM263 61h1v1h-1zM266 61h1v1h-1zM269 61h1v1h-1zM272 61h1v1h-1zM279 61h1v1h-1zM282 61h1v1h-1zM285 61h1v1h-1zM289 61h1v1h-1zM296 61h1v1h-1zM299 61h1v1h-1zM303 61h1v1h-1zM170 62h1v1h-1zM174 62h1v1h-1zM177 62h1v1h-1zM184 62h1v1h-1zM188 62h1v1h-1zM191 62h1v1h-1zM194 62h1v1h-1zM201 62h1v1h-1zM204 62h1v1h-1zM207 62h1v1h-1zM210 62h1v1h-1zM269 62h1v1h-1zM272 62h1v1h-1zM278 62h1v1h-1zM282 62h1v1h-1zM285 62h1v1h-1zM288 62h1v1h-1zM295 62h1v1h-1zM299 62h1v1h-1zM302 62h1v1h-1zM306 62h1v1h-1zM167 63h1v1h-1zM170 63h1v1h-1zM174 63h1v1h-1zM178 63h1v1h-1zM185 63h1v1h-1zM188 63h1v1h-1zM191 63h1v1h-1zM194 63h1v1h-1zM201 63h1v1h-1zM204 63h1v1h-1zM278 63h1v1h-1zM281 63h1v1h-1zM285 63h1v1h-1zM288 63h1v1h-1zM295 63h1v1h-1zM298 63h1v1h-1zM302 63h1v1h-1zM305 63h1v1h-1zM167 64h1v1h-1zM171 64h1v1h-1zM175 64h1v1h-1zM178 64h1v1h-1zM185 64h1v1h-1zM188 64h1v1h-1zM191 64h1v1h-1zM195 64h1v1h-1zM281 64h1v1h-1zM284 64h1v1h-1zM288 64h1v1h-1zM295 64h1v1h-1zM298 64h1v1h-1zM301 64h1v1h-1zM305 64h1v1h-1zM312 64h1v1h-1zM168 65h1v1h-1zM171 65h1v1h-1zM175 65h1v1h-1zM178 65h1v1h-1zM185 65h1v1h-1zM189 65h1v1h-1zM192 65h1v1h-1zM284 65h1v1h-1zM287 65h1v1h-1zM294 65h1v1h-1zM298 65h1v1h-1zM301 65h1v1h-1zM304 65h1v1h-1zM311 65h1v1h-1zM161 66h1v1h-1zM168 66h1v1h-1zM172 66h1v1h-1zM175 66h1v1h-1zM179 66h1v1h-1zM186 66h1v1h-1zM189 66h1v1h-1zM287 66h1v1h-1zM294 66h1v1h-1zM297 66h1v1h-1zM301 66h1v1h-1zM304 66h1v1h-1zM311 66h1v1h-1zM315 66h1v1h-1zM158 67h1v1h-1zM162 67h1v1h-1zM169 67h1v1h-1zM172 67h1v1h-1zM176 67h1v1h-1zM179 67h1v1h-1zM186 67h1v1h-1zM293 67h1v1h-1zM297 67h1v1h-1zM300 67h1v1h-1zM304 67h1v1h-1zM310 67h1v1h-1zM314 67h1v1h-1zM318 67h1v1h-1zM155 68h1v1h-1zM158 68h1v1h-1zM162 68h1v1h-1zM169 68h1v1h-1zM172 68h1v1h-1zM176 68h1v1h-1zM180 68h1v1h-1zM293 68h1v1h-1zM296 68h1v1h-1zM300 68h1v1h-1zM303 68h1v1h-1zM310 68h1v1h-1zM314 68h1v1h-1zM317 68h1v1h-1zM321 68h1v1h-1zM155 69h1v1h-1zM159 69h1v1h-1zM163 69h1v1h-1zM169 69h1v1h-1zM173 69h1v1h-1zM177 69h1v1h-1zM180 69h1v1h-1zM296 69h1v1h-1zM299 69h1v1h-1zM303 69h1v1h-1zM310 69h1v1h-1zM313 69h1v1h-1zM317 69h1v1h-1zM320 69h1v1h-1zM152 70h1v1h-1zM156 70h1v1h-1zM159 70h1v1h-1zM163 70h1v1h-1zM170 70h1v1h-1zM173 70h1v1h-1zM177 70h1v1h-1zM299 70h1v1h-1zM302 70h1v1h-1zM309 70h1v1h-1zM313 70h1v1h-1zM316 70h1v1h-1zM320 70h1v1h-1zM153 71h1v1h-1zM156 71h1v1h-1zM160 71h1v1h-1zM163 71h1v1h-1zM170 71h1v1h-1zM174 71h1v1h-1zM302 71h1v1h-1zM309 71h1v1h-1zM312 71h1v1h-1zM316 71h1v1h-1zM319 71h1v1h-1zM327 71h1v1h-1zM153 72h1v1h-1zM157 72h1v1h-1zM160 72h1v1h-1zM164 72h1v1h-1zM171 72h1v1h-1zM308 72h1v1h-1zM312 72h1v1h-1zM316 72h1v1h-1zM319 72h1v1h-1zM326 72h1v1h-1zM330 72h1v1h-1zM154 73h1v1h-1zM157 73h1v1h-1zM161 73h1v1h-1zM164 73h1v1h-1zM308 73h1v1h-1zM311 73h1v1h-1zM315 73h1v1h-1zM319 73h1v1h-1zM326 73h1v1h-1zM329 73h1v1h-1zM147 74h1v1h-1zM154 74h1v1h-1zM158 74h1v1h-1zM161 74h1v1h-1zM165 74h1v1h-1zM311 74h1v1h-1zM315 74h1v1h-1zM318 74h1v1h-1zM325 74h1v1h-1zM329 74h1v1h-1zM333 74h1v1h-1zM143 75h1v1h-1zM147 75h1v1h-1zM155 75h1v1h-1zM158 75h1v1h-1zM162 75h1v1h-1zM165 75h1v1h-1zM314 75h1v1h-1zM318 75h1v1h-1zM325 75h1v1h-1zM328 75h1v1h-1zM332 75h1v1h-1zM144 76h1v1h-1zM148 76h1v1h-1zM155 76h1v1h-1zM159 76h1v1h-1zM162 76h1v1h-1zM314 76h1v1h-1zM317 76h1v1h-1zM324 76h1v1h-1zM328 76h1v1h-1zM332 76h1v1h-1zM335 76h1v1h-1zM141 77h1v1h-1zM144 77h1v1h-1zM148 77h1v1h-1zM156 77h1v1h-1zM159 77h1v1h-1zM317 77h1v1h-1zM324 77h1v1h-1zM327 77h1v1h-1zM331 77h1v1h-1zM335 77h1v1h-1zM141 78h1v1h-1zM145 78h1v1h-1zM149 78h1v1h-1zM156 78h1v1h-1zM323 78h1v1h-1zM327 78h1v1h-1zM331 78h1v1h-1zM334 78h1v1h-1zM138 79h1v1h-1zM142 79h1v1h-1zM146 79h1v1h-1zM149 79h1v1h-1zM157 79h1v1h-1zM323 79h1v1h-1zM326 79h1v1h-1zM330 79h1v1h-1zM334 79h1v1h-1zM342 79h1v1h-1zM138 80h1v1h-1zM143 80h1v1h-1zM146 80h1v1h-1zM150 80h1v1h-1zM322 80h1v1h-1zM326 80h1v1h-1zM330 80h1v1h-1zM333 80h1v1h-1zM341 80h1v1h-1zM139 81h1v1h-1zM143 81h1v1h-1zM147 81h1v1h-1zM150 81h1v1h-1zM325 81h1v1h-1zM329 81h1v1h-1zM333 81h1v1h-1zM341 81h1v1h-1zM344 81h1v1h-1zM132 82h1v1h-1zM140 82h1v1h-1zM144 82h1v1h-1zM148 82h1v1h-1zM151 82h1v1h-1zM329 82h1v1h-1zM332 82h1v1h-1zM340 82h1v1h-1zM343 82h1v1h-1zM133 83h1v1h-1zM140 83h1v1h-1zM145 83h1v1h-1zM148 83h1v1h-1zM328 83h1v1h-1zM332 83h1v1h-1zM339 83h1v1h-1zM343 83h1v1h-1zM347 83h1v1h-1zM129 84h1v1h-1zM133 84h1v1h-1zM141 84h1v1h-1zM145 84h1v1h-1zM331 84h1v1h-1zM339 84h1v1h-1zM342 84h1v1h-1zM346 84h1v1h-1zM130 85h1v1h-1zM134 85h1v1h-1zM142 85h1v1h-1zM146 85h1v1h-1zM338 85h1v1h-1zM342 85h1v1h-1zM346 85h1v1h-1zM349 85h1v1h-1zM130 86h1v1h-1zM135 86h1v1h-1zM142 86h1v1h-1zM337 86h1v1h-1zM341 86h1v1h-1zM345 86h1v1h-1zM349 86h1v1h-1zM127 87h1v1h-1zM131 87h1v1h-1zM135 87h1v1h-1zM143 87h1v1h-1zM337 87h1v1h-1zM340 87h1v1h-1zM344 87h1v1h-1zM348 87h1v1h-1zM124 88h1v1h-1zM128 88h1v1h-1zM132 88h1v1h-1zM136 88h1v1h-1zM336 88h1v1h-1zM340 88h1v1h-1zM343 88h1v1h-1zM347 88h1v1h-1zM125 89h1v1h-1zM129 89h1v1h-1zM133 89h1v1h-1zM137 89h1v1h-1zM339 89h1v1h-1zM343 89h1v1h-1zM347 89h1v1h-1zM354 89h1v1h-1zM125 90h1v1h-1zM129 90h1v1h-1zM133 90h1v1h-1zM137 90h1v1h-1zM342 90h1v1h-1zM346 90h1v1h-1zM354 90h1v1h-1zM126 91h1v1h-1zM130 91h1v1h-1zM134 91h1v1h-1zM138 91h1v1h-1zM341 91h1v1h-1zM345 91h1v1h-1zM353 91h1v1h-1zM357 91h1v1h-1zM119 92h1v1h-1zM127 92h1v1h-1zM131 92h1v1h-1zM135 92h1v1h-1zM345 92h1v1h-1zM352 92h1v1h-1zM356 92h1v1h-1zM120 93h1v1h-1zM128 93h1v1h-1zM132 93h1v1h-1zM344 93h1v1h-1zM352 93h1v1h-1zM356 93h1v1h-1zM360 93h1v1h-1zM116 94h1v1h-1zM120 94h1v1h-1zM128 94h1v1h-1zM133 94h1v1h-1zM351 94h1v1h-1zM355 94h1v1h-1zM359 94h1v1h-1zM117 95h1v1h-1zM121 95h1v1h-1zM129 95h1v1h-1zM350 95h1v1h-1zM354 95h1v1h-1zM359 95h1v1h-1zM363 95h1v1h-1zM113 96h1v1h-1zM118 96h1v1h-1zM122 96h1v1h-1zM130 96h1v1h-1zM350 96h1v1h-1zM353 96h1v1h-1zM358 96h1v1h-1zM362 96h1v1h-1zM114 97h1v1h-1zM119 97h1v1h-1zM123 97h1v1h-1zM349 97h1v1h-1zM353 97h1v1h-1zM357 97h1v1h-1zM361 97h1v1h-1zM111 98h1v1h-1zM115 98h1v1h-1zM119 98h1v1h-1zM123 98h1v1h-1zM352 98h1v1h-1zM356 98h1v1h-1zM360 98h1v1h-1zM112 99h1v1h-1zM116 99h1v1h-1zM120 99h1v1h-1zM124 99h1v1h-1zM351 99h1v1h-1zM356 99h1v1h-1zM360 99h1v1h-1zM368 99h1v1h-1zM113 100h1v1h-1zM117 100h1v1h-1zM121 100h1v1h-1zM125 100h1v1h-1zM355 100h1v1h-1zM359 100h1v1h-1zM367 100h1v1h-1zM114 101h1v1h-1zM118 101h1v1h-1zM122 101h1v1h-1zM354 101h1v1h-1zM358 101h1v1h-1zM366 101h1v1h-1zM370 101h1v1h-1zM114 102h1v1h-1zM119 102h1v1h-1zM123 102h1v1h-1zM357 102h1v1h-1zM365 102h1v1h-1zM369 102h1v1h-1zM106 103h1v1h-1zM115 103h1v1h-1zM120 103h1v1h-1zM356 103h1v1h-1zM365 103h1v1h-1zM368 103h1v1h-1zM107 104h1v1h-1zM116 104h1v1h-1zM364 104h1v1h-1zM367 104h1v1h-1zM373 104h1v1h-1zM104 105h1v1h-1zM108 105h1v1h-1zM117 105h1v1h-1zM249 105h1v1h-1zM363 105h1v1h-1zM367 105h1v1h-1zM372 105h1v1h-1zM105 106h1v1h-1zM109 106h2v1h-2zM118 106h1v1h-1zM249 106h1v1h-1zM362 106h1v1h-1zM366 106h1v1h-1zM371 106h1v1h-1zM375 106h1v1h-1zM106 107h1v1h-1zM111 107h1v1h-1zM249 107h1v1h-1zM317 107h1v1h-1zM361 107h1v1h-1zM365 107h1v1h-1zM369 107h2v1h-2zM374 107h1v1h-1zM101 108h1v1h-1zM107 108h1v1h-1zM112 108h1v1h-1zM249 108h1v1h-1zM364 108h1v1h-1zM368 108h1v1h-1zM373 108h1v1h-1zM102 109h1v1h-1zM107 109h1v1h-1zM113 109h1v1h-1zM249 109h1v1h-1zM316 109h1v1h-1zM363 109h1v1h-1zM367 109h1v1h-1zM372 109h1v1h-1zM99 110h1v1h-1zM103 110h1v1h-1zM108 110h1v1h-1zM114 110h1v1h-1zM249 110h1v1h-1zM366 110h1v1h-1zM372 110h1v1h-1zM100 111h1v1h-1zM104 111h2v1h-2zM109 111h1v1h-1zM248 111h1v1h-1zM315 111h1v1h-1zM365 111h1v1h-1zM371 111h1v1h-1zM380 111h1v1h-1zM101 112h1v1h-1zM106 112h1v1h-1zM110 112h1v1h-1zM248 112h1v1h-1zM370 112h1v1h-1zM379 112h1v1h-1zM102 113h2v1h-2zM107 113h1v1h-1zM111 113h1v1h-1zM248 113h1v1h-1zM314 113h1v1h-1zM369 113h1v1h-1zM378 113h1v1h-1zM382 113h1v1h-1zM104 114h1v1h-1zM108 114h1v1h-1zM248 114h1v1h-1zM368 114h1v1h-1zM376 114h2v1h-2zM381 114h1v1h-1zM95 115h1v1h-1zM105 115h1v1h-1zM109 115h1v1h-1zM149 115h1v1h-1zM248 115h1v1h-1zM313 115h1v1h-1zM375 115h1v1h-1zM380 115h1v1h-1zM96 116h1v1h-1zM106 116h1v1h-1zM374 116h1v1h-1zM379 116h1v1h-1zM384 116h1v1h-1zM97 117h1v1h-1zM107 117h1v1h-1zM150 117h1v1h-1zM311 117h1v1h-1zM373 117h1v1h-1zM378 117h1v1h-1zM383 117h1v1h-1zM93 118h1v1h-1zM98 118h2v1h-2zM372 118h1v1h-1zM377 118h1v1h-1zM382 118h1v1h-1zM94 119h2v1h-2zM100 119h1v1h-1zM152 119h1v1h-1zM310 119h1v1h-1zM376 119h1v1h-1zM380 119h2v1h-2zM386 119h1v1h-1zM96 120h1v1h-1zM101 120h1v1h-1zM375 120h1v1h-1zM379 120h1v1h-1zM384 120h2v1h-2zM91 121h1v1h-1zM97 121h1v1h-1zM102 121h1v1h-1zM153 121h1v1h-1zM309 121h1v1h-1zM378 121h1v1h-1zM383 121h1v1h-1zM92 122h2v1h-2zM98 122h2v1h-2zM103 122h1v1h-1zM377 122h1v1h-1zM382 122h1v1h-1zM94 123h1v1h-1zM100 123h1v1h-1zM155 123h1v1h-1zM308 123h1v1h-1zM376 123h1v1h-1zM380 123h2v1h-2zM89 124h2v1h-2zM95 124h1v1h-1zM101 124h1v1h-1zM379 124h1v1h-1zM390 124h1v1h-1zM91 125h1v1h-1zM96 125h2v1h-2zM156 125h1v1h-1zM307 125h1v1h-1zM378 125h1v1h-1zM388 125h2v1h-2zM92 126h2v1h-2zM98 126h1v1h-1zM387 126h1v1h-1zM94 127h1v1h-1zM99 127h1v1h-1zM157 127h1v1h-1zM306 127h1v1h-1zM386 127h1v1h-1zM391 127h1v1h-1zM95 128h2v1h-2zM384 128h2v1h-2zM390 128h1v1h-1zM85 129h2v1h-2zM97 129h1v1h-1zM159 129h1v1h-1zM304 129h1v1h-1zM383 129h1v1h-1zM388 129h2v1h-2zM394 129h1v1h-1zM87 130h1v1h-1zM382 130h1v1h-1zM387 130h1v1h-1zM392 130h2v1h-2zM83 131h1v1h-1zM88 131h2v1h-2zM160 131h1v1h-1zM303 131h1v1h-1zM386 131h1v1h-1zM391 131h1v1h-1zM84 132h2v1h-2zM90 132h1v1h-1zM385 132h1v1h-1zM390 132h1v1h-1zM396 132h1v1h-1zM86 133h1v1h-1zM91 133h2v1h-2zM162 133h1v1h-1zM302 133h1v1h-1zM384 133h1v1h-1zM388 133h2v1h-2zM394 133h2v1h-2zM81 134h1v1h-1zM87 134h1v1h-1zM93 134h1v1h-1zM387 134h1v1h-1zM393 134h1v1h-1zM82 135h2v1h-2zM88 135h2v1h-2zM163 135h1v1h-1zM301 135h1v1h-1zM386 135h1v1h-1zM391 135h2v1h-2zM79 136h1v1h-1zM84 136h2v1h-2zM90 136h1v1h-1zM390 136h1v1h-1zM80 137h2v1h-2zM86 137h1v1h-1zM91 137h1v1h-1zM165 137h1v1h-1zM300 137h1v1h-1zM388 137h2v1h-2zM82 138h1v1h-1zM87 138h2v1h-2zM387 138h1v1h-1zM398 138h2v1h-2zM83 139h2v1h-2zM89 139h1v1h-1zM166 139h1v1h-1zM298 139h1v1h-1zM397 139h1v1h-1zM85 140h1v1h-1zM395 140h2v1h-2zM86 141h2v1h-2zM168 141h1v1h-1zM297 141h1v1h-1zM394 141h1v1h-1zM400 141h2v1h-2zM88 142h1v1h-1zM392 142h2v1h-2zM399 142h1v1h-1zM76 143h2v1h-2zM169 143h1v1h-1zM296 143h1v1h-1zM391 143h1v1h-1zM397 143h2v1h-2zM403 143h1v1h-1zM78 144h2v1h-2zM396 144h1v1h-1zM401 144h2v1h-2zM74 145h1v1h-1zM80 145h2v1h-2zM171 145h1v1h-1zM295 145h1v1h-1zM394 145h2v1h-2zM400 145h1v1h-1zM75 146h2v1h-2zM82 146h2v1h-2zM393 146h1v1h-1zM398 146h2v1h-2zM77 147h2v1h-2zM84 147h1v1h-1zM172 147h1v1h-1zM294 147h1v1h-1zM397 147h1v1h-1zM403 147h2v1h-2zM72 148h1v1h-1zM79 148h2v1h-2zM395 148h2v1h-2zM401 148h2v1h-2zM73 149h2v1h-2zM81 149h2v1h-2zM173 149h1v1h-1zM292 149h1v1h-1zM399 149h2v1h-2zM75 150h2v1h-2zM83 150h1v1h-1zM397 150h2v1h-2zM71 151h1v1h-1zM77 151h2v1h-2zM175 151h1v1h-1zM291 151h1v1h-1zM396 151h1v1h-1zM72 152h2v1h-2zM79 152h2v1h-2zM408 152h1v1h-1zM74 153h2v1h-2zM81 153h1v1h-1zM176 153h1v1h-1zM290 153h1v1h-1zM406 153h2v1h-2zM76 154h2v1h-2zM404 154h2v1h-2zM78 155h2v1h-2zM178 155h1v1h-1zM289 155h1v1h-1zM402 155h2v1h-2zM409 155h2v1h-2zM80 156h1v1h-1zM400 156h2v1h-2zM407 156h2v1h-2zM68 157h1v1h-1zM179 157h1v1h-1zM288 157h1v1h-1zM399 157h1v1h-1zM405 157h2v1h-2zM69 158h2v1h-2zM403 158h2v1h-2zM410 158h2v1h-2zM71 159h3v1h-3zM181 159h1v1h-1zM287 159h1v1h-1zM401 159h2v1h-2zM408 159h2v1h-2zM67 160h1v1h-1zM74 160h2v1h-2zM406 160h2v1h-2zM68 161h2v1h-2zM76 161h2v1h-2zM182 161h1v1h-1zM285 161h1v1h-1zM348 161h1v1h-1zM404 161h2v1h-2zM412 161h1v1h-1zM70 162h3v1h-3zM346 162h2v1h-2zM402 162h2v1h-2zM410 162h2v1h-2zM66 163h1v1h-1zM73 163h2v1h-2zM184 163h1v1h-1zM284 163h1v1h-1zM344 163h2v1h-2zM407 163h3v1h-3zM67 164h2v1h-2zM75 164h2v1h-2zM343 164h1v1h-1zM405 164h2v1h-2zM69 165h2v1h-2zM185 165h1v1h-1zM283 165h1v1h-1zM341 165h2v1h-2zM403 165h2v1h-2zM64 166h1v1h-1zM71 166h2v1h-2zM340 166h1v1h-1zM65 167h2v1h-2zM73 167h2v1h-2zM187 167h1v1h-1zM282 167h1v1h-1zM414 167h2v1h-2zM67 168h3v1h-3zM375 168h1v1h-1zM412 168h2v1h-2zM70 169h2v1h-2zM188 169h1v1h-1zM281 169h1v1h-1zM373 169h1v1h-1zM409 169h3v1h-3zM72 170h2v1h-2zM371 170h1v1h-1zM407 170h2v1h-2zM415 170h2v1h-2zM189 171h1v1h-1zM279 171h1v1h-1zM369 171h1v1h-1zM406 171h1v1h-1zM413 171h2v1h-2zM62 172h1v1h-1zM367 172h1v1h-1zM410 172h3v1h-3zM63 173h2v1h-2zM191 173h1v1h-1zM278 173h1v1h-1zM365 173h1v1h-1zM408 173h2v1h-2zM417 173h1v1h-1zM65 174h3v1h-3zM363 174h1v1h-1zM407 174h1v1h-1zM415 174h2v1h-2zM61 175h1v1h-1zM68 175h2v1h-2zM99 175h1v1h-1zM192 175h1v1h-1zM277 175h1v1h-1zM361 175h1v1h-1zM412 175h3v1h-3zM62 176h2v1h-2zM70 176h2v1h-2zM101 176h1v1h-1zM359 176h1v1h-1zM410 176h2v1h-2zM418 176h1v1h-1zM64 177h3v1h-3zM103 177h1v1h-1zM194 177h1v1h-1zM276 177h1v1h-1zM357 177h1v1h-1zM408 177h2v1h-2zM416 177h2v1h-2zM59 178h2v1h-2zM67 178h2v1h-2zM105 178h1v1h-1zM355 178h1v1h-1zM413 178h3v1h-3zM61 179h2v1h-2zM69 179h2v1h-2zM107 179h1v1h-1zM195 179h1v1h-1zM275 179h1v1h-1zM353 179h1v1h-1zM411 179h2v1h-2zM63 180h3v1h-3zM109 180h1v1h-1zM351 180h1v1h-1zM409 180h2v1h-2zM58 181h2v1h-2zM66 181h2v1h-2zM111 181h1v1h-1zM197 181h1v1h-1zM273 181h1v1h-1zM349 181h1v1h-1zM60 182h2v1h-2zM68 182h2v1h-2zM113 182h1v1h-1zM347 182h1v1h-1zM62 183h3v1h-3zM115 183h1v1h-1zM198 183h1v1h-1zM272 183h1v1h-1zM345 183h1v1h-1zM420 183h2v1h-2zM65 184h2v1h-2zM117 184h1v1h-1zM343 184h1v1h-1zM416 184h4v1h-4zM67 185h2v1h-2zM119 185h1v1h-1zM121 185h1v1h-1zM200 185h1v1h-1zM271 185h1v1h-1zM341 185h1v1h-1zM413 185h3v1h-3zM123 186h1v1h-1zM339 186h1v1h-1zM411 186h2v1h-2zM421 186h2v1h-2zM125 187h1v1h-1zM201 187h1v1h-1zM270 187h1v1h-1zM337 187h1v1h-1zM417 187h4v1h-4zM56 188h2v1h-2zM127 188h1v1h-1zM414 188h3v1h-3zM58 189h4v1h-4zM129 189h1v1h-1zM203 189h1v1h-1zM269 189h1v1h-1zM335 189h1v1h-1zM412 189h2v1h-2zM422 189h1v1h-1zM62 190h3v1h-3zM131 190h1v1h-1zM333 190h1v1h-1zM418 190h4v1h-4zM55 191h2v1h-2zM65 191h2v1h-2zM133 191h1v1h-1zM204 191h1v1h-1zM268 191h1v1h-1zM331 191h1v1h-1zM414 191h4v1h-4zM57 192h4v1h-4zM135 192h1v1h-1zM329 192h1v1h-1zM413 192h1v1h-1zM423 192h1v1h-1zM61 193h3v1h-3zM137 193h1v1h-1zM206 193h1v1h-1zM266 193h1v1h-1zM327 193h1v1h-1zM419 193h4v1h-4zM55 194h1v1h-1zM64 194h2v1h-2zM139 194h1v1h-1zM325 194h1v1h-1zM415 194h4v1h-4zM56 195h4v1h-4zM141 195h1v1h-1zM143 195h1v1h-1zM207 195h1v1h-1zM265 195h1v1h-1zM323 195h1v1h-1zM414 195h1v1h-1zM60 196h3v1h-3zM145 196h1v1h-1zM321 196h1v1h-1zM63 197h2v1h-2zM147 197h1v1h-1zM208 197h1v1h-1zM264 197h1v1h-1zM319 197h1v1h-1zM54 198h2v1h-2zM149 198h1v1h-1zM317 198h1v1h-1zM56 199h6v1h-6zM151 199h1v1h-1zM210 199h1v1h-1zM263 199h1v1h-1zM315 199h1v1h-1zM423 199h3v1h-3zM62 200h2v1h-2zM153 200h1v1h-1zM313 200h1v1h-1zM418 200h5v1h-5zM155 201h1v1h-1zM211 201h1v1h-1zM262 201h1v1h-1zM311 201h1v1h-1zM415 201h3v1h-3zM157 202h1v1h-1zM309 202h1v1h-1zM424 202h2v1h-2zM159 203h1v1h-1zM213 203h1v1h-1zM260 203h1v1h-1zM307 203h1v1h-1zM418 203h6v1h-6zM52 204h3v1h-3zM161 204h1v1h-1zM305 204h1v1h-1zM415 204h3v1h-3zM55 205h5v1h-5zM163 205h1v1h-1zM165 205h1v1h-1zM214 205h1v1h-1zM259 205h1v1h-1zM303 205h1v1h-1zM424 205h3v1h-3zM60 206h3v1h-3zM167 206h1v1h-1zM301 206h1v1h-1zM419 206h5v1h-5zM52 207h2v1h-2zM169 207h1v1h-1zM216 207h1v1h-1zM258 207h1v1h-1zM299 207h1v1h-1zM416 207h3v1h-3zM54 208h6v1h-6zM171 208h1v1h-1zM60 209h3v1h-3zM173 209h1v1h-1zM217 209h1v1h-1zM257 209h1v1h-1zM297 209h1v1h-1zM422 209h5v1h-5zM175 210h1v1h-1zM295 210h1v1h-1zM416 210h6v1h-6zM51 211h6v1h-6zM177 211h1v1h-1zM219 211h1v1h-1zM256 211h1v1h-1zM293 211h1v1h-1zM57 212h5v1h-5zM179 212h1v1h-1zM291 212h1v1h-1zM181 213h1v1h-1zM220 213h1v1h-1zM254 213h1v1h-1zM289 213h1v1h-1zM51 214h5v1h-5zM183 214h1v1h-1zM185 214h1v1h-1zM287 214h1v1h-1zM56 215h6v1h-6zM187 215h1v1h-1zM222 215h1v1h-1zM253 215h1v1h-1zM285 215h1v1h-1zM426 215h2v1h-2zM189 216h1v1h-1zM283 216h1v1h-1zM420 216h6v1h-6zM191 217h1v1h-1zM223 217h1v1h-1zM252 217h1v1h-1zM281 217h1v1h-1zM417 217h3v1h-3zM193 218h1v1h-1zM279 218h1v1h-1zM195 219h1v1h-1zM224 219h1v1h-1zM251 219h1v1h-1zM277 219h1v1h-1zM423 219h6v1h-6zM197 220h1v1h-1zM275 220h1v1h-1zM418 220h5v1h-5zM50 221h5v1h-5zM199 221h1v1h-1zM226 221h1v1h-1zM250 221h1v1h-1zM273 221h1v1h-1zM55 222h6v1h-6zM201 222h1v1h-1zM271 222h1v1h-1zM424 222h5v1h-5zM203 223h1v1h-1zM249 223h1v1h-1zM269 223h1v1h-1zM418 223h6v1h-6zM49 224h6v1h-6zM205 224h1v1h-1zM207 224h1v1h-1zM267 224h1v1h-1zM55 225h5v1h-5zM209 225h1v1h-1zM229 225h1v1h-1zM247 225h1v1h-1zM265 225h1v1h-1zM424 225h6v1h-6zM211 226h1v1h-1zM263 226h1v1h-1zM419 226h5v1h-5zM49 227h6v1h-6zM213 227h1v1h-1zM230 227h1v1h-1zM246 227h1v1h-1zM261 227h1v1h-1zM55 228h5v1h-5zM215 228h1v1h-1zM259 228h1v1h-1zM217 229h1v1h-1zM232 229h1v1h-1zM245 229h1v1h-1zM219 230h1v1h-1zM257 230h1v1h-1zM49 231h11v1h-11zM221 231h1v1h-1zM233 231h1v1h-1zM244 231h1v1h-1zM255 231h1v1h-1zM223 232h1v1h-1zM253 232h1v1h-1zM419 232h11v1h-11zM225 233h1v1h-1zM235 233h1v1h-1zM243 233h1v1h-1zM251 233h1v1h-1zM227 234h1v1h-1zM229 234h1v1h-1zM249 234h1v1h-1zM231 235h1v1h-1zM236 235h1v1h-1zM241 235h1v1h-1zM247 235h1v1h-1zM419 235h11v1h-11zM233 236h1v1h-1zM245 236h1v1h-1zM49 237h11v1h-11zM235 237h1v1h-1zM238 237h1v1h-1zM243 237h1v1h-1zM237 238h1v1h-1zM49 239h11v1h-11zM239 239h1v1h-1zM419 239h11v1h-11zM237 240h1v1h-1zM241 240h1v1h-1zM235 241h1v1h-1zM238 241h1v1h-1zM240 241h1v1h-1zM243 241h1v1h-1zM419 241h11v1h-11zM233 242h1v1h-1zM49 243h11v1h-11zM231 243h1v1h-1zM237 243h1v1h-1zM242 243h1v1h-1zM247 243h1v1h-1zM229 244h1v1h-1zM249 244h1v1h-1zM251 244h1v1h-1zM227 245h1v1h-1zM235 245h1v1h-1zM243 245h1v1h-1zM253 245h1v1h-1zM49 246h11v1h-11zM225 246h1v1h-1zM255 246h1v1h-1zM223 247h1v1h-1zM234 247h1v1h-1zM257 247h1v1h-1zM419 247h11v1h-11zM221 248h1v1h-1zM259 248h1v1h-1zM233 249h1v1h-1zM261 249h1v1h-1zM219 250h1v1h-1zM263 250h1v1h-1zM419 250h5v1h-5zM217 251h1v1h-1zM232 251h1v1h-1zM248 251h1v1h-1zM265 251h1v1h-1zM424 251h6v1h-6zM55 252h5v1h-5zM215 252h1v1h-1zM267 252h1v1h-1zM49 253h6v1h-6zM213 253h1v1h-1zM231 253h1v1h-1zM249 253h1v1h-1zM269 253h1v1h-1zM419 253h5v1h-5zM211 254h1v1h-1zM271 254h1v1h-1zM273 254h1v1h-1zM424 254h6v1h-6zM55 255h6v1h-6zM209 255h1v1h-1zM229 255h1v1h-1zM251 255h1v1h-1zM275 255h1v1h-1zM50 256h5v1h-5zM207 256h1v1h-1zM277 256h1v1h-1zM418 256h6v1h-6zM205 257h1v1h-1zM228 257h1v1h-1zM252 257h1v1h-1zM279 257h1v1h-1zM424 257h5v1h-5zM56 258h5v1h-5zM203 258h1v1h-1zM281 258h1v1h-1zM50 259h6v1h-6zM201 259h1v1h-1zM227 259h1v1h-1zM254 259h1v1h-1zM283 259h1v1h-1zM199 260h1v1h-1zM285 260h1v1h-1zM59 261h3v1h-3zM197 261h1v1h-1zM226 261h1v1h-1zM255 261h1v1h-1zM287 261h1v1h-1zM53 262h6v1h-6zM195 262h1v1h-1zM289 262h1v1h-1zM51 263h2v1h-2zM193 263h1v1h-1zM225 263h1v1h-1zM256 263h1v1h-1zM291 263h1v1h-1zM417 263h6v1h-6zM191 264h1v1h-1zM293 264h1v1h-1zM295 264h1v1h-1zM423 264h5v1h-5zM189 265h1v1h-1zM224 265h1v1h-1zM258 265h1v1h-1zM297 265h1v1h-1zM187 266h1v1h-1zM299 266h1v1h-1zM417 266h5v1h-5zM185 267h1v1h-1zM222 267h1v1h-1zM259 267h1v1h-1zM301 267h1v1h-1zM422 267h6v1h-6zM57 268h6v1h-6zM183 268h1v1h-1zM303 268h1v1h-1zM52 269h5v1h-5zM181 269h1v1h-1zM221 269h1v1h-1zM261 269h1v1h-1zM305 269h1v1h-1zM416 269h3v1h-3zM307 270h1v1h-1zM419 270h6v1h-6zM60 271h3v1h-3zM179 271h1v1h-1zM220 271h1v1h-1zM262 271h1v1h-1zM309 271h1v1h-1zM425 271h2v1h-2zM55 272h5v1h-5zM177 272h1v1h-1zM311 272h1v1h-1zM416 272h3v1h-3zM52 273h3v1h-3zM175 273h1v1h-1zM219 273h1v1h-1zM264 273h1v1h-1zM313 273h1v1h-1zM315 273h1v1h-1zM419 273h5v1h-5zM61 274h3v1h-3zM173 274h1v1h-1zM317 274h1v1h-1zM424 274h3v1h-3zM55 275h6v1h-6zM171 275h1v1h-1zM218 275h1v1h-1zM265 275h1v1h-1zM319 275h1v1h-1zM53 276h2v1h-2zM169 276h1v1h-1zM321 276h1v1h-1zM61 277h3v1h-3zM167 277h1v1h-1zM216 277h1v1h-1zM267 277h1v1h-1zM323 277h1v1h-1zM56 278h5v1h-5zM165 278h1v1h-1zM325 278h1v1h-1zM415 278h2v1h-2zM53 279h3v1h-3zM163 279h1v1h-1zM215 279h1v1h-1zM268 279h1v1h-1zM327 279h1v1h-1zM417 279h6v1h-6zM161 280h1v1h-1zM329 280h1v1h-1zM423 280h2v1h-2zM159 281h1v1h-1zM214 281h1v1h-1zM270 281h1v1h-1zM331 281h1v1h-1zM414 281h2v1h-2zM157 282h1v1h-1zM333 282h1v1h-1zM416 282h3v1h-3zM64 283h1v1h-1zM155 283h1v1h-1zM213 283h1v1h-1zM271 283h1v1h-1zM335 283h1v1h-1zM337 283h1v1h-1zM419 283h4v1h-4zM60 284h4v1h-4zM153 284h1v1h-1zM339 284h1v1h-1zM413 284h2v1h-2zM423 284h1v1h-1zM56 285h4v1h-4zM151 285h1v1h-1zM212 285h1v1h-1zM272 285h1v1h-1zM341 285h1v1h-1zM415 285h3v1h-3zM55 286h1v1h-1zM65 286h1v1h-1zM149 286h1v1h-1zM343 286h1v1h-1zM418 286h4v1h-4zM61 287h4v1h-4zM147 287h1v1h-1zM210 287h1v1h-1zM274 287h1v1h-1zM345 287h1v1h-1zM412 287h2v1h-2zM422 287h2v1h-2zM57 288h4v1h-4zM145 288h1v1h-1zM347 288h1v1h-1zM414 288h3v1h-3zM56 289h1v1h-1zM65 289h2v1h-2zM143 289h1v1h-1zM209 289h1v1h-1zM275 289h1v1h-1zM349 289h1v1h-1zM417 289h4v1h-4zM62 290h3v1h-3zM351 290h1v1h-1zM421 290h2v1h-2zM58 291h4v1h-4zM141 291h1v1h-1zM208 291h1v1h-1zM277 291h1v1h-1zM353 291h1v1h-1zM56 292h2v1h-2zM66 292h2v1h-2zM139 292h1v1h-1zM355 292h1v1h-1zM63 293h3v1h-3zM137 293h1v1h-1zM207 293h1v1h-1zM278 293h1v1h-1zM357 293h1v1h-1zM359 293h1v1h-1zM410 293h2v1h-2zM59 294h4v1h-4zM135 294h1v1h-1zM361 294h1v1h-1zM412 294h2v1h-2zM57 295h2v1h-2zM133 295h1v1h-1zM206 295h1v1h-1zM280 295h1v1h-1zM363 295h1v1h-1zM414 295h3v1h-3zM131 296h1v1h-1zM409 296h2v1h-2zM417 296h2v1h-2zM129 297h1v1h-1zM205 297h1v1h-1zM281 297h1v1h-1zM367 297h1v1h-1zM411 297h2v1h-2zM419 297h2v1h-2zM68 298h2v1h-2zM127 298h1v1h-1zM413 298h3v1h-3zM66 299h2v1h-2zM125 299h1v1h-1zM203 299h1v1h-1zM283 299h1v1h-1zM371 299h1v1h-1zM408 299h2v1h-2zM416 299h2v1h-2zM63 300h3v1h-3zM123 300h1v1h-1zM373 300h1v1h-1zM410 300h2v1h-2zM418 300h2v1h-2zM61 301h2v1h-2zM69 301h2v1h-2zM121 301h1v1h-1zM202 301h1v1h-1zM284 301h1v1h-1zM375 301h1v1h-1zM412 301h3v1h-3zM60 302h1v1h-1zM67 302h2v1h-2zM119 302h1v1h-1zM377 302h1v1h-1zM407 302h2v1h-2zM415 302h2v1h-2zM64 303h3v1h-3zM117 303h1v1h-1zM201 303h1v1h-1zM286 303h1v1h-1zM379 303h1v1h-1zM409 303h2v1h-2zM417 303h1v1h-1zM62 304h2v1h-2zM71 304h1v1h-1zM115 304h1v1h-1zM411 304h3v1h-3zM61 305h1v1h-1zM69 305h2v1h-2zM113 305h1v1h-1zM200 305h1v1h-1zM287 305h1v1h-1zM414 305h2v1h-2zM66 306h3v1h-3zM111 306h1v1h-1zM416 306h1v1h-1zM64 307h2v1h-2zM72 307h1v1h-1zM109 307h1v1h-1zM199 307h1v1h-1zM289 307h1v1h-1zM62 308h2v1h-2zM70 308h2v1h-2zM107 308h1v1h-1zM405 308h2v1h-2zM67 309h3v1h-3zM105 309h1v1h-1zM197 309h1v1h-1zM290 309h1v1h-1zM407 309h2v1h-2zM65 310h2v1h-2zM103 310h1v1h-1zM409 310h3v1h-3zM63 311h2v1h-2zM196 311h1v1h-1zM291 311h1v1h-1zM404 311h2v1h-2zM412 311h2v1h-2zM406 312h2v1h-2zM414 312h1v1h-1zM74 313h2v1h-2zM195 313h1v1h-1zM293 313h1v1h-1zM408 313h2v1h-2zM72 314h2v1h-2zM402 314h2v1h-2zM410 314h2v1h-2zM69 315h3v1h-3zM194 315h1v1h-1zM294 315h1v1h-1zM404 315h2v1h-2zM412 315h1v1h-1zM67 316h2v1h-2zM75 316h2v1h-2zM406 316h3v1h-3zM66 317h1v1h-1zM73 317h2v1h-2zM193 317h1v1h-1zM296 317h1v1h-1zM401 317h2v1h-2zM409 317h2v1h-2zM71 318h2v1h-2zM403 318h2v1h-2zM411 318h1v1h-1zM69 319h2v1h-2zM76 319h2v1h-2zM191 319h1v1h-1zM297 319h1v1h-1zM405 319h3v1h-3zM67 320h2v1h-2zM74 320h2v1h-2zM408 320h2v1h-2zM72 321h2v1h-2zM79 321h1v1h-1zM190 321h1v1h-1zM299 321h1v1h-1zM410 321h1v1h-1zM70 322h2v1h-2zM77 322h2v1h-2zM398 322h1v1h-1zM68 323h2v1h-2zM75 323h2v1h-2zM189 323h1v1h-1zM300 323h1v1h-1zM399 323h2v1h-2zM73 324h2v1h-2zM401 324h2v1h-2zM71 325h2v1h-2zM188 325h1v1h-1zM302 325h1v1h-1zM397 325h1v1h-1zM403 325h2v1h-2zM70 326h1v1h-1zM398 326h2v1h-2zM405 326h2v1h-2zM82 327h1v1h-1zM187 327h1v1h-1zM303 327h1v1h-1zM400 327h2v1h-2zM407 327h1v1h-1zM80 328h2v1h-2zM395 328h1v1h-1zM402 328h2v1h-2zM78 329h2v1h-2zM186 329h1v1h-1zM305 329h1v1h-1zM396 329h2v1h-2zM404 329h2v1h-2zM76 330h2v1h-2zM82 330h2v1h-2zM398 330h2v1h-2zM406 330h1v1h-1zM74 331h2v1h-2zM81 331h1v1h-1zM184 331h1v1h-1zM306 331h1v1h-1zM394 331h1v1h-1zM400 331h2v1h-2zM79 332h2v1h-2zM85 332h1v1h-1zM395 332h2v1h-2zM402 332h2v1h-2zM78 333h1v1h-1zM83 333h2v1h-2zM183 333h1v1h-1zM307 333h1v1h-1zM397 333h2v1h-2zM404 333h1v1h-1zM76 334h2v1h-2zM82 334h1v1h-1zM399 334h2v1h-2zM75 335h1v1h-1zM80 335h2v1h-2zM87 335h1v1h-1zM182 335h1v1h-1zM309 335h1v1h-1zM401 335h2v1h-2zM79 336h1v1h-1zM85 336h2v1h-2zM390 336h1v1h-1zM77 337h2v1h-2zM84 337h1v1h-1zM181 337h1v1h-1zM310 337h1v1h-1zM391 337h2v1h-2zM82 338h2v1h-2zM393 338h1v1h-1zM81 339h1v1h-1zM180 339h1v1h-1zM312 339h1v1h-1zM389 339h1v1h-1zM394 339h2v1h-2zM79 340h2v1h-2zM91 340h1v1h-1zM390 340h2v1h-2zM396 340h1v1h-1zM89 341h2v1h-2zM178 341h1v1h-1zM313 341h1v1h-1zM387 341h1v1h-1zM392 341h1v1h-1zM397 341h2v1h-2zM88 342h1v1h-1zM388 342h1v1h-1zM393 342h2v1h-2zM399 342h1v1h-1zM86 343h2v1h-2zM92 343h1v1h-1zM177 343h1v1h-1zM315 343h1v1h-1zM389 343h2v1h-2zM395 343h2v1h-2zM85 344h1v1h-1zM91 344h1v1h-1zM385 344h1v1h-1zM391 344h1v1h-1zM397 344h1v1h-1zM83 345h2v1h-2zM89 345h2v1h-2zM94 345h1v1h-1zM176 345h1v1h-1zM386 345h2v1h-2zM392 345h1v1h-1zM82 346h1v1h-1zM88 346h1v1h-1zM93 346h1v1h-1zM388 346h1v1h-1zM393 346h2v1h-2zM87 347h1v1h-1zM92 347h1v1h-1zM175 347h1v1h-1zM318 347h1v1h-1zM389 347h2v1h-2zM395 347h1v1h-1zM85 348h2v1h-2zM91 348h1v1h-1zM96 348h1v1h-1zM391 348h1v1h-1zM84 349h1v1h-1zM89 349h2v1h-2zM95 349h1v1h-1zM174 349h1v1h-1zM319 349h1v1h-1zM381 349h1v1h-1zM392 349h2v1h-2zM88 350h1v1h-1zM93 350h2v1h-2zM382 350h2v1h-2zM87 351h1v1h-1zM92 351h1v1h-1zM172 351h1v1h-1zM321 351h1v1h-1zM379 351h1v1h-1zM384 351h1v1h-1zM91 352h1v1h-1zM380 352h1v1h-1zM385 352h2v1h-2zM89 353h2v1h-2zM100 353h1v1h-1zM171 353h1v1h-1zM381 353h2v1h-2zM387 353h1v1h-1zM88 354h1v1h-1zM99 354h1v1h-1zM377 354h1v1h-1zM383 354h1v1h-1zM388 354h2v1h-2zM97 355h2v1h-2zM102 355h1v1h-1zM170 355h1v1h-1zM323 355h1v1h-1zM378 355h1v1h-1zM384 355h1v1h-1zM96 356h1v1h-1zM101 356h1v1h-1zM375 356h1v1h-1zM379 356h2v1h-2zM385 356h2v1h-2zM95 357h1v1h-1zM100 357h1v1h-1zM169 357h1v1h-1zM325 357h1v1h-1zM376 357h1v1h-1zM381 357h1v1h-1zM387 357h1v1h-1zM93 358h2v1h-2zM99 358h1v1h-1zM103 358h1v1h-1zM377 358h1v1h-1zM382 358h1v1h-1zM92 359h1v1h-1zM97 359h2v1h-2zM102 359h1v1h-1zM168 359h1v1h-1zM378 359h1v1h-1zM383 359h2v1h-2zM96 360h1v1h-1zM101 360h1v1h-1zM106 360h1v1h-1zM379 360h2v1h-2zM385 360h1v1h-1zM95 361h1v1h-1zM100 361h1v1h-1zM105 361h1v1h-1zM167 361h1v1h-1zM328 361h1v1h-1zM371 361h1v1h-1zM381 361h1v1h-1zM94 362h1v1h-1zM99 362h1v1h-1zM104 362h1v1h-1zM372 362h1v1h-1zM382 362h1v1h-1zM98 363h1v1h-1zM103 363h1v1h-1zM165 363h1v1h-1zM329 363h1v1h-1zM369 363h1v1h-1zM373 363h1v1h-1zM383 363h1v1h-1zM97 364h1v1h-1zM101 364h2v1h-2zM110 364h1v1h-1zM370 364h1v1h-1zM374 364h1v1h-1zM96 365h1v1h-1zM100 365h1v1h-1zM109 365h1v1h-1zM164 365h1v1h-1zM367 365h1v1h-1zM371 365h1v1h-1zM375 365h2v1h-2zM99 366h1v1h-1zM108 366h1v1h-1zM368 366h1v1h-1zM372 366h1v1h-1zM377 366h1v1h-1zM98 367h1v1h-1zM107 367h1v1h-1zM113 367h1v1h-1zM163 367h1v1h-1zM369 367h1v1h-1zM373 367h2v1h-2zM378 367h1v1h-1zM106 368h1v1h-1zM112 368h1v1h-1zM364 368h1v1h-1zM370 368h1v1h-1zM375 368h1v1h-1zM379 368h1v1h-1zM106 369h1v1h-1zM111 369h1v1h-1zM115 369h1v1h-1zM162 369h1v1h-1zM365 369h1v1h-1zM371 369h1v1h-1zM376 369h1v1h-1zM105 370h1v1h-1zM110 370h1v1h-1zM114 370h1v1h-1zM366 370h1v1h-1zM371 370h1v1h-1zM377 370h1v1h-1zM104 371h1v1h-1zM108 371h2v1h-2zM113 371h1v1h-1zM117 371h1v1h-1zM161 371h1v1h-1zM367 371h1v1h-1zM372 371h1v1h-1zM103 372h1v1h-1zM107 372h1v1h-1zM112 372h1v1h-1zM116 372h1v1h-1zM360 372h1v1h-1zM368 372h2v1h-2zM373 372h1v1h-1zM106 373h1v1h-1zM111 373h1v1h-1zM115 373h1v1h-1zM361 373h1v1h-1zM370 373h1v1h-1zM374 373h1v1h-1zM105 374h1v1h-1zM111 374h1v1h-1zM114 374h1v1h-1zM362 374h1v1h-1zM371 374h1v1h-1zM110 375h1v1h-1zM113 375h1v1h-1zM122 375h1v1h-1zM358 375h1v1h-1zM363 375h1v1h-1zM372 375h1v1h-1zM109 376h1v1h-1zM113 376h1v1h-1zM121 376h1v1h-1zM355 376h1v1h-1zM359 376h1v1h-1zM364 376h1v1h-1zM108 377h1v1h-1zM112 377h1v1h-1zM120 377h1v1h-1zM124 377h1v1h-1zM356 377h1v1h-1zM360 377h1v1h-1zM364 377h1v1h-1zM111 378h1v1h-1zM119 378h1v1h-1zM123 378h1v1h-1zM353 378h1v1h-1zM357 378h1v1h-1zM361 378h1v1h-1zM365 378h1v1h-1zM110 379h1v1h-1zM118 379h1v1h-1zM122 379h1v1h-1zM127 379h1v1h-1zM354 379h1v1h-1zM358 379h1v1h-1zM362 379h1v1h-1zM366 379h1v1h-1zM118 380h1v1h-1zM122 380h1v1h-1zM126 380h1v1h-1zM355 380h1v1h-1zM359 380h1v1h-1zM363 380h1v1h-1zM367 380h1v1h-1zM117 381h1v1h-1zM121 381h1v1h-1zM125 381h1v1h-1zM129 381h1v1h-1zM355 381h1v1h-1zM359 381h1v1h-1zM364 381h1v1h-1zM116 382h1v1h-1zM120 382h1v1h-1zM125 382h1v1h-1zM128 382h1v1h-1zM348 382h1v1h-1zM356 382h1v1h-1zM360 382h1v1h-1zM365 382h1v1h-1zM115 383h1v1h-1zM119 383h1v1h-1zM124 383h1v1h-1zM128 383h1v1h-1zM349 383h1v1h-1zM357 383h1v1h-1zM361 383h1v1h-1zM119 384h1v1h-1zM123 384h1v1h-1zM127 384h1v1h-1zM345 384h1v1h-1zM350 384h1v1h-1zM358 384h1v1h-1zM362 384h1v1h-1zM118 385h1v1h-1zM122 385h1v1h-1zM126 385h1v1h-1zM134 385h1v1h-1zM346 385h1v1h-1zM350 385h1v1h-1zM358 385h1v1h-1zM122 386h1v1h-1zM126 386h1v1h-1zM133 386h1v1h-1zM343 386h1v1h-1zM347 386h1v1h-1zM351 386h1v1h-1zM359 386h1v1h-1zM121 387h1v1h-1zM125 387h1v1h-1zM133 387h1v1h-1zM137 387h1v1h-1zM340 387h1v1h-1zM344 387h1v1h-1zM348 387h1v1h-1zM352 387h1v1h-1zM124 388h1v1h-1zM132 388h1v1h-1zM136 388h1v1h-1zM341 388h1v1h-1zM345 388h1v1h-1zM349 388h1v1h-1zM353 388h1v1h-1zM124 389h1v1h-1zM131 389h1v1h-1zM135 389h1v1h-1zM139 389h1v1h-1zM341 389h1v1h-1zM345 389h1v1h-1zM349 389h1v1h-1zM353 389h1v1h-1zM131 390h1v1h-1zM135 390h1v1h-1zM138 390h1v1h-1zM142 390h1v1h-1zM342 390h1v1h-1zM346 390h1v1h-1zM350 390h1v1h-1zM354 390h1v1h-1zM130 391h1v1h-1zM134 391h1v1h-1zM138 391h1v1h-1zM141 391h1v1h-1zM335 391h1v1h-1zM343 391h1v1h-1zM347 391h1v1h-1zM351 391h1v1h-1zM129 392h1v1h-1zM133 392h1v1h-1zM137 392h1v1h-1zM141 392h1v1h-1zM336 392h1v1h-1zM343 392h1v1h-1zM348 392h1v1h-1zM129 393h1v1h-1zM132 393h1v1h-1zM136 393h1v1h-1zM140 393h1v1h-1zM332 393h1v1h-1zM336 393h1v1h-1zM344 393h1v1h-1zM348 393h1v1h-1zM132 394h1v1h-1zM136 394h1v1h-1zM139 394h1v1h-1zM147 394h1v1h-1zM333 394h1v1h-1zM337 394h1v1h-1zM345 394h1v1h-1zM349 394h1v1h-1zM131 395h1v1h-1zM135 395h1v1h-1zM139 395h1v1h-1zM146 395h1v1h-1zM150 395h1v1h-1zM330 395h1v1h-1zM333 395h1v1h-1zM338 395h1v1h-1zM345 395h1v1h-1zM135 396h1v1h-1zM138 396h1v1h-1zM146 396h1v1h-1zM149 396h1v1h-1zM327 396h1v1h-1zM330 396h1v1h-1zM334 396h1v1h-1zM338 396h1v1h-1zM346 396h1v1h-1zM134 397h1v1h-1zM137 397h1v1h-1zM145 397h1v1h-1zM149 397h1v1h-1zM153 397h1v1h-1zM328 397h1v1h-1zM331 397h1v1h-1zM335 397h1v1h-1zM339 397h1v1h-1zM137 398h1v1h-1zM145 398h1v1h-1zM148 398h1v1h-1zM152 398h1v1h-1zM156 398h1v1h-1zM328 398h1v1h-1zM332 398h1v1h-1zM335 398h1v1h-1zM340 398h1v1h-1zM136 399h1v1h-1zM144 399h1v1h-1zM148 399h1v1h-1zM152 399h1v1h-1zM155 399h1v1h-1zM321 399h1v1h-1zM329 399h1v1h-1zM332 399h1v1h-1zM336 399h1v1h-1zM340 399h1v1h-1zM144 400h1v1h-1zM147 400h1v1h-1zM151 400h1v1h-1zM155 400h1v1h-1zM322 400h1v1h-1zM329 400h1v1h-1zM333 400h1v1h-1zM337 400h1v1h-1zM143 401h1v1h-1zM147 401h1v1h-1zM151 401h1v1h-1zM154 401h1v1h-1zM161 401h1v1h-1zM319 401h1v1h-1zM322 401h1v1h-1zM330 401h1v1h-1zM334 401h1v1h-1zM337 401h1v1h-1zM143 402h1v1h-1zM146 402h1v1h-1zM150 402h1v1h-1zM154 402h1v1h-1zM161 402h1v1h-1zM164 402h1v1h-1zM316 402h1v1h-1zM319 402h1v1h-1zM323 402h1v1h-1zM330 402h1v1h-1zM334 402h1v1h-1zM146 403h1v1h-1zM150 403h1v1h-1zM153 403h1v1h-1zM160 403h1v1h-1zM164 403h1v1h-1zM313 403h1v1h-1zM316 403h1v1h-1zM320 403h1v1h-1zM323 403h1v1h-1zM331 403h1v1h-1zM335 403h1v1h-1zM145 404h1v1h-1zM149 404h1v1h-1zM153 404h1v1h-1zM160 404h1v1h-1zM163 404h1v1h-1zM167 404h1v1h-1zM313 404h1v1h-1zM317 404h1v1h-1zM320 404h1v1h-1zM324 404h1v1h-1zM331 404h1v1h-1zM149 405h1v1h-1zM152 405h1v1h-1zM159 405h1v1h-1zM163 405h1v1h-1zM167 405h1v1h-1zM170 405h1v1h-1zM314 405h1v1h-1zM317 405h1v1h-1zM321 405h1v1h-1zM324 405h1v1h-1zM148 406h1v1h-1zM152 406h1v1h-1zM159 406h1v1h-1zM162 406h1v1h-1zM166 406h1v1h-1zM170 406h1v1h-1zM307 406h1v1h-1zM314 406h1v1h-1zM318 406h1v1h-1zM321 406h1v1h-1zM325 406h1v1h-1zM151 407h1v1h-1zM159 407h1v1h-1zM162 407h1v1h-1zM166 407h1v1h-1zM169 407h1v1h-1zM176 407h1v1h-1zM304 407h1v1h-1zM308 407h1v1h-1zM315 407h1v1h-1zM318 407h1v1h-1zM322 407h1v1h-1zM325 407h1v1h-1zM158 408h1v1h-1zM162 408h1v1h-1zM165 408h1v1h-1zM169 408h1v1h-1zM176 408h1v1h-1zM179 408h1v1h-1zM301 408h1v1h-1zM305 408h1v1h-1zM308 408h1v1h-1zM315 408h1v1h-1zM319 408h1v1h-1zM322 408h1v1h-1zM326 408h1v1h-1zM158 409h1v1h-1zM161 409h1v1h-1zM165 409h1v1h-1zM168 409h1v1h-1zM175 409h1v1h-1zM179 409h1v1h-1zM182 409h1v1h-1zM298 409h1v1h-1zM301 409h1v1h-1zM305 409h1v1h-1zM309 409h1v1h-1zM315 409h1v1h-1zM319 409h1v1h-1zM323 409h1v1h-1zM157 410h1v1h-1zM161 410h1v1h-1zM164 410h1v1h-1zM168 410h1v1h-1zM175 410h1v1h-1zM178 410h1v1h-1zM182 410h1v1h-1zM185 410h1v1h-1zM298 410h1v1h-1zM302 410h1v1h-1zM306 410h1v1h-1zM309 410h1v1h-1zM316 410h1v1h-1zM320 410h1v1h-1zM323 410h1v1h-1zM160 411h1v1h-1zM164 411h1v1h-1zM168 411h1v1h-1zM174 411h1v1h-1zM178 411h1v1h-1zM181 411h1v1h-1zM185 411h1v1h-1zM292 411h1v1h-1zM299 411h1v1h-1zM302 411h1v1h-1zM306 411h1v1h-1zM309 411h1v1h-1zM316 411h1v1h-1zM320 411h1v1h-1zM163 412h1v1h-1zM167 412h1v1h-1zM174 412h1v1h-1zM177 412h1v1h-1zM181 412h1v1h-1zM184 412h1v1h-1zM191 412h1v1h-1zM289 412h1v1h-1zM292 412h1v1h-1zM299 412h1v1h-1zM303 412h1v1h-1zM306 412h1v1h-1zM310 412h1v1h-1zM317 412h1v1h-1zM167 413h1v1h-1zM174 413h1v1h-1zM177 413h1v1h-1zM180 413h1v1h-1zM184 413h1v1h-1zM191 413h1v1h-1zM194 413h1v1h-1zM286 413h1v1h-1zM289 413h1v1h-1zM293 413h1v1h-1zM300 413h1v1h-1zM303 413h1v1h-1zM307 413h1v1h-1zM310 413h1v1h-1zM166 414h1v1h-1zM173 414h1v1h-1zM177 414h1v1h-1zM180 414h1v1h-1zM183 414h1v1h-1zM190 414h1v1h-1zM194 414h1v1h-1zM197 414h1v1h-1zM283 414h1v1h-1zM287 414h1v1h-1zM290 414h1v1h-1zM293 414h1v1h-1zM300 414h1v1h-1zM303 414h1v1h-1zM307 414h1v1h-1zM311 414h1v1h-1zM173 415h1v1h-1zM176 415h1v1h-1zM180 415h1v1h-1zM183 415h1v1h-1zM190 415h1v1h-1zM193 415h1v1h-1zM197 415h1v1h-1zM200 415h1v1h-1zM274 415h1v1h-1zM277 415h1v1h-1zM284 415h1v1h-1zM287 415h1v1h-1zM290 415h1v1h-1zM293 415h1v1h-1zM300 415h1v1h-1zM304 415h1v1h-1zM308 415h1v1h-1zM311 415h1v1h-1zM172 416h1v1h-1zM176 416h1v1h-1zM179 416h1v1h-1zM183 416h1v1h-1zM190 416h1v1h-1zM193 416h1v1h-1zM196 416h1v1h-1zM200 416h1v1h-1zM206 416h1v1h-1zM209 416h1v1h-1zM268 416h1v1h-1zM271 416h1v1h-1zM274 416h1v1h-1zM277 416h1v1h-1zM284 416h1v1h-1zM287 416h1v1h-1zM290 416h1v1h-1zM294 416h1v1h-1zM301 416h1v1h-1zM304 416h1v1h-1zM308 416h1v1h-1zM175 417h1v1h-1zM179 417h1v1h-1zM182 417h1v1h-1zM189 417h1v1h-1zM193 417h1v1h-1zM196 417h1v1h-1zM199 417h1v1h-1zM206 417h1v1h-1zM209 417h1v1h-1zM212 417h1v1h-1zM215 417h1v1h-1zM261 417h1v1h-1zM268 417h1v1h-1zM271 417h1v1h-1zM274 417h1v1h-1zM277 417h1v1h-1zM284 417h1v1h-1zM287 417h1v1h-1zM291 417h1v1h-1zM294 417h1v1h-1zM301 417h1v1h-1zM305 417h1v1h-1zM178 418h1v1h-1zM182 418h1v1h-1zM189 418h1v1h-1zM192 418h1v1h-1zM196 418h1v1h-1zM199 418h1v1h-1zM206 418h1v1h-1zM209 418h1v1h-1zM212 418h1v1h-1zM215 418h1v1h-1zM222 418h1v1h-1zM255 418h1v1h-1zM258 418h1v1h-1zM261 418h1v1h-1zM268 418h1v1h-1zM271 418h1v1h-1zM275 418h1v1h-1zM278 418h1v1h-1zM284 418h1v1h-1zM288 418h1v1h-1zM291 418h1v1h-1zM294 418h1v1h-1zM302 418h1v1h-1zM178 419h1v1h-1zM181 419h1v1h-1zM189 419h1v1h-1zM192 419h1v1h-1zM195 419h1v1h-1zM199 419h1v1h-1zM205 419h1v1h-1zM208 419h1v1h-1zM212 419h1v1h-1zM215 419h1v1h-1zM222 419h1v1h-1zM225 419h1v1h-1zM228 419h1v1h-1zM231 419h1v1h-1zM237 419h1v1h-1zM239 419h1v1h-1zM243 419h1v1h-1zM246 419h1v1h-1zM252 419h1v1h-1zM255 419h1v1h-1zM258 419h1v1h-1zM261 419h1v1h-1zM268 419h1v1h-1zM272 419h1v1h-1zM275 419h1v1h-1zM278 419h1v1h-1zM285 419h1v1h-1zM288 419h1v1h-1zM291 419h1v1h-1zM294 419h1v1h-1zM181 420h1v1h-1zM189 420h1v1h-1zM192 420h1v1h-1zM195 420h1v1h-1zM199 420h1v1h-1zM205 420h1v1h-1zM208 420h1v1h-1zM212 420h1v1h-1zM215 420h1v1h-1zM222 420h1v1h-1zM225 420h1v1h-1zM228 420h1v1h-1zM231 420h1v1h-1zM237 420h1v1h-1zM239 420h1v1h-1zM243 420h1v1h-1zM246 420h1v1h-1zM252 420h1v1h-1zM255 420h1v1h-1zM258 420h1v1h-1zM262 420h1v1h-1zM268 420h1v1h-1zM272 420h1v1h-1zM275 420h1v1h-1zM278 420h1v1h-1zM285 420h1v1h-1zM288 420h1v1h-1zM291 420h1v1h-1zM295 420h1v1h-1zM188 421h1v1h-1zM192 421h1v1h-1zM195 421h1v1h-1zM199 421h1v1h-1zM205 421h1v1h-1zM208 421h1v1h-1zM212 421h1v1h-1zM215 421h1v1h-1zM222 421h1v1h-1zM225 421h1v1h-1zM228 421h1v1h-1zM231 421h1v1h-1zM237 421h1v1h-1zM239 421h1v1h-1zM243 421h1v1h-1zM246 421h1v1h-1zM252 421h1v1h-1zM255 421h1v1h-1zM258 421h1v1h-1zM262 421h1v1h-1zM268 421h1v1h-1zM272 421h1v1h-1zM275 421h1v1h-1zM278 421h1v1h-1zM285 421h1v1h-1zM288 421h1v1h-1zM292 421h1v1h-1zM295 421h1v1h-1zM188 422h1v1h-1zM191 422h1v1h-1zM195 422h1v1h-1zM199 422h1v1h-1zM205 422h1v1h-1zM208 422h1v1h-1zM211 422h1v1h-1zM215 422h1v1h-1zM222 422h1v1h-1zM225 422h1v1h-1zM228 422h1v1h-1zM231 422h1v1h-1zM237 422h1v1h-1zM239 422h1v1h-1zM243 422h1v1h-1zM246 422h1v1h-1zM252 422h1v1h-1zM255 422h1v1h-1zM258 422h1v1h-1zM262 422h1v1h-1zM269 422h1v1h-1zM272 422h1v1h-1zM275 422h1v1h-1zM278 422h1v1h-1zM285 422h1v1h-1zM289 422h1v1h-1zM292 422h1v1h-1zM191 423h1v1h-1zM194 423h1v1h-1zM198 423h1v1h-1zM205 423h1v1h-1zM208 423h1v1h-1zM211 423h1v1h-1zM214 423h1v1h-1zM222 423h1v1h-1zM225 423h1v1h-1zM228 423h1v1h-1zM231 423h1v1h-1zM237 423h1v1h-1zM239 423h1v1h-1zM243 423h1v1h-1zM246 423h1v1h-1zM252 423h1v1h-1zM255 423h1v1h-1zM259 423h1v1h-1zM262 423h1v1h-1zM269 423h1v1h-1zM272 423h1v1h-1zM275 423h1v1h-1zM279 423h1v1h-1zM286 423h1v1h-1zM198 424h1v1h-1zM204 424h1v1h-1zM208 424h1v1h-1zM211 424h1v1h-1zM214 424h1v1h-1zM221 424h1v1h-1zM224 424h1v1h-1zM227 424h1v1h-1zM231 424h1v1h-1zM237 424h1v1h-1zM239 424h1v1h-1zM243 424h1v1h-1zM246 424h1v1h-1zM253 424h1v1h-1zM256 424h1v1h-1zM259 424h1v1h-1zM262 424h1v1h-1zM269 424h1v1h-1zM273 424h1v1h-1zM276 424h1v1h-1zM279 424h1v1h-1zM204 425h1v1h-1zM207 425h1v1h-1zM211 425h1v1h-1zM214 425h1v1h-1zM221 425h1v1h-1zM224 425h1v1h-1zM227 425h1v1h-1zM231 425h1v1h-1zM237 425h1v1h-1zM239 425h1v1h-1zM243 425h1v1h-1zM246 425h1v1h-1zM253 425h1v1h-1zM256 425h1v1h-1zM259 425h1v1h-1zM262 425h1v1h-1zM269 425h1v1h-1zM273 425h1v1h-1zM276 425h1v1h-1zM279 425h1v1h-1zM204 426h1v1h-1zM207 426h1v1h-1zM211 426h1v1h-1zM214 426h1v1h-1zM221 426h1v1h-1zM224 426h1v1h-1zM227 426h1v1h-1zM231 426h1v1h-1zM237 426h1v1h-1zM239 426h1v1h-1zM243 426h1v1h-1zM246 426h1v1h-1zM253 426h1v1h-1zM256 426h1v1h-1zM259 426h1v1h-1zM263 426h1v1h-1zM269 426h1v1h-1zM273 426h1v1h-1zM211 427h1v1h-1zM214 427h1v1h-1zM221 427h1v1h-1zM224 427h1v1h-1zM227 427h1v1h-1zM231 427h1v1h-1zM237 427h1v1h-1zM239 427h1v1h-1zM243 427h1v1h-1zM246 427h1v1h-1zM253 427h1v1h-1zM256 427h1v1h-1zM259 427h1v1h-1zM263 427h1v1h-1zM221 428h1v1h-1zM224 428h1v1h-1zM227 428h1v1h-1zM231 428h1v1h-1zM237 428h1v1h-1zM239 428h1v1h-1zM243 428h1v1h-1zM246 428h1v1h-1zM253 428h1v1h-1zM256 428h1v1h-1zM259 428h1v1h-1zM224 429h1v1h-1zM227 429h1v1h-1zM231 429h1v1h-1zM237 429h1v1h-1zM239 429h1v1h-1zM243 429h1v1h-1zM246 429h1v1h-1zM253 429h1v1h-1z"/>
<path fill="#ff0000" d="M181 33h3v1h-3zM179 34h2v1h-2zM184 34h2v1h-2zM179 35h1v1h-1zM185 35h1v1h-1zM178 36h1v1h-1zM186 36h1v1h-1zM178 37h1v1h-1zM182 37h1v1h-1zM186 37h1v1h-1zM154 38h5v1h-5zM178 38h1v1h-1zM186 38h1v1h-1zM153 39h1v1h-1zM159 39h1v1h-1zM179 39h1v1h-1zM185 39h1v1h-1zM152 40h1v1h-1zM160 40h1v1h-1zM179 40h2v1h-2zM184 40h2v1h-2zM151 41h1v1h-1zM161 41h1v1h-1zM181 41h3v1h-3zM150 42h1v1h-1zM162 42h1v1h-1zM150 43h1v1h-1zM162 43h1v1h-1zM150 44h1v1h-1zM162 44h1v1h-1zM150 45h1v1h-1zM162 45h1v1h-1zM150 46h1v1h-1zM162 46h1v1h-1zM151 47h1v1h-1zM161 47h1v1h-1zM152 48h1v1h-1zM160 48h1v1h-1zM152 49h1v1h-1zM160 49h1v1h-1zM148 50h1v1h-1zM152 50h1v1h-1zM160 50h1v1h-1zM149 51h1v1h-1zM151 51h1v1h-1zM161 51h1v1h-1zM150 52h1v1h-1zM162 52h1v1h-1zM163 53h1v1h-1zM164 54h1v1h-1zM305 80h1v1h-1zM299 81h2v1h-2zM304 81h1v1h-1zM301 82h1v1h-1zM304 82h1v1h-1zM301 83h1v1h-1zM304 83h1v1h-1zM300 84h1v1h-1zM304 84h1v1h-1zM300 85h1v1h-1zM304 85h1v1h-1zM299 86h1v1h-1zM304 86h1v1h-1zM299 87h8v1h-8zM256 88h1v1h-1zM304 88h1v1h-1zM255 89h1v1h-1zM245 90h3v1h-3zM254 90h1v1h-1zM248 91h1v1h-1zM254 91h1v1h-1zM248 92h1v1h-1zM254 92h1v1h-1zM248 93h1v1h-1zM254 93h1v1h-1zM248 94h1v1h-1zM254 94h1v1h-1zM247 95h1v1h-1zM254 95h1v1h-1zM247 96h1v1h-1zM254 96h1v1h-1zM246 97h1v1h-1zM254 97h1v1h-1zM246 98h1v1h-1zM254 98h1v1h-1zM245 99h1v1h-1zM254 99h1v1h-1zM245 100h1v1h-1zM254 100h1v1h-1zM244 101h1v1h-1zM254 101h1v1h-1zM244 102h15v1h-15zM254 103h1v1h-1zM254 104h1v1h-1zM248 119h1v1h-1zM247 120h3v1h-3zM248 121h1v1h-1zM627 138h3v1h-3zM626 139h1v1h-1zM630 139h1v1h-1zM626 140h1v1h-1zM630 140h1v1h-1zM624 141h4v1h-4zM629 141h4v1h-4zM624 143h9v1h-9zM332 174h1v1h-1zM626 176h1v1h-1zM629 176h1v1h-1zM632 176h1v1h-1zM625 177h2v1h-2zM628 177h2v1h-2zM631 177h1v1h-1zM331 178h1v1h-1zM625 178h1v1h-1zM627 178h2v1h-2zM630 178h2v1h-2zM624 179h1v1h-1zM627 179h1v1h-1zM630 179h1v1h-1zM626 181h1v1h-1zM629 181h1v1h-1zM632 181h1v1h-1zM330 182h1v1h-1zM625 182h2v1h-2zM628 182h2v1h-2zM631 182h1v1h-1zM625 183h1v1h-1zM627 183h2v1h-2zM630 183h2v1h-2zM624 184h1v1h-1zM627 184h1v1h-1zM630 184h1v1h-1zM329 186h1v1h-1zM328 190h1v1h-1zM327 194h1v1h-1zM326 198h1v1h-1zM325 202h1v1h-1zM325 206h1v1h-1zM324 210h1v1h-1zM323 214h1v1h-1zM625 216h1v1h-1zM632 216h1v1h-1zM626 217h6v1h-6zM322 218h1v1h-1zM627 218h1v1h-1zM630 218h1v1h-1zM627 219h1v1h-1zM630 219h1v1h-1zM627 220h1v1h-1zM630 220h1v1h-1zM627 221h1v1h-1zM630 221h1v1h-1zM321 222h1v1h-1zM627 222h1v1h-1zM630 222h1v1h-1zM626 223h2v1h-2zM629 223h3v1h-3zM625 224h1v1h-1zM632 224h1v1h-1zM320 226h1v1h-1zM319 230h1v1h-1zM319 234h1v1h-1zM318 238h1v1h-1zM317 242h1v1h-1zM316 246h1v1h-1zM315 250h1v1h-1zM314 254h1v1h-1zM74 255h3v1h-3zM441 255h3v1h-3zM451 255h3v1h-3zM75 256h2v1h-2zM440 256h1v1h-1zM444 256h1v1h-1zM450 256h1v1h-1zM454 256h1v1h-1zM74 257h1v1h-1zM76 257h1v1h-1zM439 257h1v1h-1zM445 257h1v1h-1zM449 257h1v1h-1zM455 257h1v1h-1zM70 258h2v1h-2zM73 258h1v1h-1zM313 258h1v1h-1zM439 258h1v1h-1zM445 258h1v1h-1zM449 258h1v1h-1zM455 258h1v1h-1zM69 259h1v1h-1zM72 259h1v1h-1zM439 259h1v1h-1zM445 259h1v1h-1zM449 259h1v1h-1zM455 259h1v1h-1zM68 260h1v1h-1zM73 260h1v1h-1zM440 260h1v1h-1zM446 260h1v1h-1zM448 260h1v1h-1zM454 260h1v1h-1zM68 261h1v1h-1zM73 261h1v1h-1zM441 261h1v1h-1zM446 261h1v1h-1zM448 261h1v1h-1zM453 261h1v1h-1zM69 262h1v1h-1zM72 262h1v1h-1zM312 262h1v1h-1zM446 262h1v1h-1zM448 262h1v1h-1zM70 263h2v1h-2zM446 263h1v1h-1zM448 263h1v1h-1zM447 264h1v1h-1zM447 265h1v1h-1zM312 266h1v1h-1zM447 266h1v1h-1zM627 266h3v1h-3zM447 267h1v1h-1zM625 267h2v1h-2zM630 267h2v1h-2zM447 268h1v1h-1zM625 268h1v1h-1zM631 268h1v1h-1zM447 269h1v1h-1zM624 269h1v1h-1zM632 269h1v1h-1zM311 270h1v1h-1zM447 270h1v1h-1zM624 270h1v1h-1zM628 270h1v1h-1zM632 270h1v1h-1zM447 271h1v1h-1zM624 271h1v1h-1zM632 271h1v1h-1zM625 272h1v1h-1zM631 272h1v1h-1zM625 273h2v1h-2zM630 273h2v1h-2zM310 274h1v1h-1zM627 274h3v1h-3zM309 278h1v1h-1zM308 282h1v1h-1zM307 286h1v1h-1zM444 286h3v1h-3zM445 287h2v1h-2zM444 288h1v1h-1zM446 288h1v1h-1zM440 289h2v1h-2zM443 289h1v1h-1zM306 290h1v1h-1zM439 290h1v1h-1zM442 290h1v1h-1zM438 291h1v1h-1zM443 291h1v1h-1zM438 292h1v1h-1zM443 292h1v1h-1zM439 293h1v1h-1zM442 293h1v1h-1zM306 294h1v1h-1zM440 294h2v1h-2zM305 298h1v1h-1zM304 302h1v1h-1zM303 306h1v1h-1zM630 306h3v1h-3zM631 307h2v1h-2zM630 308h1v1h-1zM632 308h1v1h-1zM626 309h2v1h-2zM629 309h1v1h-1zM302 310h1v1h-1zM625 310h1v1h-1zM628 310h1v1h-1zM624 311h1v1h-1zM629 311h1v1h-1zM624 312h1v1h-1zM629 312h1v1h-1zM625 313h1v1h-1zM628 313h1v1h-1zM301 314h1v1h-1zM626 314h2v1h-2zM631 316h1v1h-1zM625 317h2v1h-2zM630 317h1v1h-1zM300 318h1v1h-1zM627 318h1v1h-1zM630 318h1v1h-1zM627 319h1v1h-1zM630 319h1v1h-1zM626 320h1v1h-1zM630 320h1v1h-1zM626 321h1v1h-1zM630 321h1v1h-1zM299 322h1v1h-1zM625 322h1v1h-1zM630 322h1v1h-1zM625 323h8v1h-8zM630 324h1v1h-1zM299 326h1v1h-1zM298 330h1v1h-1zM297 334h1v1h-1zM283 349h1v1h-1zM282 350h3v1h-3zM283 351h1v1h-1zM272 353h1v1h-1zM271 354h3v1h-3zM272 355h1v1h-1zM353 357h3v1h-3zM351 358h2v1h-2zM356 358h2v1h-2zM351 359h1v1h-1zM357 359h1v1h-1zM350 360h1v1h-1zM358 360h1v1h-1zM350 361h1v1h-1zM354 361h1v1h-1zM358 361h1v1h-1zM350 362h1v1h-1zM358 362h1v1h-1zM351 363h1v1h-1zM357 363h1v1h-1zM291 364h5v1h-5zM351 364h2v1h-2zM356 364h2v1h-2zM289 365h2v1h-2zM296 365h2v1h-2zM353 365h3v1h-3zM288 366h1v1h-1zM298 366h1v1h-1zM287 367h1v1h-1zM299 367h1v1h-1zM286 368h1v1h-1zM300 368h1v1h-1zM286 369h1v1h-1zM300 369h1v1h-1zM278 370h6v1h-6zM285 370h1v1h-1zM301 370h1v1h-1zM282 371h2v1h-2zM285 371h1v1h-1zM301 371h1v1h-1zM281 372h1v1h-1zM283 372h1v1h-1zM285 372h1v1h-1zM293 372h1v1h-1zM301 372h1v1h-1zM280 373h1v1h-1zM283 373h1v1h-1zM285 373h1v1h-1zM301 373h1v1h-1zM279 374h1v1h-1zM283 374h1v1h-1zM285 374h1v1h-1zM301 374h1v1h-1zM278 375h1v1h-1zM283 375h1v1h-1zM286 375h1v1h-1zM300 375h1v1h-1zM270 376h5v1h-5zM277 376h1v1h-1zM286 376h1v1h-1zM300 376h1v1h-1zM269 377h1v1h-1zM275 377h2v1h-2zM287 377h1v1h-1zM299 377h1v1h-1zM268 378h1v1h-1zM276 378h1v1h-1zM288 378h1v1h-1zM298 378h1v1h-1zM267 379h1v1h-1zM277 379h1v1h-1zM289 379h2v1h-2zM296 379h2v1h-2zM267 380h1v1h-1zM277 380h1v1h-1zM291 380h5v1h-5zM267 381h1v1h-1zM277 381h1v1h-1zM267 382h1v1h-1zM277 382h1v1h-1zM267 383h1v1h-1zM277 383h1v1h-1zM268 384h1v1h-1zM276 384h1v1h-1zM96 385h1v1h-1zM269 385h1v1h-1zM275 385h1v1h-1zM90 386h2v1h-2zM95 386h1v1h-1zM270 386h5v1h-5zM92 387h1v1h-1zM95 387h1v1h-1zM92 388h1v1h-1zM95 388h1v1h-1zM91 389h1v1h-1zM95 389h1v1h-1zM91 390h1v1h-1zM95 390h1v1h-1zM90 391h1v1h-1zM95 391h1v1h-1zM90 392h8v1h-8zM95 393h1v1h-1zM118 399h5v1h-5zM121 400h2v1h-2zM120 401h1v1h-1zM122 401h1v1h-1zM119 402h1v1h-1zM122 402h1v1h-1zM118 403h1v1h-1zM122 403h1v1h-1zM117 404h1v1h-1zM108 405h1v1h-1zM116 405h1v1h-1zM109 406h1v1h-1zM115 406h1v1h-1zM110 407h1v1h-1zM114 407h1v1h-1zM111 408h1v1h-1zM113 408h1v1h-1zM112 409h1v1h-1zM111 410h1v1h-1zM113 410h1v1h-1zM110 411h1v1h-1zM114 411h1v1h-1zM109 412h1v1h-1zM115 412h1v1h-1zM108 413h1v1h-1zM116 413h1v1h-1zM107 414h1v1h-1zM106 415h1v1h-1z"/>
<path fill="#ffff00" d="M205 71h1v1h-1zM203 72h5v1h-5zM205 73h1v1h-1zM205 74h1v1h-1zM207 74h2v1h-2zM205 75h2v1h-2zM209 75h1v1h-1zM205 76h1v1h-1zM209 76h1v1h-1zM205 77h1v1h-1zM208 77h1v1h-1zM205 78h1v1h-1zM208 78h1v1h-1zM209 79h1v1h-1zM63 106h1v1h-1zM67 106h1v1h-1zM71 106h1v1h-1zM64 107h1v1h-1zM66 107h1v1h-1zM68 107h1v1h-1zM70 107h1v1h-1zM72 107h1v1h-1zM65 108h1v1h-1zM69 108h1v1h-1zM73 108h1v1h-1zM77 108h1v1h-1zM65 109h1v1h-1zM69 109h1v1h-1zM73 109h1v1h-1zM76 109h2v1h-2zM65 110h1v1h-1zM69 110h1v1h-1zM73 110h1v1h-1zM75 110h1v1h-1zM77 110h1v1h-1zM65 111h1v1h-1zM69 111h1v1h-1zM73 111h2v1h-2zM77 111h1v1h-1zM65 112h1v1h-1zM69 112h1v1h-1zM73 112h1v1h-1zM77 112h1v1h-1zM65 113h1v1h-1zM69 113h1v1h-1zM73 113h1v1h-1zM77 113h1v1h-1zM65 114h1v1h-1zM69 114h1v1h-1zM73 114h1v1h-1zM77 114h1v1h-1zM65 115h1v1h-1zM69 115h1v1h-1zM73 115h1v1h-1zM77 115h1v1h-1zM65 116h1v1h-1zM69 116h1v1h-1zM73 116h1v1h-1zM77 116h1v1h-1zM65 117h1v1h-1zM69 117h1v1h-1zM73 117h1v1h-1zM77 117h1v1h-1zM65 118h1v1h-1zM69 118h1v1h-1zM73 118h1v1h-1zM77 118h1v1h-1zM65 119h1v1h-1zM69 119h1v1h-1zM74 119h1v1h-1zM76 119h1v1h-1zM65 120h1v1h-1zM69 120h1v1h-1zM75 120h1v1h-1zM74 121h1v1h-1zM76 121h1v1h-1zM73 122h1v1h-1zM77 122h1v1h-1zM624 146h1v1h-1zM626 146h1v1h-1zM628 146h1v1h-1zM625 147h1v1h-1zM627 147h1v1h-1zM629 147h1v1h-1zM426 148h1v1h-1zM438 148h1v1h-1zM625 148h1v1h-1zM627 148h1v1h-1zM629 148h1v1h-1zM427 149h1v1h-1zM437 149h1v1h-1zM625 149h1v1h-1zM627 149h1v1h-1zM629 149h1v1h-1zM427 150h1v1h-1zM437 150h1v1h-1zM625 150h1v1h-1zM627 150h1v1h-1zM629 150h1v1h-1zM428 151h2v1h-2zM435 151h2v1h-2zM625 151h1v1h-1zM627 151h1v1h-1zM629 151h1v1h-1zM430 152h5v1h-5zM625 152h1v1h-1zM627 152h1v1h-1zM629 152h1v1h-1zM632 152h1v1h-1zM429 153h1v1h-1zM435 153h1v1h-1zM625 153h1v1h-1zM627 153h1v1h-1zM629 153h1v1h-1zM632 153h1v1h-1zM428 154h1v1h-1zM436 154h1v1h-1zM630 154h2v1h-2zM427 155h1v1h-1zM437 155h1v1h-1zM426 156h1v1h-1zM438 156h1v1h-1zM426 157h1v1h-1zM438 157h1v1h-1zM426 158h1v1h-1zM438 158h1v1h-1zM426 159h1v1h-1zM438 159h1v1h-1zM426 160h1v1h-1zM438 160h1v1h-1zM427 161h1v1h-1zM437 161h1v1h-1zM428 162h1v1h-1zM436 162h1v1h-1zM429 163h1v1h-1zM435 163h1v1h-1zM430 164h5v1h-5zM440 178h3v1h-3zM439 179h1v1h-1zM443 179h1v1h-1zM439 180h1v1h-1zM443 180h1v1h-1zM439 181h1v1h-1zM443 181h1v1h-1zM440 182h3v1h-3zM441 183h1v1h-1zM35 184h3v1h-3zM439 184h5v1h-5zM34 185h1v1h-1zM38 185h1v1h-1zM441 185h1v1h-1zM34 186h1v1h-1zM38 186h1v1h-1zM441 186h1v1h-1zM624 186h1v1h-1zM632 186h1v1h-1zM34 187h1v1h-1zM38 187h1v1h-1zM625 187h1v1h-1zM631 187h1v1h-1zM35 188h3v1h-3zM626 188h1v1h-1zM630 188h1v1h-1zM36 189h1v1h-1zM626 189h1v1h-1zM630 189h1v1h-1zM34 190h5v1h-5zM624 190h9v1h-9zM36 191h1v1h-1zM626 191h1v1h-1zM630 191h1v1h-1zM36 192h1v1h-1zM626 192h1v1h-1zM630 192h1v1h-1zM625 193h1v1h-1zM631 193h1v1h-1zM624 194h1v1h-1zM632 194h1v1h-1zM405 215h3v1h-3zM404 216h1v1h-1zM408 216h1v1h-1zM404 217h1v1h-1zM408 217h1v1h-1zM404 218h1v1h-1zM408 218h1v1h-1zM405 219h3v1h-3zM406 220h1v1h-1zM404 221h5v1h-5zM406 222h1v1h-1zM406 223h1v1h-1zM627 227h3v1h-3zM625 228h2v1h-2zM630 228h2v1h-2zM624 229h1v1h-1zM629 229h1v1h-1zM632 229h1v1h-1zM625 230h2v1h-2zM629 230h1v1h-1zM632 230h1v1h-1zM624 231h1v1h-1zM627 231h1v1h-1zM630 231h2v1h-2zM624 232h1v1h-1zM627 232h1v1h-1zM632 232h1v1h-1zM625 233h2v1h-2zM630 233h2v1h-2zM627 234h3v1h-3zM346 281h1v1h-1zM346 282h1v1h-1zM349 284h1v1h-1zM348 285h3v1h-3zM349 286h1v1h-1zM365 296h1v1h-1zM627 296h3v1h-3zM365 297h1v1h-1zM626 297h1v1h-1zM630 297h1v1h-1zM361 298h9v1h-9zM626 298h1v1h-1zM630 298h1v1h-1zM365 299h1v1h-1zM626 299h1v1h-1zM630 299h1v1h-1zM365 300h1v1h-1zM627 300h3v1h-3zM365 301h1v1h-1zM628 301h1v1h-1zM365 302h1v1h-1zM369 302h3v1h-3zM626 302h5v1h-5zM365 303h1v1h-1zM368 303h1v1h-1zM372 303h1v1h-1zM628 303h1v1h-1zM365 304h3v1h-3zM373 304h1v1h-1zM628 304h1v1h-1zM365 305h1v1h-1zM373 305h1v1h-1zM365 306h1v1h-1zM373 306h1v1h-1zM365 307h1v1h-1zM372 307h1v1h-1zM365 308h1v1h-1zM371 308h1v1h-1zM365 309h1v1h-1zM371 309h1v1h-1zM365 310h1v1h-1zM371 310h1v1h-1zM372 311h1v1h-1zM373 312h1v1h-1zM627 326h1v1h-1zM625 327h5v1h-5zM627 328h1v1h-1zM627 329h1v1h-1zM629 329h2v1h-2zM627 330h2v1h-2zM631 330h1v1h-1zM627 331h1v1h-1zM631 331h1v1h-1zM627 332h1v1h-1zM630 332h1v1h-1zM102 333h3v1h-3zM627 333h1v1h-1zM630 333h1v1h-1zM101 334h1v1h-1zM105 334h1v1h-1zM631 334h1v1h-1zM101 335h1v1h-1zM105 335h1v1h-1zM101 336h1v1h-1zM105 336h1v1h-1zM102 337h3v1h-3zM103 338h1v1h-1zM101 339h5v1h-5zM294 339h1v1h-1zM103 340h1v1h-1zM293 340h1v1h-1zM103 341h1v1h-1zM289 342h1v1h-1zM285 344h1v1h-1zM295 344h1v1h-1zM294 345h3v1h-3zM295 346h1v1h-1zM278 347h1v1h-1zM272 348h1v1h-1zM275 348h1v1h-1zM270 349h1v1h-1zM267 350h1v1h-1zM264 351h1v1h-1zM308 356h5v1h-5zM307 357h1v1h-1zM313 357h1v1h-1zM306 358h1v1h-1zM314 358h1v1h-1zM306 359h1v1h-1zM314 359h1v1h-1zM306 360h1v1h-1zM314 360h1v1h-1zM306 361h1v1h-1zM314 361h1v1h-1zM306 362h1v1h-1zM314 362h1v1h-1zM307 363h1v1h-1zM313 363h1v1h-1zM308 364h5v1h-5zM310 365h1v1h-1zM310 366h1v1h-1zM310 367h1v1h-1zM306 368h9v1h-9zM310 369h1v1h-1zM310 370h1v1h-1zM310 371h1v1h-1zM310 372h1v1h-1zM187 438h1v1h-1zM185 439h5v1h-5zM209 439h1v1h-1zM215 439h1v1h-1zM219 439h3v1h-3zM187 440h1v1h-1zM208 440h2v1h-2zM215 440h2v1h-2zM218 440h1v1h-1zM222 440h1v1h-1zM187 441h1v1h-1zM189 441h2v1h-2zM207 441h1v1h-1zM209 441h1v1h-1zM215 441h1v1h-1zM217 441h1v1h-1zM223 441h1v1h-1zM187 442h2v1h-2zM191 442h1v1h-1zM209 442h1v1h-1zM214 442h1v1h-1zM217 442h1v1h-1zM223 442h1v1h-1zM187 443h1v1h-1zM191 443h1v1h-1zM209 443h1v1h-1zM213 443h1v1h-1zM218 443h1v1h-1zM223 443h1v1h-1zM187 444h1v1h-1zM190 444h1v1h-1zM209 444h1v1h-1zM213 444h1v1h-1zM219 444h1v1h-1zM222 444h1v1h-1zM187 445h1v1h-1zM190 445h1v1h-1zM209 445h1v1h-1zM213 445h1v1h-1zM219 445h3v1h-3zM191 446h1v1h-1zM209 446h1v1h-1zM213 446h1v1h-1zM221 446h1v1h-1zM209 447h1v1h-1zM213 447h1v1h-1zM221 447h1v1h-1zM210 448h1v1h-1zM212 448h1v1h-1zM222 448h1v1h-1zM211 449h1v1h-1zM223 449h1v1h-1zM211 450h1v1h-1zM223 450h1v1h-1zM211 451h1v1h-1zM223 451h1v1h-1zM211 452h1v1h-1zM223 452h1v1h-1zM211 453h1v1h-1zM223 453h1v1h-1zM222 454h1v1h-1zM221 455h1v1h-1z"/>
<path fill="#00ff00" d="M358 63h1v1h-1zM372 63h1v1h-1zM359 64h1v1h-1zM371 64h1v1h-1zM360 65h11v1h-11zM362 66h1v1h-1zM368 66h1v1h-1zM362 67h1v1h-1zM368 67h1v1h-1zM362 68h1v1h-1zM368 68h1v1h-1zM362 69h1v1h-1zM368 69h1v1h-1zM362 70h1v1h-1zM368 70h1v1h-1zM362 71h1v1h-1zM368 71h1v1h-1zM362 72h1v1h-1zM368 72h1v1h-1zM362 73h1v1h-1zM368 73h1v1h-1zM362 74h1v1h-1zM368 74h1v1h-1zM362 75h1v1h-1zM368 75h1v1h-1zM362 76h1v1h-1zM368 76h1v1h-1zM360 77h3v1h-3zM366 77h5v1h-5zM359 78h1v1h-1zM371 78h1v1h-1zM358 79h1v1h-1zM372 79h1v1h-1zM383 85h1v1h-1zM387 85h1v1h-1zM384 86h3v1h-3zM383 87h1v1h-1zM387 87h1v1h-1zM383 88h1v1h-1zM387 88h1v1h-1zM87 89h1v1h-1zM91 89h1v1h-1zM383 89h1v1h-1zM387 89h1v1h-1zM88 90h3v1h-3zM384 90h3v1h-3zM87 91h1v1h-1zM91 91h1v1h-1zM385 91h1v1h-1zM87 92h1v1h-1zM91 92h1v1h-1zM383 92h5v1h-5zM87 93h1v1h-1zM91 93h1v1h-1zM385 93h1v1h-1zM88 94h3v1h-3zM89 95h1v1h-1zM87 96h5v1h-5zM89 97h1v1h-1zM121 113h1v1h-1zM127 113h1v1h-1zM122 114h1v1h-1zM126 114h1v1h-1zM122 115h1v1h-1zM124 115h1v1h-1zM126 115h1v1h-1zM122 116h5v1h-5zM122 117h1v1h-1zM124 117h1v1h-1zM126 117h1v1h-1zM121 118h1v1h-1zM124 118h1v1h-1zM127 118h1v1h-1zM123 119h3v1h-3zM123 120h1v1h-1zM125 120h1v1h-1zM124 121h1v1h-1zM350 147h1v1h-1zM362 147h1v1h-1zM351 148h1v1h-1zM361 148h1v1h-1zM352 149h1v1h-1zM360 149h1v1h-1zM352 150h1v1h-1zM360 150h1v1h-1zM352 151h1v1h-1zM356 151h1v1h-1zM360 151h1v1h-1zM352 152h1v1h-1zM356 152h1v1h-1zM360 152h1v1h-1zM352 153h9v1h-9zM352 154h1v1h-1zM356 154h1v1h-1zM360 154h1v1h-1zM352 155h1v1h-1zM356 155h1v1h-1zM360 155h1v1h-1zM351 156h1v1h-1zM356 156h1v1h-1zM361 156h1v1h-1zM630 156h3v1h-3zM350 157h1v1h-1zM356 157h1v1h-1zM362 157h1v1h-1zM631 157h2v1h-2zM356 158h1v1h-1zM630 158h1v1h-1zM632 158h1v1h-1zM355 159h3v1h-3zM625 159h1v1h-1zM629 159h1v1h-1zM354 160h1v1h-1zM358 160h1v1h-1zM626 160h1v1h-1zM628 160h1v1h-1zM354 161h1v1h-1zM358 161h1v1h-1zM627 161h1v1h-1zM354 162h1v1h-1zM358 162h1v1h-1zM626 162h1v1h-1zM628 162h1v1h-1zM355 163h3v1h-3zM625 163h1v1h-1zM629 163h1v1h-1zM624 164h1v1h-1zM336 168h1v1h-1zM335 169h3v1h-3zM336 170h1v1h-1zM330 176h1v1h-1zM329 180h1v1h-1zM327 184h1v1h-1zM326 188h1v1h-1zM324 192h1v1h-1zM323 196h1v1h-1zM625 196h2v1h-2zM630 196h2v1h-2zM624 197h1v1h-1zM627 197h1v1h-1zM629 197h1v1h-1zM632 197h1v1h-1zM624 198h1v1h-1zM627 198h1v1h-1zM629 198h1v1h-1zM632 198h1v1h-1zM625 199h1v1h-1zM627 199h1v1h-1zM629 199h1v1h-1zM631 199h1v1h-1zM321 200h1v1h-1zM628 200h1v1h-1zM628 201h1v1h-1zM628 202h1v1h-1zM628 203h1v1h-1zM320 204h1v1h-1zM628 204h1v1h-1zM318 208h1v1h-1zM29 211h5v1h-5zM28 212h1v1h-1zM34 212h1v1h-1zM317 212h1v1h-1zM27 213h1v1h-1zM35 213h1v1h-1zM27 214h1v1h-1zM35 214h1v1h-1zM27 215h1v1h-1zM35 215h1v1h-1zM28 216h1v1h-1zM34 216h1v1h-1zM315 216h1v1h-1zM23 217h7v1h-7zM33 217h7v1h-7zM313 220h1v1h-1zM23 221h17v1h-17zM312 224h1v1h-1zM310 228h1v1h-1zM309 232h1v1h-1zM307 236h1v1h-1zM627 236h3v1h-3zM626 237h1v1h-1zM630 237h1v1h-1zM625 238h1v1h-1zM631 238h1v1h-1zM625 239h1v1h-1zM631 239h1v1h-1zM306 240h1v1h-1zM625 240h1v1h-1zM631 240h1v1h-1zM626 241h1v1h-1zM630 241h1v1h-1zM624 242h1v1h-1zM626 242h1v1h-1zM630 242h1v1h-1zM625 243h1v1h-1zM631 243h1v1h-1zM304 244h1v1h-1zM632 244h1v1h-1zM303 248h1v1h-1zM301 252h1v1h-1zM300 256h1v1h-1zM298 260h1v1h-1zM297 264h1v1h-1zM295 268h1v1h-1zM293 272h1v1h-1zM292 276h1v1h-1zM290 280h1v1h-1zM289 284h1v1h-1zM626 286h1v1h-1zM630 286h1v1h-1zM627 287h3v1h-3zM287 288h1v1h-1zM396 288h1v1h-1zM400 288h1v1h-1zM626 288h1v1h-1zM630 288h1v1h-1zM397 289h3v1h-3zM626 289h1v1h-1zM630 289h1v1h-1zM396 290h1v1h-1zM400 290h1v1h-1zM626 290h1v1h-1zM630 290h1v1h-1zM396 291h1v1h-1zM400 291h1v1h-1zM627 291h3v1h-3zM286 292h1v1h-1zM396 292h1v1h-1zM400 292h1v1h-1zM628 292h1v1h-1zM397 293h3v1h-3zM626 293h5v1h-5zM398 294h1v1h-1zM628 294h1v1h-1zM396 295h5v1h-5zM284 296h1v1h-1zM398 296h1v1h-1zM283 300h1v1h-1zM281 304h1v1h-1zM278 312h1v1h-1zM276 316h1v1h-1zM275 320h1v1h-1zM273 324h1v1h-1zM272 328h1v1h-1zM270 332h1v1h-1zM269 336h1v1h-1zM625 336h1v1h-1zM631 336h1v1h-1zM626 337h1v1h-1zM630 337h1v1h-1zM626 338h1v1h-1zM628 338h1v1h-1zM630 338h1v1h-1zM626 339h5v1h-5zM267 340h1v1h-1zM626 340h1v1h-1zM628 340h1v1h-1zM630 340h1v1h-1zM625 341h1v1h-1zM628 341h1v1h-1zM631 341h1v1h-1zM299 342h1v1h-1zM627 342h3v1h-3zM298 343h3v1h-3zM627 343h1v1h-1zM629 343h1v1h-1zM266 344h1v1h-1zM299 344h1v1h-1zM628 344h1v1h-1zM322 345h1v1h-1zM330 345h1v1h-1zM323 346h1v1h-1zM329 346h1v1h-1zM324 347h5v1h-5zM264 348h1v1h-1zM323 348h1v1h-1zM329 348h1v1h-1zM322 349h1v1h-1zM330 349h1v1h-1zM322 350h1v1h-1zM330 350h1v1h-1zM322 351h1v1h-1zM330 351h1v1h-1zM322 352h1v1h-1zM330 352h1v1h-1zM322 353h1v1h-1zM330 353h1v1h-1zM323 354h1v1h-1zM329 354h1v1h-1zM324 355h5v1h-5zM326 356h1v1h-1zM326 357h1v1h-1zM326 358h1v1h-1zM322 359h9v1h-9zM326 360h1v1h-1zM326 361h1v1h-1zM174 390h1v1h-1zM178 390h1v1h-1zM175 391h3v1h-3zM174 392h1v1h-1zM178 392h1v1h-1zM174 393h1v1h-1zM178 393h1v1h-1zM174 394h1v1h-1zM178 394h1v1h-1zM175 395h3v1h-3zM176 396h1v1h-1zM174 397h5v1h-5zM176 398h1v1h-1zM318 424h1v1h-1zM324 424h1v1h-1zM330 424h1v1h-1zM317 425h2v1h-2zM323 425h2v1h-2zM329 425h1v1h-1zM317 426h1v1h-1zM319 426h1v1h-1zM323 426h1v1h-1zM325 426h1v1h-1zM329 426h1v1h-1zM316 427h1v1h-1zM319 427h1v1h-1zM322 427h1v1h-1zM325 427h1v1h-1zM328 427h1v1h-1zM315 428h1v1h-1zM319 428h1v1h-1zM321 428h1v1h-1zM325 428h1v1h-1zM327 428h1v1h-1zM315 429h1v1h-1zM320 429h2v1h-2zM326 429h2v1h-2zM314 430h1v1h-1zM320 430h1v1h-1zM326 430h1v1h-1zM318 434h1v1h-1zM324 434h1v1h-1zM330 434h1v1h-1zM317 435h2v1h-2zM323 435h2v1h-2zM329 435h1v1h-1zM317 436h1v1h-1zM319 436h1v1h-1zM323 436h1v1h-1zM325 436h1v1h-1zM329 436h1v1h-1zM293 437h1v1h-1zM299 437h1v1h-1zM316 437h1v1h-1zM319 437h1v1h-1zM322 437h1v1h-1zM325 437h1v1h-1zM328 437h1v1h-1zM294 438h1v1h-1zM298 438h1v1h-1zM315 438h1v1h-1zM319 438h1v1h-1zM321 438h1v1h-1zM325 438h1v1h-1zM327 438h1v1h-1zM294 439h1v1h-1zM296 439h1v1h-1zM298 439h1v1h-1zM315 439h1v1h-1zM320 439h2v1h-2zM326 439h2v1h-2zM294 440h5v1h-5zM314 440h1v1h-1zM320 440h1v1h-1zM326 440h1v1h-1zM294 441h1v1h-1zM296 441h1v1h-1zM298 441h1v1h-1zM293 442h1v1h-1zM296 442h1v1h-1zM299 442h1v1h-1zM295 443h3v1h-3zM295 444h1v1h-1zM297 444h1v1h-1zM296 445h1v1h-1z"/>
<path fill="#0000ff" d="M261 24h5v1h-5zM258 25h3v1h-3zM266 25h1v1h-1zM257 26h1v1h-1zM267 26h3v1h-3zM256 27h1v1h-1zM266 27h1v1h-1zM270 27h1v1h-1zM255 28h1v1h-1zM265 28h1v1h-1zM271 28h1v1h-1zM265 29h1v1h-1zM271 29h1v1h-1zM257 30h3v1h-3zM265 30h1v1h-1zM271 30h1v1h-1zM256 31h1v1h-1zM260 31h1v1h-1zM266 31h1v1h-1zM270 31h1v1h-1zM255 32h1v1h-1zM261 32h1v1h-1zM267 32h3v1h-3zM288 32h3v1h-3zM255 33h1v1h-1zM261 33h1v1h-1zM287 33h1v1h-1zM291 33h2v1h-2zM255 34h1v1h-1zM261 34h1v1h-1zM271 34h1v1h-1zM288 34h1v1h-1zM292 34h1v1h-1zM256 35h1v1h-1zM260 35h1v1h-1zM270 35h1v1h-1zM289 35h1v1h-1zM293 35h1v1h-1zM257 36h3v1h-3zM269 36h1v1h-1zM289 36h1v1h-1zM293 36h1v1h-1zM260 37h1v1h-1zM266 37h3v1h-3zM289 37h1v1h-1zM293 37h1v1h-1zM261 38h5v1h-5zM288 38h1v1h-1zM292 38h1v1h-1zM287 39h1v1h-1zM291 39h2v1h-2zM288 40h3v1h-3zM171 103h6v1h-6zM170 104h1v1h-1zM176 104h2v1h-2zM169 105h2v1h-2zM178 105h2v1h-2zM170 106h2v1h-2zM179 106h2v1h-2zM171 107h2v1h-2zM180 107h1v1h-1zM172 108h1v1h-1zM180 108h2v1h-2zM173 109h1v1h-1zM181 109h1v1h-1zM173 110h1v1h-1zM181 110h1v1h-1zM173 111h1v1h-1zM181 111h1v1h-1zM173 112h1v1h-1zM181 112h1v1h-1zM173 113h1v1h-1zM181 113h1v1h-1zM172 114h1v1h-1zM180 114h2v1h-2zM171 115h2v1h-2zM180 115h1v1h-1zM170 116h2v1h-2zM179 116h2v1h-2zM169 117h2v1h-2zM178 117h2v1h-2zM170 118h1v1h-1zM176 118h2v1h-2zM171 119h6v1h-6zM186 131h1v1h-1zM185 132h3v1h-3zM186 133h1v1h-1zM188 136h1v1h-1zM189 137h1v1h-1zM372 137h1v1h-1zM375 137h1v1h-1zM378 137h1v1h-1zM189 138h1v1h-1zM372 138h1v1h-1zM374 138h1v1h-1zM376 138h1v1h-1zM378 138h1v1h-1zM189 139h2v1h-2zM372 139h1v1h-1zM375 139h1v1h-1zM378 139h1v1h-1zM190 140h1v1h-1zM373 140h1v1h-1zM377 140h1v1h-1zM191 141h1v1h-1zM374 141h3v1h-3zM191 142h1v1h-1zM375 142h1v1h-1zM192 143h1v1h-1zM373 143h5v1h-5zM192 144h1v1h-1zM375 144h1v1h-1zM192 145h2v1h-2zM375 145h1v1h-1zM193 146h1v1h-1zM194 147h1v1h-1zM193 148h2v1h-2zM195 149h1v1h-1zM195 150h1v1h-1zM195 151h2v1h-2zM196 152h2v1h-2zM197 153h1v1h-1zM196 154h3v1h-3zM198 155h1v1h-1zM198 156h2v1h-2zM197 157h1v1h-1zM199 157h1v1h-1zM199 158h2v1h-2zM200 159h1v1h-1zM199 160h3v1h-3zM201 161h1v1h-1zM201 162h2v1h-2zM200 163h1v1h-1zM202 163h1v1h-1zM202 164h2v1h-2zM203 165h1v1h-1zM201 166h1v1h-1zM203 166h2v1h-2zM625 166h1v1h-1zM628 166h1v1h-1zM630 166h2v1h-2zM204 167h1v1h-1zM624 167h2v1h-2zM628 167h2v1h-2zM632 167h1v1h-1zM204 168h2v1h-2zM625 168h1v1h-1zM627 168h1v1h-1zM630 168h1v1h-1zM632 168h1v1h-1zM203 169h1v1h-1zM205 169h1v1h-1zM625 169h1v1h-1zM627 169h1v1h-1zM630 169h2v1h-2zM206 170h1v1h-1zM625 170h1v1h-1zM627 170h1v1h-1zM631 170h1v1h-1zM206 171h1v1h-1zM626 171h1v1h-1zM632 171h1v1h-1zM204 172h1v1h-1zM207 172h1v1h-1zM626 172h1v1h-1zM632 172h1v1h-1zM207 173h1v1h-1zM626 173h1v1h-1zM632 173h1v1h-1zM208 174h1v1h-1zM631 174h1v1h-1zM205 175h1v1h-1zM208 175h1v1h-1zM209 176h1v1h-1zM209 177h1v1h-1zM207 178h1v1h-1zM210 178h1v1h-1zM210 179h1v1h-1zM211 180h2v1h-2zM208 181h1v1h-1zM211 181h1v1h-1zM77 182h1v1h-1zM80 182h1v1h-1zM83 182h1v1h-1zM212 182h2v1h-2zM76 183h2v1h-2zM79 183h3v1h-3zM83 183h2v1h-2zM212 183h1v1h-1zM77 184h1v1h-1zM80 184h1v1h-1zM83 184h1v1h-1zM209 184h1v1h-1zM213 184h2v1h-2zM78 185h1v1h-1zM80 185h1v1h-1zM82 185h1v1h-1zM213 185h1v1h-1zM79 186h3v1h-3zM214 186h2v1h-2zM80 187h1v1h-1zM211 187h1v1h-1zM214 187h1v1h-1zM78 188h5v1h-5zM215 188h2v1h-2zM80 189h1v1h-1zM215 189h1v1h-1zM80 190h1v1h-1zM212 190h1v1h-1zM216 190h2v1h-2zM216 191h1v1h-1zM217 192h2v1h-2zM213 193h1v1h-1zM217 193h1v1h-1zM218 194h2v1h-2zM218 195h1v1h-1zM215 196h1v1h-1zM219 196h2v1h-2zM219 197h1v1h-1zM220 198h2v1h-2zM216 199h1v1h-1zM220 199h1v1h-1zM221 200h2v1h-2zM221 201h1v1h-1zM217 202h1v1h-1zM222 202h2v1h-2zM222 203h1v1h-1zM223 204h2v1h-2zM219 205h1v1h-1zM224 205h1v1h-1zM224 206h2v1h-2zM625 206h1v1h-1zM631 206h1v1h-1zM225 207h1v1h-1zM626 207h1v1h-1zM630 207h1v1h-1zM220 208h1v1h-1zM225 208h2v1h-2zM627 208h3v1h-3zM226 209h1v1h-1zM626 209h1v1h-1zM630 209h1v1h-1zM226 210h1v1h-1zM228 210h1v1h-1zM625 210h1v1h-1zM631 210h1v1h-1zM221 211h1v1h-1zM227 211h1v1h-1zM625 211h1v1h-1zM631 211h1v1h-1zM227 212h1v1h-1zM229 212h1v1h-1zM625 212h1v1h-1zM631 212h1v1h-1zM228 213h1v1h-1zM626 213h1v1h-1zM630 213h1v1h-1zM223 214h1v1h-1zM228 214h1v1h-1zM230 214h1v1h-1zM627 214h3v1h-3zM229 215h1v1h-1zM229 216h1v1h-1zM231 216h1v1h-1zM224 217h1v1h-1zM230 217h1v1h-1zM230 218h1v1h-1zM232 218h1v1h-1zM231 219h1v1h-1zM225 220h1v1h-1zM231 220h1v1h-1zM233 220h1v1h-1zM232 221h1v1h-1zM232 222h1v1h-1zM234 222h1v1h-1zM227 223h1v1h-1zM233 223h1v1h-1zM233 224h1v1h-1zM235 224h1v1h-1zM234 225h1v1h-1zM228 226h1v1h-1zM234 226h1v1h-1zM236 226h1v1h-1zM235 227h1v1h-1zM235 228h1v1h-1zM237 228h1v1h-1zM229 229h1v1h-1zM236 229h1v1h-1zM236 230h1v1h-1zM238 230h1v1h-1zM237 231h1v1h-1zM231 232h1v1h-1zM237 232h1v1h-1zM239 232h1v1h-1zM238 233h1v1h-1zM238 234h1v1h-1zM240 234h1v1h-1zM232 235h1v1h-1zM239 235h1v1h-1zM239 236h1v1h-1zM241 236h1v1h-1zM240 237h1v1h-1zM233 238h1v1h-1zM241 238h1v1h-1zM243 238h1v1h-1zM241 239h1v1h-1zM242 240h1v1h-1zM244 240h1v1h-1zM234 241h1v1h-1zM242 241h1v1h-1zM243 242h1v1h-1zM245 242h1v1h-1zM243 243h1v1h-1zM236 244h1v1h-1zM244 244h1v1h-1zM246 244h1v1h-1zM244 245h1v1h-1zM245 246h1v1h-1zM247 246h1v1h-1zM624 246h1v1h-1zM626 246h1v1h-1zM628 246h1v1h-1zM237 247h1v1h-1zM245 247h1v1h-1zM625 247h1v1h-1zM627 247h1v1h-1zM629 247h1v1h-1zM631 247h1v1h-1zM246 248h1v1h-1zM248 248h1v1h-1zM625 248h1v1h-1zM627 248h1v1h-1zM629 248h3v1h-3zM246 249h1v1h-1zM625 249h1v1h-1zM627 249h1v1h-1zM629 249h1v1h-1zM631 249h1v1h-1zM238 250h1v1h-1zM247 250h1v1h-1zM249 250h1v1h-1zM625 250h1v1h-1zM627 250h1v1h-1zM629 250h1v1h-1zM631 250h1v1h-1zM247 251h1v1h-1zM625 251h1v1h-1zM627 251h1v1h-1zM629 251h1v1h-1zM631 251h1v1h-1zM248 252h1v1h-1zM250 252h1v1h-1zM625 252h1v1h-1zM627 252h1v1h-1zM629 252h1v1h-1zM631 252h1v1h-1zM240 253h1v1h-1zM248 253h1v1h-1zM625 253h1v1h-1zM627 253h1v1h-1zM630 253h1v1h-1zM249 254h1v1h-1zM251 254h1v1h-1zM629 254h1v1h-1zM631 254h1v1h-1zM249 255h1v1h-1zM241 256h1v1h-1zM250 256h1v1h-1zM252 256h1v1h-1zM250 257h1v1h-1zM251 258h1v1h-1zM253 258h1v1h-1zM242 259h1v1h-1zM251 259h1v1h-1zM252 260h1v1h-1zM254 260h1v1h-1zM252 261h1v1h-1zM244 262h1v1h-1zM253 262h1v1h-1zM255 262h1v1h-1zM253 263h1v1h-1zM254 264h1v1h-1zM256 264h1v1h-1zM245 265h1v1h-1zM254 265h1v1h-1zM255 266h1v1h-1zM258 266h1v1h-1zM255 267h1v1h-1zM246 268h1v1h-1zM256 268h1v1h-1zM259 268h1v1h-1zM256 269h1v1h-1zM257 270h1v1h-1zM260 270h1v1h-1zM248 271h1v1h-1zM257 271h1v1h-1zM258 272h1v1h-1zM261 272h1v1h-1zM259 273h1v1h-1zM249 274h1v1h-1zM259 274h1v1h-1zM262 274h1v1h-1zM260 275h1v1h-1zM260 276h1v1h-1zM263 276h1v1h-1zM626 276h3v1h-3zM250 277h1v1h-1zM261 277h1v1h-1zM625 277h1v1h-1zM629 277h2v1h-2zM261 278h1v1h-1zM264 278h1v1h-1zM626 278h1v1h-1zM630 278h1v1h-1zM262 279h1v1h-1zM368 279h1v1h-1zM374 279h1v1h-1zM380 279h1v1h-1zM627 279h1v1h-1zM631 279h1v1h-1zM252 280h1v1h-1zM262 280h1v1h-1zM265 280h1v1h-1zM368 280h1v1h-1zM374 280h1v1h-1zM380 280h1v1h-1zM627 280h1v1h-1zM631 280h1v1h-1zM263 281h1v1h-1zM367 281h3v1h-3zM372 281h5v1h-5zM379 281h3v1h-3zM627 281h1v1h-1zM631 281h1v1h-1zM263 282h1v1h-1zM266 282h1v1h-1zM350 282h1v1h-1zM368 282h1v1h-1zM374 282h1v1h-1zM380 282h1v1h-1zM626 282h1v1h-1zM630 282h1v1h-1zM253 283h1v1h-1zM264 283h1v1h-1zM349 283h3v1h-3zM368 283h1v1h-1zM374 283h1v1h-1zM380 283h1v1h-1zM625 283h1v1h-1zM629 283h2v1h-2zM264 284h1v1h-1zM267 284h1v1h-1zM350 284h1v1h-1zM369 284h1v1h-1zM374 284h1v1h-1zM379 284h1v1h-1zM626 284h3v1h-3zM265 285h1v1h-1zM369 285h1v1h-1zM374 285h1v1h-1zM379 285h1v1h-1zM254 286h1v1h-1zM265 286h1v1h-1zM268 286h1v1h-1zM370 286h2v1h-2zM374 286h1v1h-1zM377 286h2v1h-2zM266 287h1v1h-1zM372 287h5v1h-5zM266 288h1v1h-1zM269 288h1v1h-1zM374 288h1v1h-1zM256 289h1v1h-1zM267 289h1v1h-1zM374 289h1v1h-1zM267 290h1v1h-1zM270 290h1v1h-1zM374 290h1v1h-1zM268 291h1v1h-1zM370 291h9v1h-9zM34 292h1v1h-1zM37 292h1v1h-1zM40 292h1v1h-1zM257 292h1v1h-1zM268 292h1v1h-1zM271 292h1v1h-1zM374 292h1v1h-1zM34 293h1v1h-1zM36 293h1v1h-1zM38 293h1v1h-1zM40 293h1v1h-1zM269 293h1v1h-1zM374 293h1v1h-1zM34 294h1v1h-1zM37 294h1v1h-1zM40 294h1v1h-1zM269 294h1v1h-1zM272 294h1v1h-1zM374 294h1v1h-1zM35 295h1v1h-1zM39 295h1v1h-1zM258 295h1v1h-1zM270 295h1v1h-1zM374 295h1v1h-1zM36 296h3v1h-3zM270 296h1v1h-1zM274 296h1v1h-1zM37 297h1v1h-1zM271 297h1v1h-1zM35 298h5v1h-5zM260 298h1v1h-1zM271 298h1v1h-1zM275 298h1v1h-1zM37 299h1v1h-1zM272 299h1v1h-1zM37 300h1v1h-1zM272 300h1v1h-1zM276 300h1v1h-1zM261 301h1v1h-1zM273 301h1v1h-1zM273 302h1v1h-1zM277 302h1v1h-1zM274 303h1v1h-1zM262 304h1v1h-1zM274 304h1v1h-1zM278 304h1v1h-1zM275 305h1v1h-1zM276 306h1v1h-1zM279 306h1v1h-1zM264 307h1v1h-1zM276 307h1v1h-1zM277 308h1v1h-1zM280 308h1v1h-1zM277 309h1v1h-1zM265 310h1v1h-1zM278 310h1v1h-1zM281 310h1v1h-1zM278 311h1v1h-1zM279 312h1v1h-1zM282 312h1v1h-1zM266 313h1v1h-1zM279 313h1v1h-1zM38 314h1v1h-1zM42 314h1v1h-1zM46 314h1v1h-1zM280 314h1v1h-1zM283 314h1v1h-1zM39 315h1v1h-1zM41 315h1v1h-1zM43 315h1v1h-1zM45 315h1v1h-1zM47 315h1v1h-1zM280 315h1v1h-1zM40 316h1v1h-1zM44 316h1v1h-1zM48 316h1v1h-1zM268 316h1v1h-1zM281 316h1v1h-1zM284 316h1v1h-1zM40 317h1v1h-1zM44 317h1v1h-1zM48 317h1v1h-1zM281 317h1v1h-1zM40 318h1v1h-1zM44 318h1v1h-1zM48 318h1v1h-1zM282 318h1v1h-1zM285 318h1v1h-1zM40 319h1v1h-1zM44 319h1v1h-1zM48 319h1v1h-1zM269 319h1v1h-1zM282 319h1v1h-1zM40 320h1v1h-1zM44 320h1v1h-1zM48 320h1v1h-1zM283 320h1v1h-1zM286 320h1v1h-1zM40 321h1v1h-1zM44 321h1v1h-1zM48 321h1v1h-1zM283 321h1v1h-1zM40 322h1v1h-1zM44 322h1v1h-1zM48 322h1v1h-1zM270 322h1v1h-1zM284 322h1v1h-1zM287 322h1v1h-1zM40 323h1v1h-1zM44 323h1v1h-1zM48 323h1v1h-1zM284 323h1v1h-1zM40 324h1v1h-1zM44 324h1v1h-1zM48 324h1v1h-1zM285 324h1v1h-1zM289 324h1v1h-1zM40 325h1v1h-1zM44 325h1v1h-1zM48 325h1v1h-1zM53 325h1v1h-1zM272 325h1v1h-1zM285 325h1v1h-1zM40 326h1v1h-1zM44 326h1v1h-1zM48 326h1v1h-1zM52 326h3v1h-3zM286 326h1v1h-1zM290 326h1v1h-1zM40 327h1v1h-1zM44 327h1v1h-1zM48 327h1v1h-1zM53 327h1v1h-1zM286 327h1v1h-1zM40 328h1v1h-1zM44 328h1v1h-1zM48 328h1v1h-1zM53 328h1v1h-1zM273 328h1v1h-1zM287 328h1v1h-1zM291 328h1v1h-1zM49 329h1v1h-1zM52 329h1v1h-1zM287 329h1v1h-1zM50 330h2v1h-2zM288 330h1v1h-1zM292 330h1v1h-1zM274 331h1v1h-1zM288 331h1v1h-1zM289 332h1v1h-1zM293 332h1v1h-1zM289 333h1v1h-1zM276 334h1v1h-1zM290 334h1v1h-1zM294 334h1v1h-1zM290 335h1v1h-1zM291 336h1v1h-1zM295 336h1v1h-1zM277 337h1v1h-1zM291 337h1v1h-1zM292 338h1v1h-1zM296 338h1v1h-1zM292 339h1v1h-1zM278 340h1v1h-1zM280 343h1v1h-1zM281 346h1v1h-1zM625 346h1v1h-1zM628 346h1v1h-1zM631 346h1v1h-1zM624 347h2v1h-2zM627 347h3v1h-3zM631 347h2v1h-2zM625 348h1v1h-1zM628 348h1v1h-1zM631 348h1v1h-1zM626 349h1v1h-1zM628 349h1v1h-1zM630 349h1v1h-1zM627 350h3v1h-3zM628 351h1v1h-1zM626 352h5v1h-5zM628 353h1v1h-1zM628 354h1v1h-1zM264 355h1v1h-1zM263 356h3v1h-3zM399 356h1v1h-1zM415 356h1v1h-1zM625 356h1v1h-1zM628 356h1v1h-1zM631 356h1v1h-1zM264 357h1v1h-1zM400 357h1v1h-1zM414 357h1v1h-1zM625 357h1v1h-1zM627 357h1v1h-1zM629 357h1v1h-1zM631 357h1v1h-1zM401 358h1v1h-1zM413 358h1v1h-1zM625 358h1v1h-1zM628 358h1v1h-1zM631 358h1v1h-1zM402 359h1v1h-1zM412 359h1v1h-1zM626 359h1v1h-1zM630 359h1v1h-1zM402 360h1v1h-1zM412 360h1v1h-1zM627 360h3v1h-3zM403 361h1v1h-1zM411 361h1v1h-1zM628 361h1v1h-1zM403 362h1v1h-1zM411 362h1v1h-1zM626 362h5v1h-5zM403 363h1v1h-1zM411 363h1v1h-1zM628 363h1v1h-1zM399 364h17v1h-17zM628 364h1v1h-1zM403 365h1v1h-1zM411 365h1v1h-1zM403 366h1v1h-1zM411 366h1v1h-1zM403 367h1v1h-1zM411 367h1v1h-1zM402 368h1v1h-1zM412 368h1v1h-1zM402 369h1v1h-1zM412 369h1v1h-1zM401 370h1v1h-1zM413 370h1v1h-1zM400 371h1v1h-1zM414 371h1v1h-1zM399 372h1v1h-1zM415 372h1v1h-1zM251 374h1v1h-1zM256 374h3v1h-3zM263 374h1v1h-1zM251 375h1v1h-1zM255 375h1v1h-1zM259 375h1v1h-1zM263 375h1v1h-1zM251 376h1v1h-1zM255 376h1v1h-1zM259 376h1v1h-1zM263 376h1v1h-1zM251 377h1v1h-1zM255 377h1v1h-1zM259 377h1v1h-1zM263 377h1v1h-1zM251 378h1v1h-1zM256 378h3v1h-3zM263 378h1v1h-1zM252 379h1v1h-1zM262 379h1v1h-1zM252 380h1v1h-1zM262 380h1v1h-1zM253 381h2v1h-2zM260 381h2v1h-2zM386 381h1v1h-1zM389 381h1v1h-1zM392 381h1v1h-1zM255 382h5v1h-5zM385 382h2v1h-2zM388 382h3v1h-3zM392 382h2v1h-2zM257 383h1v1h-1zM386 383h1v1h-1zM389 383h1v1h-1zM392 383h1v1h-1zM257 384h1v1h-1zM387 384h1v1h-1zM389 384h1v1h-1zM391 384h1v1h-1zM257 385h1v1h-1zM388 385h3v1h-3zM253 386h9v1h-9zM389 386h1v1h-1zM257 387h1v1h-1zM387 387h5v1h-5zM257 388h1v1h-1zM389 388h1v1h-1zM257 389h1v1h-1zM389 389h1v1h-1zM257 390h1v1h-1zM270 399h3v1h-3zM269 400h1v1h-1zM273 400h2v1h-2zM270 401h1v1h-1zM274 401h1v1h-1zM271 402h1v1h-1zM275 402h1v1h-1zM271 403h1v1h-1zM275 403h1v1h-1zM271 404h1v1h-1zM275 404h1v1h-1zM270 405h1v1h-1zM274 405h1v1h-1zM269 406h1v1h-1zM273 406h2v1h-2zM270 407h3v1h-3z"/>
<path fill="#00ffff" d="M332 172h1v1h-1zM332 173h1v1h-1zM332 175h1v1h-1zM332 176h2v1h-2zM333 177h1v1h-1zM333 178h1v1h-1zM333 179h1v1h-1zM333 180h1v1h-1zM333 181h1v1h-1zM333 182h1v1h-1zM333 183h1v1h-1zM333 184h2v1h-2zM334 185h1v1h-1zM334 186h1v1h-1zM334 187h1v1h-1zM334 188h1v1h-1zM334 189h1v1h-1zM334 190h1v1h-1zM334 191h1v1h-1zM334 192h2v1h-2zM334 193h1v1h-1zM335 194h1v1h-1zM335 195h1v1h-1zM335 196h1v1h-1zM335 197h1v1h-1zM335 198h1v1h-1zM335 199h1v1h-1zM335 200h2v1h-2zM335 201h1v1h-1zM336 202h1v1h-1zM336 203h1v1h-1zM336 204h1v1h-1zM336 205h1v1h-1zM336 206h1v1h-1zM336 207h1v1h-1zM336 208h2v1h-2zM336 209h1v1h-1zM336 210h2v1h-2zM337 211h1v1h-1zM337 212h1v1h-1zM337 213h1v1h-1zM337 214h1v1h-1zM337 215h1v1h-1zM337 216h2v1h-2zM337 217h1v1h-1zM337 218h2v1h-2zM338 219h1v1h-1zM338 220h1v1h-1zM338 221h1v1h-1zM338 222h1v1h-1zM338 223h1v1h-1zM338 224h2v1h-2zM338 225h1v1h-1zM338 226h2v1h-2zM338 227h1v1h-1zM339 228h1v1h-1zM339 229h1v1h-1zM339 230h1v1h-1zM339 231h1v1h-1zM339 232h2v1h-2zM339 233h1v1h-1zM339 234h2v1h-2zM339 235h1v1h-1zM339 236h2v1h-2zM340 237h1v1h-1zM340 238h1v1h-1zM340 239h1v1h-1zM340 240h2v1h-2zM340 241h1v1h-1zM340 242h2v1h-2zM340 243h1v1h-1zM340 244h2v1h-2zM341 245h1v1h-1zM341 246h2v1h-2zM341 247h1v1h-1zM341 248h2v1h-2zM341 249h1v1h-1zM341 250h2v1h-2zM341 251h1v1h-1zM341 252h2v1h-2zM341 253h1v1h-1zM342 254h2v1h-2zM342 255h1v1h-1zM342 256h2v1h-2zM342 257h1v1h-1zM342 258h2v1h-2zM342 259h1v1h-1zM342 260h2v1h-2zM342 261h1v1h-1zM343 262h2v1h-2zM343 263h1v1h-1zM343 264h2v1h-2zM343 265h1v1h-1zM343 266h2v1h-2zM343 267h1v1h-1zM343 268h2v1h-2zM343 269h1v1h-1zM343 270h1v1h-1zM345 270h1v1h-1zM344 271h1v1h-1zM344 272h2v1h-2zM344 273h1v1h-1zM344 274h2v1h-2zM344 275h1v1h-1zM344 276h2v1h-2zM344 277h1v1h-1zM344 278h1v1h-1zM346 278h1v1h-1zM345 279h1v1h-1zM345 280h2v1h-2zM345 281h1v1h-1zM345 282h1v1h-1zM345 283h1v1h-1zM343 284h1v1h-1zM340 286h2v1h-2zM337 289h1v1h-1zM337 290h1v1h-1zM334 291h1v1h-1zM333 293h1v1h-1zM331 294h1v1h-1zM328 296h2v1h-2zM325 299h1v1h-1zM325 300h1v1h-1zM322 301h1v1h-1zM321 303h1v1h-1zM319 304h1v1h-1zM316 306h2v1h-2zM313 309h1v1h-1zM313 310h1v1h-1zM310 311h1v1h-1zM309 313h1v1h-1zM307 314h1v1h-1zM304 316h2v1h-2zM301 319h1v1h-1zM298 321h1v1h-1zM297 323h1v1h-1zM295 324h1v1h-1zM293 326h1v1h-1zM292 327h1v1h-1zM289 329h1v1h-1zM286 332h1v1h-1zM285 333h1v1h-1zM283 334h1v1h-1zM281 336h1v1h-1zM280 337h1v1h-1zM277 339h1v1h-1zM274 342h1v1h-1zM273 343h1v1h-1zM271 344h1v1h-1zM269 346h1v1h-1zM268 347h1v1h-1zM265 349h1v1h-1z"/>
<text transform="translate(77.34 284) scale(0.78 1)" fill="#f00">1</text>
<text transform="translate(119.34 360) scale(0.78 1)" fill="#ff0">2</text>
<text transform="translate(201.34 407) scale(0.78 1)" fill="#0f0">3</text>
<text transform="translate(296.34 402) scale(0.78 1)" fill="#00f">4</text>
<text transform="translate(370.34 350) scale(0.78 1)" fill="#f00">5</text>
<text transform="translate(404.34 279) scale(0.78 1)" fill="#ff0">6</text>
<text transform="translate(403.34 204) scale(0.78 1)" fill="#0f0">7</text>
<text transform="translate(361.34 128) scale(0.78 1)" fill="#00f">8</text>
<text transform="translate(279.34 81) scale(0.78 1)" fill="#f00">9</text>
<text transform="translate(184.34 86) scale(0.78 1)" fill="#ff0">1<tspan class="z">0</tspan></text>
<text transform="translate(110.34 138) scale(0.78 1)" fill="#0f0">11</text>
<text transform="translate(76.34 209) scale(0.78 1)" fill="#00f">12</text>
</svg>
<div class="t" style="top:7px"><span class="w">Astrolog 5.41G</span></div>
<div class="t" style="top:17px"><span class="l">Chart of the Moment</span></div>
<div class="t" style="top:27px"><span class="w">Sun February 1, 2026</span></div>
<div class="t" style="top:37px"><span class="w">11:08:00pm (ST -8:00 GMT)</span></div>
<div class="t" style="top:47px"><span class="l">San Francisco, CA</span></div>
<div class="t" style="top:57px"><span class="l">122°41'00&quot;W 37°79'00&quot;N</span></div>
<div class="t" style="top:67px"><span class="l">Placidus houses.</span></div>
<div class="t" style="top:77px"><span class="l">Tropical, Geocentric.</span></div>
<div class="t" style="top:87px"><span class="w">Julian Day = 2461073.7972</span></div>
<div class="t" style="top:97px"><span class="l">Obliquity = 23°26'09&quot;</span></div>
<div class="t" style="top:107px"><span class="l">Sidereal time:  7:47:15</span></div>
<div class="t" style="top:117px"><span class="l">DeltaT =  95.3247</span></div>
<div class="t" style="top:137px"><span class="r"> 1st house: </span><span class="g">21Lib42</span></div>
<div class="t" style="top:147px"><span class="y"> 2nd house: </span><span class="b">19Sco34</span></div>
<div class="t" style="top:157px"><span class="g"> 3rd house: </span><span class="r">21Sag02</span></div>
<div class="t" style="top:167px"><span class="b"> 4th house: </span><span class="y">24Cap53</span></div>
<div class="t" style="top:177px"><span class="r"> 5th house: </span><span class="g">27Aqu55</span></div>
<div class="t" style="top:187px"><span class="y"> 6th house: </span><span class="b">27Pis10</span></div>
<div class="t" style="top:197px"><span class="g"> 7th house: </span><span class="r">21Ari42</span></div>
<div class="t" style="top:207px"><span class="b"> 8th house: </span><span class="y">19Tau34</span></div>
<div class="t" style="top:217px"><span class="r"> 9th house: </span><span class="g">21Gem02</span></div>
<div class="t" style="top:227px"><span class="y">10th house: </span><span class="b">24Can53</span></div>
<div class="t" style="top:237px"><span class="g">11th house: </span><span class="r">27Leo55</span></div>
<div class="t" style="top:247px"><span class="b">12th house: </span><span class="y">27Vir10</span></div>
<div class="t" style="top:267px"><span class="r"> Sun: </span><span class="g">13Aqu26</span><span class="w"> </span><span class="l"> + 0°00'</span></div>
<div class="t" style="top:277px"><span class="b">Moon: </span><span class="r">18Leo20</span><span class="w"> </span><span class="l"> + 1°51'</span></div>
<div class="t" style="top:287px"><span class="g">Merc: </span><span class="g">21Aqu46</span><span class="w"> </span><span class="l"> - 1°48'</span></div>
<div class="t" style="top:297px"><span class="y">Venu: </span><span class="g">19Aqu48</span><span class="w"> </span><span class="l"> - 1°23'</span></div>
<div class="t" style="top:307px"><span class="r">Mars: </span><span class="g"> 7Aqu45</span><span class="w"> </span><span class="l"> - 1°03'</span></div>
<div class="t" style="top:317px"><span class="r">Jupi: </span><span class="b">17Can13</span><span class="w">R</span><span class="l"> + 0°18'</span></div>
<div class="t" style="top:327px"><span class="y">Satu: </span><span class="b">28Pis46</span><span class="w"> </span><span class="l"> - 2°10'</span></div>
<div class="t" style="top:337px"><span class="g">Uran: </span><span class="y">27Tau28</span><span class="w">R</span><span class="l"> - 0°11'</span></div>
<div class="t" style="top:347px"><span class="b">Nept: </span><span class="r"> 0Ari11</span><span class="w"> </span><span class="l"> - 1°19'</span></div>
<div class="t" style="top:357px"><span class="b">Plut: </span><span class="g"> 3Aqu44</span><span class="w"> </span><span class="l"> - 3°48'</span></div>
<div class="t" style="top:377px"><span class="l">Fire: 2, Earth: 1,</span></div>
<div class="t" style="top:387px"><span class="l">Air : 5, Water: 2</span></div>
<div class="t" style="top:397px"><span class="l">Car: 2, Fix: 7, Mut: 1</span></div>
<div class="t" style="top:407px"><span class="l">Yang: 7, Yin: 3</span></div>
<div class="t" style="top:417px"><span class="l">M: 3, N: 7, A: 1, D: 9</span></div>
<div class="t" style="top:427px"><span class="l">Ang: 6, Suc: 1, Cad: 3</span></div>
<div class="t" style="top:437px"><span class="l">Learn: 4, Share: 6</span></div>
</div>
</body></html>
